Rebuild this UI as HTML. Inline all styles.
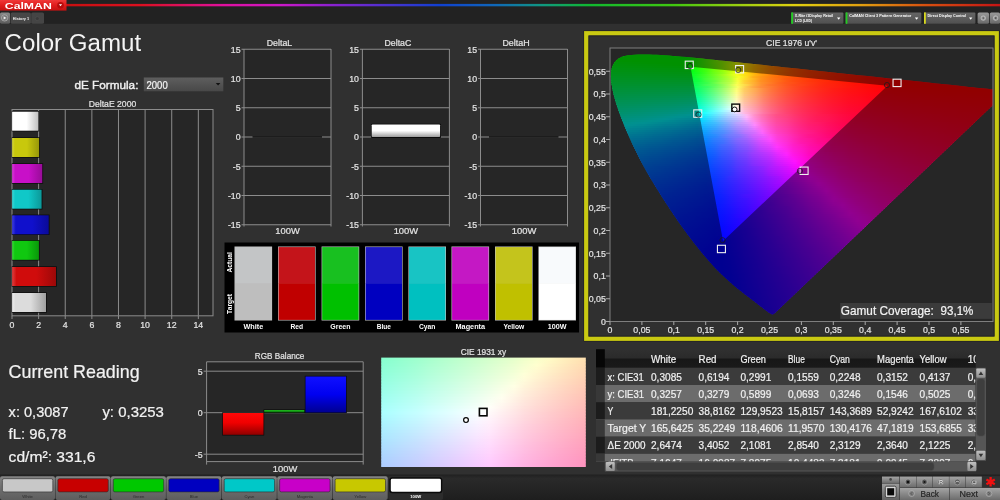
<!DOCTYPE html>
<html><head><meta charset="utf-8"><title>CalMAN - Color Gamut</title>
<style>
html,body{margin:0;padding:0;background:#303030;overflow:hidden}
svg{display:block;position:absolute;left:0;top:0;will-change:transform}
text{font-family:"Liberation Sans",sans-serif}
</style></head><body>
<svg width="1000" height="500" viewBox="0 0 1000 500">
<defs>
<linearGradient id="rb" x1="0" y1="0" x2="1" y2="0"><stop offset="0" stop-color="#c81010"/><stop offset="0.08" stop-color="#dc1020"/><stop offset="0.17" stop-color="#e010a0"/><stop offset="0.23" stop-color="#cc18c8"/><stop offset="0.28" stop-color="#9020d0"/><stop offset="0.34" stop-color="#5030d0"/><stop offset="0.4" stop-color="#1040d0"/><stop offset="0.46" stop-color="#1068b8"/><stop offset="0.51" stop-color="#109880"/><stop offset="0.56" stop-color="#10b830"/><stop offset="0.65" stop-color="#40c810"/><stop offset="0.73" stop-color="#a8d010"/><stop offset="0.78" stop-color="#e0d010"/><stop offset="0.85" stop-color="#e0a010"/><stop offset="0.92" stop-color="#d85010"/><stop offset="1" stop-color="#c41414"/></linearGradient>
<linearGradient id="logo" x1="0" y1="0" x2="0" y2="1"><stop offset="0" stop-color="#f03838"/><stop offset="0.5" stop-color="#e01c1c"/><stop offset="1" stop-color="#c41212"/></linearGradient>
<linearGradient id="gbtn" x1="0" y1="0" x2="0" y2="1"><stop offset="0" stop-color="#8a8a8a"/><stop offset="1" stop-color="#5a5a5a"/></linearGradient>
<linearGradient id="dd" x1="0" y1="0" x2="0" y2="1"><stop offset="0" stop-color="#666"/><stop offset="1" stop-color="#505050"/></linearGradient>
<linearGradient id="sb" x1="0" y1="0" x2="0" y2="1"><stop offset="0" stop-color="#9a9a9a"/><stop offset="1" stop-color="#686868"/></linearGradient>
<linearGradient id="sel" x1="0" y1="0" x2="0" y2="1"><stop offset="0" stop-color="#5e5e5e"/><stop offset="1" stop-color="#484848"/></linearGradient>
<linearGradient id="b0" x1="0" y1="0" x2="1" y2="0"><stop offset="0" stop-color="#ffffff"/><stop offset="0.1" stop-color="#ffffff"/><stop offset="0.55" stop-color="#ffffff"/><stop offset="1" stop-color="#c0c0c0"/></linearGradient>
<linearGradient id="b1" x1="0" y1="0" x2="1" y2="0"><stop offset="0" stop-color="#d6d640"/><stop offset="0.1" stop-color="#c8c80c"/><stop offset="0.55" stop-color="#c8c80c"/><stop offset="1" stop-color="#98980a"/></linearGradient>
<linearGradient id="b2" x1="0" y1="0" x2="1" y2="0"><stop offset="0" stop-color="#d840d8"/><stop offset="0.1" stop-color="#c810c8"/><stop offset="0.55" stop-color="#c810c8"/><stop offset="1" stop-color="#980c98"/></linearGradient>
<linearGradient id="b3" x1="0" y1="0" x2="1" y2="0"><stop offset="0" stop-color="#40d8d8"/><stop offset="0.1" stop-color="#10c8c8"/><stop offset="0.55" stop-color="#10c8c8"/><stop offset="1" stop-color="#0c9898"/></linearGradient>
<linearGradient id="b4" x1="0" y1="0" x2="1" y2="0"><stop offset="0" stop-color="#4040e0"/><stop offset="0.1" stop-color="#1010cc"/><stop offset="0.55" stop-color="#1010cc"/><stop offset="1" stop-color="#0a0a98"/></linearGradient>
<linearGradient id="b5" x1="0" y1="0" x2="1" y2="0"><stop offset="0" stop-color="#40d840"/><stop offset="0.1" stop-color="#10c810"/><stop offset="0.55" stop-color="#10c810"/><stop offset="1" stop-color="#0a980a"/></linearGradient>
<linearGradient id="b6" x1="0" y1="0" x2="1" y2="0"><stop offset="0" stop-color="#e04040"/><stop offset="0.1" stop-color="#d00c0c"/><stop offset="0.55" stop-color="#d00c0c"/><stop offset="1" stop-color="#9c0808"/></linearGradient>
<linearGradient id="b7" x1="0" y1="0" x2="1" y2="0"><stop offset="0" stop-color="#ececec"/><stop offset="0.1" stop-color="#dcdcdc"/><stop offset="0.55" stop-color="#dcdcdc"/><stop offset="1" stop-color="#a0a0a0"/></linearGradient>
<linearGradient id="dcb" x1="0" y1="0" x2="0" y2="1"><stop offset="0" stop-color="#ffffff"/><stop offset="0.5" stop-color="#ffffff"/><stop offset="1" stop-color="#9c9c9c"/></linearGradient>
<clipPath id="loc"><polygon points="773.88,314 773.83,313.99 773.78,313.97 773.73,314 773.67,314.06 773.58,314.08 773.47,314.04 773.36,314.04 773.29,314.11 773.24,314.2 773.18,314.25 773.09,314.28 772.94,314.29 772.76,314.28 772.55,314.25 772.37,314.25 772.18,314.26 771.95,314.23 771.7,314.18 771.38,314.05 770.91,313.81 770.31,313.48 769.63,313.06 768.87,312.54 768,311.93 767,311.21 765.84,310.36 764.53,309.39 763.09,308.27 761.51,307.01 759.77,305.63 757.87,304.15 755.75,302.52 753.38,300.7 750.76,298.69 747.88,296.49 744.79,294.13 741.46,291.55 737.85,288.68 733.92,285.45 729.73,281.86 725.28,277.87 720.44,273.25 714.99,267.63 708.77,260.79 701.93,252.8 694.7,243.84 687.09,233.86 679.15,222.83 671.02,210.87 662.83,198.27 654.73,185.32 646.94,172.15 639.79,159.04 633.49,146.32 627.96,134.19 623.18,122.84 619.23,112.48 616.12,103.25 613.81,95.14 612.21,88.05 611.24,81.93 610.88,76.7 611.07,72.18 611.76,68.28 612.96,64.95 614.61,62.17 616.66,59.92 619.08,58.17 621.8,56.86 624.75,55.93 627.9,55.32 631.24,54.94 634.72,54.7 638.32,54.58 641.94,54.53 645.56,54.53 649.2,54.59 652.9,54.69 656.67,54.84 660.55,55.04 664.54,55.28 668.66,55.57 672.92,55.9 677.33,56.26 681.9,56.66 686.66,57.09 691.6,57.56 696.75,58.06 702.11,58.59 707.68,59.16 713.5,59.75 719.55,60.38 725.86,61.03 732.42,61.72 739.24,62.44 746.33,63.19 753.7,63.97 761.33,64.79 769.22,65.63 777.37,66.5 785.77,67.4 794.41,68.32 803.25,69.26 812.28,70.22 821.48,71.2 830.82,72.19 840.19,73.2 849.43,74.18 858.48,75.15 867.44,76.1 876.38,77.05 885.16,77.99 893.59,78.89 901.63,79.74 909.3,80.55 916.63,81.33 923.58,82.07 930.1,82.77 936.21,83.42 941.89,84.03 947.19,84.59 952.13,85.12 956.73,85.6 961.01,86.06 965.04,86.49 968.88,86.9 972.5,87.28 975.88,87.65 979.04,87.98 981.97,88.3 984.68,88.59 987.17,88.85 989.4,89.09 991.35,89.3 993.1,89.48 994.72,89.66 996.18,89.81 997.5,89.95 998.67,90.08 999.69,90.19 1000.54,90.28 1001.25,90.35 1001.89,90.42 1002.52,90.49 1003.1,90.55 1003.62,90.61 1004.1,90.66 1004.57,90.71 1005.05,90.76 1005.52,90.81 1005.98,90.86 1006.41,90.91 1006.77,90.94 1007.01,90.97 1007.19,90.99 1007.35,91.01 1007.48,91.02 1007.59,91.03 1007.68,91.04 1007.71,91.04"/></clipPath>
<clipPath id="plotc"><rect x="610" y="48" width="383" height="273.5"/></clipPath>
<linearGradient id="r0" x1="618" y1="0" x2="682" y2="0" gradientUnits="userSpaceOnUse"><stop offset="0" stop-color="#00ff00"/><stop offset="0.12" stop-color="#00ff00"/><stop offset="0.25" stop-color="#00ff00"/><stop offset="0.38" stop-color="#00ff00"/><stop offset="0.5" stop-color="#00ff00"/><stop offset="0.62" stop-color="#00ff00"/><stop offset="0.75" stop-color="#00ff00"/><stop offset="0.88" stop-color="#00ff00"/><stop offset="1" stop-color="#00ff00"/></linearGradient>
<linearGradient id="r1" x1="610" y1="0" x2="698" y2="0" gradientUnits="userSpaceOnUse"><stop offset="0" stop-color="#00ff00"/><stop offset="0.09" stop-color="#00ff00"/><stop offset="0.18" stop-color="#00ff00"/><stop offset="0.27" stop-color="#00ff00"/><stop offset="0.36" stop-color="#00ff00"/><stop offset="0.45" stop-color="#00ff00"/><stop offset="0.55" stop-color="#00ff00"/><stop offset="0.64" stop-color="#00ff00"/><stop offset="0.73" stop-color="#00ff00"/><stop offset="0.82" stop-color="#00ff00"/><stop offset="0.91" stop-color="#07ff00"/><stop offset="1" stop-color="#26ff00"/></linearGradient>
<linearGradient id="r2" x1="610" y1="0" x2="722" y2="0" gradientUnits="userSpaceOnUse"><stop offset="0" stop-color="#00ff01"/><stop offset="0.07" stop-color="#00ff00"/><stop offset="0.14" stop-color="#00ff00"/><stop offset="0.21" stop-color="#00ff00"/><stop offset="0.29" stop-color="#00ff00"/><stop offset="0.36" stop-color="#00ff00"/><stop offset="0.43" stop-color="#00ff00"/><stop offset="0.5" stop-color="#00ff00"/><stop offset="0.57" stop-color="#00ff00"/><stop offset="0.64" stop-color="#00ff00"/><stop offset="0.71" stop-color="#05ff00"/><stop offset="0.79" stop-color="#25ff00"/><stop offset="0.86" stop-color="#47ff00"/><stop offset="0.93" stop-color="#6bff00"/><stop offset="1" stop-color="#92ff00"/></linearGradient>
<linearGradient id="r3" x1="610" y1="0" x2="738" y2="0" gradientUnits="userSpaceOnUse"><stop offset="0" stop-color="#00ff07"/><stop offset="0.06" stop-color="#00ff05"/><stop offset="0.12" stop-color="#00ff03"/><stop offset="0.19" stop-color="#00ff01"/><stop offset="0.25" stop-color="#00ff00"/><stop offset="0.31" stop-color="#00ff00"/><stop offset="0.38" stop-color="#00ff00"/><stop offset="0.44" stop-color="#00ff00"/><stop offset="0.5" stop-color="#00ff00"/><stop offset="0.56" stop-color="#00ff00"/><stop offset="0.62" stop-color="#04ff00"/><stop offset="0.69" stop-color="#24ff00"/><stop offset="0.75" stop-color="#46ff00"/><stop offset="0.81" stop-color="#6bff00"/><stop offset="0.88" stop-color="#92ff00"/><stop offset="0.94" stop-color="#bdff00"/><stop offset="1" stop-color="#ecff00"/></linearGradient>
<linearGradient id="r4" x1="610" y1="0" x2="762" y2="0" gradientUnits="userSpaceOnUse"><stop offset="0" stop-color="#00ff0c"/><stop offset="0.05" stop-color="#00ff0b"/><stop offset="0.11" stop-color="#00ff09"/><stop offset="0.16" stop-color="#00ff07"/><stop offset="0.21" stop-color="#00ff05"/><stop offset="0.26" stop-color="#00ff03"/><stop offset="0.32" stop-color="#00ff01"/><stop offset="0.37" stop-color="#00ff00"/><stop offset="0.42" stop-color="#00ff00"/><stop offset="0.47" stop-color="#00ff00"/><stop offset="0.53" stop-color="#03ff00"/><stop offset="0.58" stop-color="#23ff00"/><stop offset="0.63" stop-color="#45ff00"/><stop offset="0.68" stop-color="#6aff00"/><stop offset="0.74" stop-color="#92ff00"/><stop offset="0.79" stop-color="#beff00"/><stop offset="0.84" stop-color="#edff00"/><stop offset="0.89" stop-color="#ffe100"/><stop offset="0.95" stop-color="#ffbc00"/><stop offset="1" stop-color="#ff9f00"/></linearGradient>
<linearGradient id="r5" x1="610" y1="0" x2="778" y2="0" gradientUnits="userSpaceOnUse"><stop offset="0" stop-color="#00ff12"/><stop offset="0.05" stop-color="#00ff11"/><stop offset="0.1" stop-color="#00ff0f"/><stop offset="0.14" stop-color="#00ff0d"/><stop offset="0.19" stop-color="#00ff0c"/><stop offset="0.24" stop-color="#00ff0a"/><stop offset="0.29" stop-color="#00ff08"/><stop offset="0.33" stop-color="#00ff05"/><stop offset="0.38" stop-color="#00ff03"/><stop offset="0.43" stop-color="#00ff00"/><stop offset="0.48" stop-color="#01ff00"/><stop offset="0.52" stop-color="#22ff00"/><stop offset="0.57" stop-color="#44ff00"/><stop offset="0.62" stop-color="#6aff00"/><stop offset="0.67" stop-color="#92ff00"/><stop offset="0.71" stop-color="#beff00"/><stop offset="0.76" stop-color="#eeff00"/><stop offset="0.81" stop-color="#ffe000"/><stop offset="0.86" stop-color="#ffbb00"/><stop offset="0.9" stop-color="#ff9e00"/><stop offset="0.95" stop-color="#ff8700"/><stop offset="1" stop-color="#ff7400"/></linearGradient>
<linearGradient id="r6" x1="610" y1="0" x2="794" y2="0" gradientUnits="userSpaceOnUse"><stop offset="0" stop-color="#00ff18"/><stop offset="0.04" stop-color="#00ff17"/><stop offset="0.09" stop-color="#00ff15"/><stop offset="0.13" stop-color="#00ff14"/><stop offset="0.17" stop-color="#00ff12"/><stop offset="0.22" stop-color="#00ff10"/><stop offset="0.26" stop-color="#00ff0e"/><stop offset="0.3" stop-color="#00ff0c"/><stop offset="0.35" stop-color="#00ff0a"/><stop offset="0.39" stop-color="#00ff08"/><stop offset="0.43" stop-color="#00ff06"/><stop offset="0.48" stop-color="#21ff03"/><stop offset="0.52" stop-color="#44ff00"/><stop offset="0.57" stop-color="#69ff00"/><stop offset="0.61" stop-color="#92ff00"/><stop offset="0.65" stop-color="#bfff00"/><stop offset="0.7" stop-color="#efff00"/><stop offset="0.74" stop-color="#ffde00"/><stop offset="0.78" stop-color="#ffb900"/><stop offset="0.83" stop-color="#ff9c00"/><stop offset="0.87" stop-color="#ff8500"/><stop offset="0.91" stop-color="#ff7300"/><stop offset="0.96" stop-color="#ff6300"/><stop offset="1" stop-color="#ff5600"/></linearGradient>
<linearGradient id="r7" x1="610" y1="0" x2="818" y2="0" gradientUnits="userSpaceOnUse"><stop offset="0" stop-color="#00ff1e"/><stop offset="0.04" stop-color="#00ff1d"/><stop offset="0.08" stop-color="#00ff1c"/><stop offset="0.12" stop-color="#00ff1a"/><stop offset="0.15" stop-color="#00ff19"/><stop offset="0.19" stop-color="#00ff17"/><stop offset="0.23" stop-color="#00ff16"/><stop offset="0.27" stop-color="#00ff14"/><stop offset="0.31" stop-color="#00ff12"/><stop offset="0.35" stop-color="#00ff10"/><stop offset="0.38" stop-color="#00ff0e"/><stop offset="0.42" stop-color="#1fff0b"/><stop offset="0.46" stop-color="#43ff09"/><stop offset="0.5" stop-color="#69ff06"/><stop offset="0.54" stop-color="#92ff03"/><stop offset="0.58" stop-color="#bfff00"/><stop offset="0.62" stop-color="#f1ff00"/><stop offset="0.65" stop-color="#ffdd00"/><stop offset="0.69" stop-color="#ffb800"/><stop offset="0.73" stop-color="#ff9b00"/><stop offset="0.77" stop-color="#ff8400"/><stop offset="0.81" stop-color="#ff7100"/><stop offset="0.85" stop-color="#ff6200"/><stop offset="0.88" stop-color="#ff5400"/><stop offset="0.92" stop-color="#ff4900"/><stop offset="0.96" stop-color="#ff3f00"/><stop offset="1" stop-color="#ff3700"/></linearGradient>
<linearGradient id="r8" x1="610" y1="0" x2="834" y2="0" gradientUnits="userSpaceOnUse"><stop offset="0" stop-color="#00ff24"/><stop offset="0.04" stop-color="#00ff23"/><stop offset="0.07" stop-color="#00ff22"/><stop offset="0.11" stop-color="#00ff21"/><stop offset="0.14" stop-color="#00ff20"/><stop offset="0.18" stop-color="#00ff1e"/><stop offset="0.21" stop-color="#00ff1d"/><stop offset="0.25" stop-color="#00ff1b"/><stop offset="0.29" stop-color="#00ff19"/><stop offset="0.32" stop-color="#00ff18"/><stop offset="0.36" stop-color="#00ff16"/><stop offset="0.39" stop-color="#1eff14"/><stop offset="0.43" stop-color="#42ff11"/><stop offset="0.46" stop-color="#69ff0f"/><stop offset="0.5" stop-color="#92ff0c"/><stop offset="0.54" stop-color="#c0ff0a"/><stop offset="0.57" stop-color="#f2ff06"/><stop offset="0.61" stop-color="#ffdb03"/><stop offset="0.64" stop-color="#ffb600"/><stop offset="0.68" stop-color="#ff9a00"/><stop offset="0.71" stop-color="#ff8300"/><stop offset="0.75" stop-color="#ff7000"/><stop offset="0.79" stop-color="#ff6000"/><stop offset="0.82" stop-color="#ff5300"/><stop offset="0.86" stop-color="#ff4800"/><stop offset="0.89" stop-color="#ff3e00"/><stop offset="0.93" stop-color="#ff3600"/><stop offset="0.96" stop-color="#ff2e00"/><stop offset="1" stop-color="#ff2700"/></linearGradient>
<linearGradient id="r9" x1="610" y1="0" x2="850" y2="0" gradientUnits="userSpaceOnUse"><stop offset="0" stop-color="#00ff2b"/><stop offset="0.03" stop-color="#00ff2a"/><stop offset="0.07" stop-color="#00ff29"/><stop offset="0.1" stop-color="#00ff28"/><stop offset="0.13" stop-color="#00ff27"/><stop offset="0.17" stop-color="#00ff25"/><stop offset="0.2" stop-color="#00ff24"/><stop offset="0.23" stop-color="#00ff23"/><stop offset="0.27" stop-color="#00ff21"/><stop offset="0.3" stop-color="#00ff20"/><stop offset="0.33" stop-color="#00ff1e"/><stop offset="0.37" stop-color="#1dff1c"/><stop offset="0.4" stop-color="#41ff1a"/><stop offset="0.43" stop-color="#68ff18"/><stop offset="0.47" stop-color="#92ff16"/><stop offset="0.5" stop-color="#c1ff14"/><stop offset="0.53" stop-color="#f3ff11"/><stop offset="0.57" stop-color="#ffda0c"/><stop offset="0.6" stop-color="#ffb508"/><stop offset="0.63" stop-color="#ff9804"/><stop offset="0.67" stop-color="#ff8102"/><stop offset="0.7" stop-color="#ff6f00"/><stop offset="0.73" stop-color="#ff5f00"/><stop offset="0.77" stop-color="#ff5200"/><stop offset="0.8" stop-color="#ff4700"/><stop offset="0.83" stop-color="#ff3d00"/><stop offset="0.87" stop-color="#ff3500"/><stop offset="0.9" stop-color="#ff2d00"/><stop offset="0.93" stop-color="#ff2600"/><stop offset="0.97" stop-color="#ff2100"/><stop offset="1" stop-color="#ff1b00"/></linearGradient>
<linearGradient id="r10" x1="610" y1="0" x2="874" y2="0" gradientUnits="userSpaceOnUse"><stop offset="0" stop-color="#00ff31"/><stop offset="0.03" stop-color="#00ff30"/><stop offset="0.06" stop-color="#00ff2f"/><stop offset="0.09" stop-color="#00ff2e"/><stop offset="0.12" stop-color="#00ff2e"/><stop offset="0.15" stop-color="#00ff2d"/><stop offset="0.18" stop-color="#00ff2c"/><stop offset="0.21" stop-color="#00ff2a"/><stop offset="0.24" stop-color="#00ff29"/><stop offset="0.27" stop-color="#00ff28"/><stop offset="0.3" stop-color="#00ff27"/><stop offset="0.33" stop-color="#1cff25"/><stop offset="0.36" stop-color="#40ff24"/><stop offset="0.39" stop-color="#68ff22"/><stop offset="0.42" stop-color="#92ff20"/><stop offset="0.45" stop-color="#c1ff1e"/><stop offset="0.48" stop-color="#f4ff1c"/><stop offset="0.52" stop-color="#ffd815"/><stop offset="0.55" stop-color="#ffb310"/><stop offset="0.58" stop-color="#ff970c"/><stop offset="0.61" stop-color="#ff8008"/><stop offset="0.64" stop-color="#ff6d05"/><stop offset="0.67" stop-color="#ff5e03"/><stop offset="0.7" stop-color="#ff5101"/><stop offset="0.73" stop-color="#ff4600"/><stop offset="0.76" stop-color="#ff3c00"/><stop offset="0.79" stop-color="#ff3400"/><stop offset="0.82" stop-color="#ff2c00"/><stop offset="0.85" stop-color="#ff2500"/><stop offset="0.88" stop-color="#ff2000"/><stop offset="0.91" stop-color="#ff1a00"/><stop offset="0.94" stop-color="#ff1500"/><stop offset="0.97" stop-color="#ff1100"/><stop offset="1" stop-color="#ff0d00"/></linearGradient>
<linearGradient id="r11" x1="610" y1="0" x2="890" y2="0" gradientUnits="userSpaceOnUse"><stop offset="0" stop-color="#00ff37"/><stop offset="0.03" stop-color="#00ff37"/><stop offset="0.06" stop-color="#00ff36"/><stop offset="0.09" stop-color="#00ff35"/><stop offset="0.11" stop-color="#00ff35"/><stop offset="0.14" stop-color="#00ff34"/><stop offset="0.17" stop-color="#00ff33"/><stop offset="0.2" stop-color="#00ff32"/><stop offset="0.23" stop-color="#00ff31"/><stop offset="0.26" stop-color="#00ff30"/><stop offset="0.29" stop-color="#00ff2f"/><stop offset="0.31" stop-color="#1bff2e"/><stop offset="0.34" stop-color="#3fff2d"/><stop offset="0.37" stop-color="#67ff2b"/><stop offset="0.4" stop-color="#92ff2a"/><stop offset="0.43" stop-color="#c2ff28"/><stop offset="0.46" stop-color="#f5ff27"/><stop offset="0.49" stop-color="#ffd71f"/><stop offset="0.51" stop-color="#ffb218"/><stop offset="0.54" stop-color="#ff9513"/><stop offset="0.57" stop-color="#ff7f0f"/><stop offset="0.6" stop-color="#ff6c0b"/><stop offset="0.63" stop-color="#ff5d08"/><stop offset="0.66" stop-color="#ff5006"/><stop offset="0.69" stop-color="#ff4404"/><stop offset="0.71" stop-color="#ff3b02"/><stop offset="0.74" stop-color="#ff3201"/><stop offset="0.77" stop-color="#ff2b00"/><stop offset="0.8" stop-color="#ff2400"/><stop offset="0.83" stop-color="#ff1f00"/><stop offset="0.86" stop-color="#ff1900"/><stop offset="0.89" stop-color="#ff1500"/><stop offset="0.91" stop-color="#ff1000"/><stop offset="0.94" stop-color="#ff0c00"/><stop offset="0.97" stop-color="#ff0900"/><stop offset="1" stop-color="#ff0500"/></linearGradient>
<linearGradient id="r12" x1="610" y1="0" x2="906" y2="0" gradientUnits="userSpaceOnUse"><stop offset="0" stop-color="#00ff3e"/><stop offset="0.03" stop-color="#00ff3d"/><stop offset="0.05" stop-color="#00ff3d"/><stop offset="0.08" stop-color="#00ff3c"/><stop offset="0.11" stop-color="#00ff3c"/><stop offset="0.14" stop-color="#00ff3b"/><stop offset="0.16" stop-color="#00ff3b"/><stop offset="0.19" stop-color="#00ff3a"/><stop offset="0.22" stop-color="#00ff3a"/><stop offset="0.24" stop-color="#00ff39"/><stop offset="0.27" stop-color="#00ff38"/><stop offset="0.3" stop-color="#1aff37"/><stop offset="0.32" stop-color="#3fff36"/><stop offset="0.35" stop-color="#67ff35"/><stop offset="0.38" stop-color="#92ff34"/><stop offset="0.41" stop-color="#c2ff33"/><stop offset="0.43" stop-color="#f7ff32"/><stop offset="0.46" stop-color="#ffd629"/><stop offset="0.49" stop-color="#ffb021"/><stop offset="0.51" stop-color="#ff941a"/><stop offset="0.54" stop-color="#ff7d15"/><stop offset="0.57" stop-color="#ff6b11"/><stop offset="0.59" stop-color="#ff5b0e"/><stop offset="0.62" stop-color="#ff4e0b"/><stop offset="0.65" stop-color="#ff4309"/><stop offset="0.68" stop-color="#ff3a07"/><stop offset="0.7" stop-color="#ff3105"/><stop offset="0.73" stop-color="#ff2a03"/><stop offset="0.76" stop-color="#ff2302"/><stop offset="0.78" stop-color="#ff1e00"/><stop offset="0.81" stop-color="#ff1800"/><stop offset="0.84" stop-color="#ff1400"/><stop offset="0.86" stop-color="#ff0f00"/><stop offset="0.89" stop-color="#ff0b00"/><stop offset="0.92" stop-color="#ff0800"/><stop offset="0.95" stop-color="#ff0500"/><stop offset="0.97" stop-color="#ff0200"/><stop offset="1" stop-color="#ff0000"/></linearGradient>
<linearGradient id="r13" x1="610" y1="0" x2="930" y2="0" gradientUnits="userSpaceOnUse"><stop offset="0" stop-color="#00ff44"/><stop offset="0.03" stop-color="#00ff44"/><stop offset="0.05" stop-color="#00ff44"/><stop offset="0.07" stop-color="#00ff44"/><stop offset="0.1" stop-color="#00ff43"/><stop offset="0.12" stop-color="#00ff43"/><stop offset="0.15" stop-color="#00ff43"/><stop offset="0.17" stop-color="#00ff42"/><stop offset="0.2" stop-color="#00ff42"/><stop offset="0.23" stop-color="#00ff41"/><stop offset="0.25" stop-color="#00ff41"/><stop offset="0.28" stop-color="#18ff41"/><stop offset="0.3" stop-color="#3eff40"/><stop offset="0.33" stop-color="#66ff40"/><stop offset="0.35" stop-color="#92ff3f"/><stop offset="0.38" stop-color="#c3ff3e"/><stop offset="0.4" stop-color="#f8ff3e"/><stop offset="0.42" stop-color="#ffd432"/><stop offset="0.45" stop-color="#ffaf29"/><stop offset="0.47" stop-color="#ff9222"/><stop offset="0.5" stop-color="#ff7c1c"/><stop offset="0.53" stop-color="#ff6917"/><stop offset="0.55" stop-color="#ff5a13"/><stop offset="0.57" stop-color="#ff4d10"/><stop offset="0.6" stop-color="#ff420d"/><stop offset="0.62" stop-color="#ff390b"/><stop offset="0.65" stop-color="#ff3009"/><stop offset="0.68" stop-color="#ff2907"/><stop offset="0.7" stop-color="#ff2205"/><stop offset="0.72" stop-color="#ff1d04"/><stop offset="0.75" stop-color="#ff1703"/><stop offset="0.78" stop-color="#ff1301"/><stop offset="0.8" stop-color="#ff0f00"/><stop offset="0.82" stop-color="#ff0b00"/><stop offset="0.85" stop-color="#ff0700"/><stop offset="0.88" stop-color="#ff0400"/><stop offset="0.9" stop-color="#ff0100"/><stop offset="0.93" stop-color="#ff0000"/><stop offset="0.95" stop-color="#ff0000"/><stop offset="0.97" stop-color="#ff0000"/><stop offset="1" stop-color="#ff0000"/></linearGradient>
<linearGradient id="r14" x1="610" y1="0" x2="946" y2="0" gradientUnits="userSpaceOnUse"><stop offset="0" stop-color="#00ff4b"/><stop offset="0.02" stop-color="#00ff4b"/><stop offset="0.05" stop-color="#00ff4b"/><stop offset="0.07" stop-color="#00ff4b"/><stop offset="0.1" stop-color="#00ff4b"/><stop offset="0.12" stop-color="#00ff4b"/><stop offset="0.14" stop-color="#00ff4b"/><stop offset="0.17" stop-color="#00ff4b"/><stop offset="0.19" stop-color="#00ff4a"/><stop offset="0.21" stop-color="#00ff4a"/><stop offset="0.24" stop-color="#00ff4a"/><stop offset="0.26" stop-color="#17ff4a"/><stop offset="0.29" stop-color="#3dff4a"/><stop offset="0.31" stop-color="#66ff4a"/><stop offset="0.33" stop-color="#92ff4a"/><stop offset="0.36" stop-color="#c3ff4a"/><stop offset="0.38" stop-color="#f9ff49"/><stop offset="0.4" stop-color="#ffd23c"/><stop offset="0.43" stop-color="#ffad32"/><stop offset="0.45" stop-color="#ff9129"/><stop offset="0.48" stop-color="#ff7a23"/><stop offset="0.5" stop-color="#ff681d"/><stop offset="0.52" stop-color="#ff5919"/><stop offset="0.55" stop-color="#ff4c15"/><stop offset="0.57" stop-color="#ff4112"/><stop offset="0.6" stop-color="#ff370f"/><stop offset="0.62" stop-color="#ff2f0d"/><stop offset="0.64" stop-color="#ff280b"/><stop offset="0.67" stop-color="#ff2109"/><stop offset="0.69" stop-color="#ff1c07"/><stop offset="0.71" stop-color="#ff1706"/><stop offset="0.74" stop-color="#ff1204"/><stop offset="0.76" stop-color="#ff0e03"/><stop offset="0.79" stop-color="#ff0a02"/><stop offset="0.81" stop-color="#ff0601"/><stop offset="0.83" stop-color="#ff0300"/><stop offset="0.86" stop-color="#ff0000"/><stop offset="0.88" stop-color="#ff0000"/><stop offset="0.9" stop-color="#ff0000"/><stop offset="0.93" stop-color="#ff0000"/><stop offset="0.95" stop-color="#ff0000"/><stop offset="0.98" stop-color="#ff0000"/><stop offset="1" stop-color="#ff0000"/></linearGradient>
<linearGradient id="r15" x1="610" y1="0" x2="962" y2="0" gradientUnits="userSpaceOnUse"><stop offset="0" stop-color="#00ff52"/><stop offset="0.02" stop-color="#00ff52"/><stop offset="0.05" stop-color="#00ff52"/><stop offset="0.07" stop-color="#00ff52"/><stop offset="0.09" stop-color="#00ff52"/><stop offset="0.11" stop-color="#00ff53"/><stop offset="0.14" stop-color="#00ff53"/><stop offset="0.16" stop-color="#00ff53"/><stop offset="0.18" stop-color="#00ff53"/><stop offset="0.2" stop-color="#00ff53"/><stop offset="0.23" stop-color="#00ff54"/><stop offset="0.25" stop-color="#16ff54"/><stop offset="0.27" stop-color="#3cff54"/><stop offset="0.3" stop-color="#65ff54"/><stop offset="0.32" stop-color="#92ff55"/><stop offset="0.34" stop-color="#c4ff55"/><stop offset="0.36" stop-color="#fbff56"/><stop offset="0.39" stop-color="#ffd147"/><stop offset="0.41" stop-color="#ffac3a"/><stop offset="0.43" stop-color="#ff8f31"/><stop offset="0.45" stop-color="#ff792a"/><stop offset="0.48" stop-color="#ff6624"/><stop offset="0.5" stop-color="#ff571f"/><stop offset="0.52" stop-color="#ff4a1a"/><stop offset="0.55" stop-color="#ff4017"/><stop offset="0.57" stop-color="#ff3614"/><stop offset="0.59" stop-color="#ff2e11"/><stop offset="0.61" stop-color="#ff270f"/><stop offset="0.64" stop-color="#ff200d"/><stop offset="0.66" stop-color="#ff1b0b"/><stop offset="0.68" stop-color="#ff1609"/><stop offset="0.7" stop-color="#ff1108"/><stop offset="0.73" stop-color="#ff0d06"/><stop offset="0.75" stop-color="#ff0905"/><stop offset="0.77" stop-color="#ff0504"/><stop offset="0.8" stop-color="#ff0203"/><stop offset="0.82" stop-color="#ff0002"/><stop offset="0.84" stop-color="#ff0001"/><stop offset="0.86" stop-color="#ff0000"/><stop offset="0.89" stop-color="#ff0000"/><stop offset="0.91" stop-color="#ff0000"/><stop offset="0.93" stop-color="#ff0000"/><stop offset="0.95" stop-color="#ff0000"/><stop offset="0.98" stop-color="#ff0000"/><stop offset="1" stop-color="#ff0000"/></linearGradient>
<linearGradient id="r16" x1="610" y1="0" x2="986" y2="0" gradientUnits="userSpaceOnUse"><stop offset="0" stop-color="#00ff59"/><stop offset="0.02" stop-color="#00ff59"/><stop offset="0.04" stop-color="#00ff59"/><stop offset="0.06" stop-color="#00ff5a"/><stop offset="0.09" stop-color="#00ff5a"/><stop offset="0.11" stop-color="#00ff5b"/><stop offset="0.13" stop-color="#00ff5b"/><stop offset="0.15" stop-color="#00ff5b"/><stop offset="0.17" stop-color="#00ff5c"/><stop offset="0.19" stop-color="#00ff5d"/><stop offset="0.21" stop-color="#00ff5d"/><stop offset="0.23" stop-color="#14ff5e"/><stop offset="0.26" stop-color="#3bff5f"/><stop offset="0.28" stop-color="#65ff5f"/><stop offset="0.3" stop-color="#92ff60"/><stop offset="0.32" stop-color="#c5ff61"/><stop offset="0.34" stop-color="#fcff62"/><stop offset="0.36" stop-color="#ffcf51"/><stop offset="0.38" stop-color="#ffaa43"/><stop offset="0.4" stop-color="#ff8e39"/><stop offset="0.43" stop-color="#ff7730"/><stop offset="0.45" stop-color="#ff652a"/><stop offset="0.47" stop-color="#ff5624"/><stop offset="0.49" stop-color="#ff4920"/><stop offset="0.51" stop-color="#ff3e1c"/><stop offset="0.53" stop-color="#ff3518"/><stop offset="0.55" stop-color="#ff2d15"/><stop offset="0.57" stop-color="#ff2613"/><stop offset="0.6" stop-color="#ff1f10"/><stop offset="0.62" stop-color="#ff1a0e"/><stop offset="0.64" stop-color="#ff150c"/><stop offset="0.66" stop-color="#ff100b"/><stop offset="0.68" stop-color="#ff0c09"/><stop offset="0.7" stop-color="#ff0808"/><stop offset="0.72" stop-color="#ff0506"/><stop offset="0.74" stop-color="#ff0105"/><stop offset="0.77" stop-color="#ff0004"/><stop offset="0.79" stop-color="#ff0003"/><stop offset="0.81" stop-color="#ff0002"/><stop offset="0.83" stop-color="#ff0001"/><stop offset="0.85" stop-color="#ff0001"/><stop offset="0.87" stop-color="#ff0000"/><stop offset="0.89" stop-color="#ff0000"/><stop offset="0.91" stop-color="#ff0000"/><stop offset="0.94" stop-color="#ff0000"/><stop offset="0.96" stop-color="#ff0000"/><stop offset="0.98" stop-color="#ff0000"/><stop offset="1" stop-color="#ff0000"/></linearGradient>
<linearGradient id="r17" x1="610" y1="0" x2="994" y2="0" gradientUnits="userSpaceOnUse"><stop offset="0" stop-color="#00ff60"/><stop offset="0.02" stop-color="#00ff60"/><stop offset="0.04" stop-color="#00ff61"/><stop offset="0.06" stop-color="#00ff61"/><stop offset="0.08" stop-color="#00ff62"/><stop offset="0.1" stop-color="#00ff63"/><stop offset="0.12" stop-color="#00ff63"/><stop offset="0.15" stop-color="#00ff64"/><stop offset="0.17" stop-color="#00ff65"/><stop offset="0.19" stop-color="#00ff66"/><stop offset="0.21" stop-color="#00ff67"/><stop offset="0.23" stop-color="#13ff68"/><stop offset="0.25" stop-color="#3aff69"/><stop offset="0.27" stop-color="#64ff6a"/><stop offset="0.29" stop-color="#92ff6c"/><stop offset="0.31" stop-color="#c5ff6d"/><stop offset="0.33" stop-color="#feff6f"/><stop offset="0.35" stop-color="#ffce5b"/><stop offset="0.38" stop-color="#ffa94c"/><stop offset="0.4" stop-color="#ff8c41"/><stop offset="0.42" stop-color="#ff7637"/><stop offset="0.44" stop-color="#ff6430"/><stop offset="0.46" stop-color="#ff552a"/><stop offset="0.48" stop-color="#ff4825"/><stop offset="0.5" stop-color="#ff3d20"/><stop offset="0.52" stop-color="#ff341d"/><stop offset="0.54" stop-color="#ff2c19"/><stop offset="0.56" stop-color="#ff2517"/><stop offset="0.58" stop-color="#ff1e14"/><stop offset="0.6" stop-color="#ff1912"/><stop offset="0.62" stop-color="#ff1410"/><stop offset="0.65" stop-color="#ff0f0e"/><stop offset="0.67" stop-color="#ff0b0c"/><stop offset="0.69" stop-color="#ff070b"/><stop offset="0.71" stop-color="#ff0409"/><stop offset="0.73" stop-color="#ff0108"/><stop offset="0.75" stop-color="#ff0007"/><stop offset="0.77" stop-color="#ff0006"/><stop offset="0.79" stop-color="#ff0005"/><stop offset="0.81" stop-color="#ff0004"/><stop offset="0.83" stop-color="#ff0003"/><stop offset="0.85" stop-color="#ff0002"/><stop offset="0.88" stop-color="#ff0001"/><stop offset="0.9" stop-color="#ff0001"/><stop offset="0.92" stop-color="#ff0000"/><stop offset="0.94" stop-color="#ff0000"/><stop offset="0.96" stop-color="#ff0000"/><stop offset="0.98" stop-color="#ff0000"/><stop offset="1" stop-color="#ff0000"/></linearGradient>
<linearGradient id="r18" x1="610" y1="0" x2="994" y2="0" gradientUnits="userSpaceOnUse"><stop offset="0" stop-color="#00ff67"/><stop offset="0.02" stop-color="#00ff67"/><stop offset="0.04" stop-color="#00ff68"/><stop offset="0.06" stop-color="#00ff69"/><stop offset="0.08" stop-color="#00ff6a"/><stop offset="0.1" stop-color="#00ff6b"/><stop offset="0.12" stop-color="#00ff6c"/><stop offset="0.15" stop-color="#00ff6d"/><stop offset="0.17" stop-color="#00ff6e"/><stop offset="0.19" stop-color="#00ff70"/><stop offset="0.21" stop-color="#00ff71"/><stop offset="0.23" stop-color="#12ff72"/><stop offset="0.25" stop-color="#39ff74"/><stop offset="0.27" stop-color="#64ff76"/><stop offset="0.29" stop-color="#92ff78"/><stop offset="0.31" stop-color="#c6ff7a"/><stop offset="0.33" stop-color="#ffff7c"/><stop offset="0.35" stop-color="#ffcc66"/><stop offset="0.38" stop-color="#ffa755"/><stop offset="0.4" stop-color="#ff8b48"/><stop offset="0.42" stop-color="#ff743e"/><stop offset="0.44" stop-color="#ff6236"/><stop offset="0.46" stop-color="#ff5330"/><stop offset="0.48" stop-color="#ff472a"/><stop offset="0.5" stop-color="#ff3c25"/><stop offset="0.52" stop-color="#ff3321"/><stop offset="0.54" stop-color="#ff2b1e"/><stop offset="0.56" stop-color="#ff241a"/><stop offset="0.58" stop-color="#ff1d18"/><stop offset="0.6" stop-color="#ff1815"/><stop offset="0.62" stop-color="#ff1313"/><stop offset="0.65" stop-color="#ff0e11"/><stop offset="0.67" stop-color="#ff0a0f"/><stop offset="0.69" stop-color="#ff060d"/><stop offset="0.71" stop-color="#ff030c"/><stop offset="0.73" stop-color="#ff000b"/><stop offset="0.75" stop-color="#ff0009"/><stop offset="0.77" stop-color="#ff0008"/><stop offset="0.79" stop-color="#ff0007"/><stop offset="0.81" stop-color="#ff0006"/><stop offset="0.83" stop-color="#ff0005"/><stop offset="0.85" stop-color="#ff0004"/><stop offset="0.88" stop-color="#ff0003"/><stop offset="0.9" stop-color="#ff0002"/><stop offset="0.92" stop-color="#ff0002"/><stop offset="0.94" stop-color="#ff0001"/><stop offset="0.96" stop-color="#ff0000"/><stop offset="0.98" stop-color="#ff0000"/><stop offset="1" stop-color="#ff0000"/></linearGradient>
<linearGradient id="r19" x1="610" y1="0" x2="994" y2="0" gradientUnits="userSpaceOnUse"><stop offset="0" stop-color="#00ff6e"/><stop offset="0.02" stop-color="#00ff6f"/><stop offset="0.04" stop-color="#00ff70"/><stop offset="0.06" stop-color="#00ff71"/><stop offset="0.08" stop-color="#00ff72"/><stop offset="0.1" stop-color="#00ff73"/><stop offset="0.12" stop-color="#00ff75"/><stop offset="0.15" stop-color="#00ff76"/><stop offset="0.17" stop-color="#00ff78"/><stop offset="0.19" stop-color="#00ff79"/><stop offset="0.21" stop-color="#00ff7b"/><stop offset="0.23" stop-color="#10ff7d"/><stop offset="0.25" stop-color="#38ff7f"/><stop offset="0.27" stop-color="#63ff82"/><stop offset="0.29" stop-color="#92ff84"/><stop offset="0.31" stop-color="#c7ff87"/><stop offset="0.33" stop-color="#fffd89"/><stop offset="0.35" stop-color="#ffcb70"/><stop offset="0.38" stop-color="#ffa55e"/><stop offset="0.4" stop-color="#ff8950"/><stop offset="0.42" stop-color="#ff7346"/><stop offset="0.44" stop-color="#ff613d"/><stop offset="0.46" stop-color="#ff5235"/><stop offset="0.48" stop-color="#ff452f"/><stop offset="0.5" stop-color="#ff3b2a"/><stop offset="0.52" stop-color="#ff3126"/><stop offset="0.54" stop-color="#ff2922"/><stop offset="0.56" stop-color="#ff221e"/><stop offset="0.58" stop-color="#ff1c1b"/><stop offset="0.6" stop-color="#ff1719"/><stop offset="0.62" stop-color="#ff1216"/><stop offset="0.65" stop-color="#ff0d14"/><stop offset="0.67" stop-color="#ff0912"/><stop offset="0.69" stop-color="#ff0610"/><stop offset="0.71" stop-color="#ff020f"/><stop offset="0.73" stop-color="#ff000d"/><stop offset="0.75" stop-color="#ff000c"/><stop offset="0.77" stop-color="#ff000b"/><stop offset="0.79" stop-color="#ff0009"/><stop offset="0.81" stop-color="#ff0008"/><stop offset="0.83" stop-color="#ff0007"/><stop offset="0.85" stop-color="#ff0006"/><stop offset="0.88" stop-color="#ff0005"/><stop offset="0.9" stop-color="#ff0004"/><stop offset="0.92" stop-color="#ff0004"/><stop offset="0.94" stop-color="#ff0003"/><stop offset="0.96" stop-color="#ff0002"/><stop offset="0.98" stop-color="#ff0002"/><stop offset="1" stop-color="#ff0001"/></linearGradient>
<linearGradient id="r20" x1="610" y1="0" x2="994" y2="0" gradientUnits="userSpaceOnUse"><stop offset="0" stop-color="#00ff75"/><stop offset="0.02" stop-color="#00ff76"/><stop offset="0.04" stop-color="#00ff78"/><stop offset="0.06" stop-color="#00ff79"/><stop offset="0.08" stop-color="#00ff7a"/><stop offset="0.1" stop-color="#00ff7c"/><stop offset="0.12" stop-color="#00ff7e"/><stop offset="0.15" stop-color="#00ff7f"/><stop offset="0.17" stop-color="#00ff81"/><stop offset="0.19" stop-color="#00ff83"/><stop offset="0.21" stop-color="#00ff86"/><stop offset="0.23" stop-color="#0fff88"/><stop offset="0.25" stop-color="#37ff8b"/><stop offset="0.27" stop-color="#62ff8d"/><stop offset="0.29" stop-color="#92ff91"/><stop offset="0.31" stop-color="#c8ff94"/><stop offset="0.33" stop-color="#fffc96"/><stop offset="0.35" stop-color="#ffc97b"/><stop offset="0.38" stop-color="#ffa467"/><stop offset="0.4" stop-color="#ff8758"/><stop offset="0.42" stop-color="#ff714d"/><stop offset="0.44" stop-color="#ff5f43"/><stop offset="0.46" stop-color="#ff503b"/><stop offset="0.48" stop-color="#ff4435"/><stop offset="0.5" stop-color="#ff392f"/><stop offset="0.52" stop-color="#ff302a"/><stop offset="0.54" stop-color="#ff2826"/><stop offset="0.56" stop-color="#ff2122"/><stop offset="0.58" stop-color="#ff1b1f"/><stop offset="0.6" stop-color="#ff161c"/><stop offset="0.62" stop-color="#ff111a"/><stop offset="0.65" stop-color="#ff0c17"/><stop offset="0.67" stop-color="#ff0815"/><stop offset="0.69" stop-color="#ff0513"/><stop offset="0.71" stop-color="#ff0111"/><stop offset="0.73" stop-color="#ff0010"/><stop offset="0.75" stop-color="#ff000e"/><stop offset="0.77" stop-color="#ff000d"/><stop offset="0.79" stop-color="#ff000c"/><stop offset="0.81" stop-color="#ff000a"/><stop offset="0.83" stop-color="#ff0009"/><stop offset="0.85" stop-color="#ff0008"/><stop offset="0.88" stop-color="#ff0007"/><stop offset="0.9" stop-color="#ff0006"/><stop offset="0.92" stop-color="#ff0006"/><stop offset="0.94" stop-color="#ff0005"/><stop offset="0.96" stop-color="#ff0004"/><stop offset="0.98" stop-color="#ff0003"/><stop offset="1" stop-color="#ff0003"/></linearGradient>
<linearGradient id="r21" x1="610" y1="0" x2="994" y2="0" gradientUnits="userSpaceOnUse"><stop offset="0" stop-color="#00ff7d"/><stop offset="0.02" stop-color="#00ff7e"/><stop offset="0.04" stop-color="#00ff7f"/><stop offset="0.06" stop-color="#00ff81"/><stop offset="0.08" stop-color="#00ff83"/><stop offset="0.1" stop-color="#00ff85"/><stop offset="0.12" stop-color="#00ff87"/><stop offset="0.15" stop-color="#00ff89"/><stop offset="0.17" stop-color="#00ff8b"/><stop offset="0.19" stop-color="#00ff8e"/><stop offset="0.21" stop-color="#00ff90"/><stop offset="0.23" stop-color="#0dff93"/><stop offset="0.25" stop-color="#36ff96"/><stop offset="0.27" stop-color="#62ff9a"/><stop offset="0.29" stop-color="#93ff9e"/><stop offset="0.31" stop-color="#c8ffa2"/><stop offset="0.33" stop-color="#fffaa3"/><stop offset="0.35" stop-color="#ffc786"/><stop offset="0.38" stop-color="#ffa271"/><stop offset="0.4" stop-color="#ff8661"/><stop offset="0.42" stop-color="#ff7054"/><stop offset="0.44" stop-color="#ff5e4a"/><stop offset="0.46" stop-color="#ff4f41"/><stop offset="0.48" stop-color="#ff433a"/><stop offset="0.5" stop-color="#ff3834"/><stop offset="0.52" stop-color="#ff2f2f"/><stop offset="0.54" stop-color="#ff272a"/><stop offset="0.56" stop-color="#ff2026"/><stop offset="0.58" stop-color="#ff1a23"/><stop offset="0.6" stop-color="#ff1520"/><stop offset="0.62" stop-color="#ff101d"/><stop offset="0.65" stop-color="#ff0b1b"/><stop offset="0.67" stop-color="#ff0718"/><stop offset="0.69" stop-color="#ff0416"/><stop offset="0.71" stop-color="#ff0114"/><stop offset="0.73" stop-color="#ff0013"/><stop offset="0.75" stop-color="#ff0011"/><stop offset="0.77" stop-color="#ff000f"/><stop offset="0.79" stop-color="#ff000e"/><stop offset="0.81" stop-color="#ff000d"/><stop offset="0.83" stop-color="#ff000c"/><stop offset="0.85" stop-color="#ff000a"/><stop offset="0.88" stop-color="#ff0009"/><stop offset="0.9" stop-color="#ff0008"/><stop offset="0.92" stop-color="#ff0008"/><stop offset="0.94" stop-color="#ff0007"/><stop offset="0.96" stop-color="#ff0006"/><stop offset="0.98" stop-color="#ff0005"/><stop offset="1" stop-color="#ff0004"/></linearGradient>
<linearGradient id="r22" x1="610" y1="0" x2="994" y2="0" gradientUnits="userSpaceOnUse"><stop offset="0" stop-color="#00ff84"/><stop offset="0.02" stop-color="#00ff86"/><stop offset="0.04" stop-color="#00ff87"/><stop offset="0.06" stop-color="#00ff89"/><stop offset="0.08" stop-color="#00ff8b"/><stop offset="0.1" stop-color="#00ff8e"/><stop offset="0.12" stop-color="#00ff90"/><stop offset="0.15" stop-color="#00ff92"/><stop offset="0.17" stop-color="#00ff95"/><stop offset="0.19" stop-color="#00ff98"/><stop offset="0.21" stop-color="#00ff9b"/><stop offset="0.23" stop-color="#0cff9e"/><stop offset="0.25" stop-color="#34ffa2"/><stop offset="0.27" stop-color="#61ffa6"/><stop offset="0.29" stop-color="#93ffab"/><stop offset="0.31" stop-color="#c9ffb0"/><stop offset="0.33" stop-color="#fff9b1"/><stop offset="0.35" stop-color="#ffc591"/><stop offset="0.38" stop-color="#ffa07a"/><stop offset="0.4" stop-color="#ff8469"/><stop offset="0.42" stop-color="#ff6e5b"/><stop offset="0.44" stop-color="#ff5c50"/><stop offset="0.46" stop-color="#ff4e47"/><stop offset="0.48" stop-color="#ff413f"/><stop offset="0.5" stop-color="#ff3739"/><stop offset="0.52" stop-color="#ff2e34"/><stop offset="0.54" stop-color="#ff262f"/><stop offset="0.56" stop-color="#ff1f2a"/><stop offset="0.58" stop-color="#ff1927"/><stop offset="0.6" stop-color="#ff1423"/><stop offset="0.62" stop-color="#ff0f20"/><stop offset="0.65" stop-color="#ff0b1e"/><stop offset="0.67" stop-color="#ff071b"/><stop offset="0.69" stop-color="#ff0319"/><stop offset="0.71" stop-color="#ff0017"/><stop offset="0.73" stop-color="#ff0015"/><stop offset="0.75" stop-color="#ff0013"/><stop offset="0.77" stop-color="#ff0012"/><stop offset="0.79" stop-color="#ff0010"/><stop offset="0.81" stop-color="#ff000f"/><stop offset="0.83" stop-color="#ff000e"/><stop offset="0.85" stop-color="#ff000d"/><stop offset="0.88" stop-color="#ff000b"/><stop offset="0.9" stop-color="#ff000a"/><stop offset="0.92" stop-color="#ff0009"/><stop offset="0.94" stop-color="#ff0009"/><stop offset="0.96" stop-color="#ff0008"/><stop offset="0.98" stop-color="#ff0007"/><stop offset="1" stop-color="#ff0006"/></linearGradient>
<linearGradient id="r23" x1="610" y1="0" x2="994" y2="0" gradientUnits="userSpaceOnUse"><stop offset="0" stop-color="#00ff8c"/><stop offset="0.02" stop-color="#00ff8e"/><stop offset="0.04" stop-color="#00ff90"/><stop offset="0.06" stop-color="#00ff92"/><stop offset="0.08" stop-color="#00ff94"/><stop offset="0.1" stop-color="#00ff97"/><stop offset="0.12" stop-color="#00ff99"/><stop offset="0.15" stop-color="#00ff9c"/><stop offset="0.17" stop-color="#00ff9f"/><stop offset="0.19" stop-color="#00ffa3"/><stop offset="0.21" stop-color="#00ffa6"/><stop offset="0.23" stop-color="#0affaa"/><stop offset="0.25" stop-color="#33ffae"/><stop offset="0.27" stop-color="#61ffb3"/><stop offset="0.29" stop-color="#93ffb8"/><stop offset="0.31" stop-color="#caffbe"/><stop offset="0.33" stop-color="#fff7be"/><stop offset="0.35" stop-color="#ffc49c"/><stop offset="0.38" stop-color="#ff9f84"/><stop offset="0.4" stop-color="#ff8271"/><stop offset="0.42" stop-color="#ff6c62"/><stop offset="0.44" stop-color="#ff5b57"/><stop offset="0.46" stop-color="#ff4c4d"/><stop offset="0.48" stop-color="#ff4045"/><stop offset="0.5" stop-color="#ff363e"/><stop offset="0.52" stop-color="#ff2d38"/><stop offset="0.54" stop-color="#ff2533"/><stop offset="0.56" stop-color="#ff1e2f"/><stop offset="0.58" stop-color="#ff182b"/><stop offset="0.6" stop-color="#ff1327"/><stop offset="0.62" stop-color="#ff0e24"/><stop offset="0.65" stop-color="#ff0a21"/><stop offset="0.67" stop-color="#ff061e"/><stop offset="0.69" stop-color="#ff021c"/><stop offset="0.71" stop-color="#ff001a"/><stop offset="0.73" stop-color="#ff0018"/><stop offset="0.75" stop-color="#ff0016"/><stop offset="0.77" stop-color="#ff0014"/><stop offset="0.79" stop-color="#ff0013"/><stop offset="0.81" stop-color="#ff0011"/><stop offset="0.83" stop-color="#ff0010"/><stop offset="0.85" stop-color="#ff000f"/><stop offset="0.88" stop-color="#ff000e"/><stop offset="0.9" stop-color="#ff000c"/><stop offset="0.92" stop-color="#ff000b"/><stop offset="0.94" stop-color="#ff000a"/><stop offset="0.96" stop-color="#ff0009"/><stop offset="0.98" stop-color="#ff0009"/><stop offset="1" stop-color="#ff0008"/></linearGradient>
<linearGradient id="r24" x1="610" y1="0" x2="994" y2="0" gradientUnits="userSpaceOnUse"><stop offset="0" stop-color="#00ff93"/><stop offset="0.02" stop-color="#00ff96"/><stop offset="0.04" stop-color="#00ff98"/><stop offset="0.06" stop-color="#00ff9a"/><stop offset="0.08" stop-color="#00ff9d"/><stop offset="0.1" stop-color="#00ffa0"/><stop offset="0.12" stop-color="#00ffa3"/><stop offset="0.15" stop-color="#00ffa6"/><stop offset="0.17" stop-color="#00ffaa"/><stop offset="0.19" stop-color="#00ffad"/><stop offset="0.21" stop-color="#00ffb2"/><stop offset="0.23" stop-color="#08ffb6"/><stop offset="0.25" stop-color="#32ffbb"/><stop offset="0.27" stop-color="#60ffc0"/><stop offset="0.29" stop-color="#93ffc6"/><stop offset="0.31" stop-color="#cbffcd"/><stop offset="0.33" stop-color="#fff5cc"/><stop offset="0.35" stop-color="#ffc2a8"/><stop offset="0.38" stop-color="#ff9d8d"/><stop offset="0.4" stop-color="#ff8179"/><stop offset="0.42" stop-color="#ff6b6a"/><stop offset="0.44" stop-color="#ff595d"/><stop offset="0.46" stop-color="#ff4b53"/><stop offset="0.48" stop-color="#ff3f4a"/><stop offset="0.5" stop-color="#ff3443"/><stop offset="0.52" stop-color="#ff2b3d"/><stop offset="0.54" stop-color="#ff2437"/><stop offset="0.56" stop-color="#ff1d33"/><stop offset="0.58" stop-color="#ff172e"/><stop offset="0.6" stop-color="#ff122b"/><stop offset="0.62" stop-color="#ff0d27"/><stop offset="0.65" stop-color="#ff0924"/><stop offset="0.67" stop-color="#ff0521"/><stop offset="0.69" stop-color="#ff011f"/><stop offset="0.71" stop-color="#ff001d"/><stop offset="0.73" stop-color="#ff001b"/><stop offset="0.75" stop-color="#ff0019"/><stop offset="0.77" stop-color="#ff0017"/><stop offset="0.79" stop-color="#ff0015"/><stop offset="0.81" stop-color="#ff0014"/><stop offset="0.83" stop-color="#ff0012"/><stop offset="0.85" stop-color="#ff0011"/><stop offset="0.88" stop-color="#ff0010"/><stop offset="0.9" stop-color="#ff000e"/><stop offset="0.92" stop-color="#ff000d"/><stop offset="0.94" stop-color="#ff000c"/><stop offset="0.96" stop-color="#ff000b"/><stop offset="0.98" stop-color="#ff000a"/><stop offset="1" stop-color="#ff000a"/></linearGradient>
<linearGradient id="r25" x1="610" y1="0" x2="994" y2="0" gradientUnits="userSpaceOnUse"><stop offset="0" stop-color="#00ff9b"/><stop offset="0.02" stop-color="#00ff9e"/><stop offset="0.04" stop-color="#00ffa0"/><stop offset="0.06" stop-color="#00ffa3"/><stop offset="0.08" stop-color="#00ffa6"/><stop offset="0.1" stop-color="#00ffa9"/><stop offset="0.12" stop-color="#00ffad"/><stop offset="0.15" stop-color="#00ffb0"/><stop offset="0.17" stop-color="#00ffb4"/><stop offset="0.19" stop-color="#00ffb9"/><stop offset="0.21" stop-color="#00ffbd"/><stop offset="0.23" stop-color="#07ffc2"/><stop offset="0.25" stop-color="#31ffc8"/><stop offset="0.27" stop-color="#5fffce"/><stop offset="0.29" stop-color="#93ffd5"/><stop offset="0.31" stop-color="#cbffdc"/><stop offset="0.33" stop-color="#fff4da"/><stop offset="0.35" stop-color="#ffc0b3"/><stop offset="0.38" stop-color="#ff9b97"/><stop offset="0.4" stop-color="#ff7f82"/><stop offset="0.42" stop-color="#ff6971"/><stop offset="0.44" stop-color="#ff5864"/><stop offset="0.46" stop-color="#ff4959"/><stop offset="0.48" stop-color="#ff3d50"/><stop offset="0.5" stop-color="#ff3348"/><stop offset="0.52" stop-color="#ff2a42"/><stop offset="0.54" stop-color="#ff233c"/><stop offset="0.56" stop-color="#ff1c37"/><stop offset="0.58" stop-color="#ff1632"/><stop offset="0.6" stop-color="#ff112e"/><stop offset="0.62" stop-color="#ff0c2b"/><stop offset="0.65" stop-color="#ff0827"/><stop offset="0.67" stop-color="#ff0425"/><stop offset="0.69" stop-color="#ff0022"/><stop offset="0.71" stop-color="#ff001f"/><stop offset="0.73" stop-color="#ff001d"/><stop offset="0.75" stop-color="#ff001b"/><stop offset="0.77" stop-color="#ff0019"/><stop offset="0.79" stop-color="#ff0018"/><stop offset="0.81" stop-color="#ff0016"/><stop offset="0.83" stop-color="#ff0014"/><stop offset="0.85" stop-color="#ff0013"/><stop offset="0.88" stop-color="#ff0012"/><stop offset="0.9" stop-color="#ff0010"/><stop offset="0.92" stop-color="#ff000f"/><stop offset="0.94" stop-color="#ff000e"/><stop offset="0.96" stop-color="#ff000d"/><stop offset="0.98" stop-color="#ff000c"/><stop offset="1" stop-color="#ff000b"/></linearGradient>
<linearGradient id="r26" x1="610" y1="0" x2="994" y2="0" gradientUnits="userSpaceOnUse"><stop offset="0" stop-color="#00ffa3"/><stop offset="0.02" stop-color="#00ffa6"/><stop offset="0.04" stop-color="#00ffa9"/><stop offset="0.06" stop-color="#00ffac"/><stop offset="0.08" stop-color="#00ffaf"/><stop offset="0.1" stop-color="#00ffb3"/><stop offset="0.12" stop-color="#00ffb7"/><stop offset="0.15" stop-color="#00ffbb"/><stop offset="0.17" stop-color="#00ffbf"/><stop offset="0.19" stop-color="#00ffc4"/><stop offset="0.21" stop-color="#00ffc9"/><stop offset="0.23" stop-color="#05ffcf"/><stop offset="0.25" stop-color="#30ffd5"/><stop offset="0.27" stop-color="#5fffdc"/><stop offset="0.29" stop-color="#93ffe3"/><stop offset="0.31" stop-color="#ccffec"/><stop offset="0.33" stop-color="#fff2e9"/><stop offset="0.35" stop-color="#ffbebf"/><stop offset="0.38" stop-color="#ff99a1"/><stop offset="0.4" stop-color="#ff7d8b"/><stop offset="0.42" stop-color="#ff6879"/><stop offset="0.44" stop-color="#ff566b"/><stop offset="0.46" stop-color="#ff485f"/><stop offset="0.48" stop-color="#ff3c56"/><stop offset="0.5" stop-color="#ff324d"/><stop offset="0.52" stop-color="#ff2946"/><stop offset="0.54" stop-color="#ff2140"/><stop offset="0.56" stop-color="#ff1b3b"/><stop offset="0.58" stop-color="#ff1536"/><stop offset="0.6" stop-color="#ff1032"/><stop offset="0.62" stop-color="#ff0b2e"/><stop offset="0.65" stop-color="#ff072b"/><stop offset="0.67" stop-color="#ff0328"/><stop offset="0.69" stop-color="#ff0025"/><stop offset="0.71" stop-color="#ff0022"/><stop offset="0.73" stop-color="#ff0020"/><stop offset="0.75" stop-color="#ff001e"/><stop offset="0.77" stop-color="#ff001c"/><stop offset="0.79" stop-color="#ff001a"/><stop offset="0.81" stop-color="#ff0018"/><stop offset="0.83" stop-color="#ff0017"/><stop offset="0.85" stop-color="#ff0015"/><stop offset="0.88" stop-color="#ff0014"/><stop offset="0.9" stop-color="#ff0012"/><stop offset="0.92" stop-color="#ff0011"/><stop offset="0.94" stop-color="#ff0010"/><stop offset="0.96" stop-color="#ff000f"/><stop offset="0.98" stop-color="#ff000e"/><stop offset="1" stop-color="#ff000d"/></linearGradient>
<linearGradient id="r27" x1="610" y1="0" x2="994" y2="0" gradientUnits="userSpaceOnUse"><stop offset="0" stop-color="#00ffab"/><stop offset="0.02" stop-color="#00ffae"/><stop offset="0.04" stop-color="#00ffb2"/><stop offset="0.06" stop-color="#00ffb5"/><stop offset="0.08" stop-color="#00ffb9"/><stop offset="0.1" stop-color="#00ffbd"/><stop offset="0.12" stop-color="#00ffc1"/><stop offset="0.15" stop-color="#00ffc5"/><stop offset="0.17" stop-color="#00ffca"/><stop offset="0.19" stop-color="#00ffcf"/><stop offset="0.21" stop-color="#00ffd5"/><stop offset="0.23" stop-color="#03ffdc"/><stop offset="0.25" stop-color="#2effe2"/><stop offset="0.27" stop-color="#5effea"/><stop offset="0.29" stop-color="#93fff3"/><stop offset="0.31" stop-color="#cdfffc"/><stop offset="0.33" stop-color="#fff0f7"/><stop offset="0.35" stop-color="#ffbdcb"/><stop offset="0.38" stop-color="#ff98ab"/><stop offset="0.4" stop-color="#ff7c93"/><stop offset="0.42" stop-color="#ff6681"/><stop offset="0.44" stop-color="#ff5572"/><stop offset="0.46" stop-color="#ff4665"/><stop offset="0.48" stop-color="#ff3a5b"/><stop offset="0.5" stop-color="#ff3052"/><stop offset="0.52" stop-color="#ff284b"/><stop offset="0.54" stop-color="#ff2045"/><stop offset="0.56" stop-color="#ff1a3f"/><stop offset="0.58" stop-color="#ff143a"/><stop offset="0.6" stop-color="#ff0f36"/><stop offset="0.62" stop-color="#ff0a32"/><stop offset="0.65" stop-color="#ff062e"/><stop offset="0.67" stop-color="#ff022b"/><stop offset="0.69" stop-color="#ff0028"/><stop offset="0.71" stop-color="#ff0025"/><stop offset="0.73" stop-color="#ff0023"/><stop offset="0.75" stop-color="#ff0020"/><stop offset="0.77" stop-color="#ff001e"/><stop offset="0.79" stop-color="#ff001c"/><stop offset="0.81" stop-color="#ff001b"/><stop offset="0.83" stop-color="#ff0019"/><stop offset="0.85" stop-color="#ff0017"/><stop offset="0.88" stop-color="#ff0016"/><stop offset="0.9" stop-color="#ff0014"/><stop offset="0.92" stop-color="#ff0013"/><stop offset="0.94" stop-color="#ff0012"/><stop offset="0.96" stop-color="#ff0011"/><stop offset="0.98" stop-color="#ff0010"/><stop offset="1" stop-color="#ff000f"/></linearGradient>
<linearGradient id="r28" x1="610" y1="0" x2="994" y2="0" gradientUnits="userSpaceOnUse"><stop offset="0" stop-color="#00ffb4"/><stop offset="0.02" stop-color="#00ffb7"/><stop offset="0.04" stop-color="#00ffba"/><stop offset="0.06" stop-color="#00ffbe"/><stop offset="0.08" stop-color="#00ffc2"/><stop offset="0.1" stop-color="#00ffc6"/><stop offset="0.12" stop-color="#00ffcb"/><stop offset="0.15" stop-color="#00ffd0"/><stop offset="0.17" stop-color="#00ffd5"/><stop offset="0.19" stop-color="#00ffdb"/><stop offset="0.21" stop-color="#00ffe2"/><stop offset="0.23" stop-color="#02ffe9"/><stop offset="0.25" stop-color="#2dfff0"/><stop offset="0.27" stop-color="#5dfff9"/><stop offset="0.29" stop-color="#91fcff"/><stop offset="0.31" stop-color="#c4f2ff"/><stop offset="0.33" stop-color="#f8e8ff"/><stop offset="0.35" stop-color="#ffbbd7"/><stop offset="0.38" stop-color="#ff96b5"/><stop offset="0.4" stop-color="#ff7a9c"/><stop offset="0.42" stop-color="#ff6488"/><stop offset="0.44" stop-color="#ff5378"/><stop offset="0.46" stop-color="#ff456c"/><stop offset="0.48" stop-color="#ff3961"/><stop offset="0.5" stop-color="#ff2f58"/><stop offset="0.52" stop-color="#ff2650"/><stop offset="0.54" stop-color="#ff1f49"/><stop offset="0.56" stop-color="#ff1843"/><stop offset="0.58" stop-color="#ff133e"/><stop offset="0.6" stop-color="#ff0e39"/><stop offset="0.62" stop-color="#ff0935"/><stop offset="0.65" stop-color="#ff0531"/><stop offset="0.67" stop-color="#ff012e"/><stop offset="0.69" stop-color="#ff002b"/><stop offset="0.71" stop-color="#ff0028"/><stop offset="0.73" stop-color="#ff0025"/><stop offset="0.75" stop-color="#ff0023"/><stop offset="0.77" stop-color="#ff0021"/><stop offset="0.79" stop-color="#ff001f"/><stop offset="0.81" stop-color="#ff001d"/><stop offset="0.83" stop-color="#ff001b"/><stop offset="0.85" stop-color="#ff0019"/><stop offset="0.88" stop-color="#ff0018"/><stop offset="0.9" stop-color="#ff0017"/><stop offset="0.92" stop-color="#ff0015"/><stop offset="0.94" stop-color="#ff0014"/><stop offset="0.96" stop-color="#ff0013"/><stop offset="0.98" stop-color="#ff0012"/><stop offset="1" stop-color="#ff0010"/></linearGradient>
<linearGradient id="r29" x1="610" y1="0" x2="994" y2="0" gradientUnits="userSpaceOnUse"><stop offset="0" stop-color="#00ffbc"/><stop offset="0.02" stop-color="#00ffc0"/><stop offset="0.04" stop-color="#00ffc3"/><stop offset="0.06" stop-color="#00ffc8"/><stop offset="0.08" stop-color="#00ffcc"/><stop offset="0.1" stop-color="#00ffd1"/><stop offset="0.12" stop-color="#00ffd6"/><stop offset="0.15" stop-color="#00ffdb"/><stop offset="0.17" stop-color="#00ffe1"/><stop offset="0.19" stop-color="#00ffe7"/><stop offset="0.21" stop-color="#00ffee"/><stop offset="0.23" stop-color="#00fff6"/><stop offset="0.25" stop-color="#2cffff"/><stop offset="0.27" stop-color="#59f6ff"/><stop offset="0.29" stop-color="#88edff"/><stop offset="0.31" stop-color="#b9e3ff"/><stop offset="0.33" stop-color="#ebdaff"/><stop offset="0.35" stop-color="#ffb9e3"/><stop offset="0.38" stop-color="#ff94c0"/><stop offset="0.4" stop-color="#ff78a5"/><stop offset="0.42" stop-color="#ff6390"/><stop offset="0.44" stop-color="#ff517f"/><stop offset="0.46" stop-color="#ff4372"/><stop offset="0.48" stop-color="#ff3866"/><stop offset="0.5" stop-color="#ff2e5d"/><stop offset="0.52" stop-color="#ff2555"/><stop offset="0.54" stop-color="#ff1e4e"/><stop offset="0.56" stop-color="#ff1747"/><stop offset="0.58" stop-color="#ff1242"/><stop offset="0.6" stop-color="#ff0c3d"/><stop offset="0.62" stop-color="#ff0839"/><stop offset="0.65" stop-color="#ff0435"/><stop offset="0.67" stop-color="#ff0031"/><stop offset="0.69" stop-color="#ff002e"/><stop offset="0.71" stop-color="#ff002b"/><stop offset="0.73" stop-color="#ff0028"/><stop offset="0.75" stop-color="#ff0026"/><stop offset="0.77" stop-color="#ff0023"/><stop offset="0.79" stop-color="#ff0021"/><stop offset="0.81" stop-color="#ff001f"/><stop offset="0.83" stop-color="#ff001d"/><stop offset="0.85" stop-color="#ff001c"/><stop offset="0.88" stop-color="#ff001a"/><stop offset="0.9" stop-color="#ff0019"/><stop offset="0.92" stop-color="#ff0017"/><stop offset="0.94" stop-color="#ff0016"/><stop offset="0.96" stop-color="#ff0015"/><stop offset="0.98" stop-color="#ff0013"/><stop offset="1" stop-color="#ff0012"/></linearGradient>
<linearGradient id="r30" x1="618" y1="0" x2="986" y2="0" gradientUnits="userSpaceOnUse"><stop offset="0" stop-color="#00ffc9"/><stop offset="0.02" stop-color="#00ffcd"/><stop offset="0.04" stop-color="#00ffd1"/><stop offset="0.07" stop-color="#00ffd6"/><stop offset="0.09" stop-color="#00ffdb"/><stop offset="0.11" stop-color="#00ffe0"/><stop offset="0.13" stop-color="#00ffe6"/><stop offset="0.15" stop-color="#00ffed"/><stop offset="0.17" stop-color="#00fff4"/><stop offset="0.2" stop-color="#00fffc"/><stop offset="0.22" stop-color="#00faff"/><stop offset="0.24" stop-color="#28f2ff"/><stop offset="0.26" stop-color="#54e9ff"/><stop offset="0.28" stop-color="#81e0ff"/><stop offset="0.3" stop-color="#afd6ff"/><stop offset="0.33" stop-color="#decdff"/><stop offset="0.35" stop-color="#ffb7f0"/><stop offset="0.37" stop-color="#ff92ca"/><stop offset="0.39" stop-color="#ff76ae"/><stop offset="0.41" stop-color="#ff6198"/><stop offset="0.43" stop-color="#ff5086"/><stop offset="0.46" stop-color="#ff4278"/><stop offset="0.48" stop-color="#ff366c"/><stop offset="0.5" stop-color="#ff2c62"/><stop offset="0.52" stop-color="#ff245a"/><stop offset="0.54" stop-color="#ff1d52"/><stop offset="0.57" stop-color="#ff164c"/><stop offset="0.59" stop-color="#ff1046"/><stop offset="0.61" stop-color="#ff0b41"/><stop offset="0.63" stop-color="#ff073c"/><stop offset="0.65" stop-color="#ff0338"/><stop offset="0.67" stop-color="#ff0034"/><stop offset="0.7" stop-color="#ff0031"/><stop offset="0.72" stop-color="#ff002e"/><stop offset="0.74" stop-color="#ff002b"/><stop offset="0.76" stop-color="#ff0028"/><stop offset="0.78" stop-color="#ff0026"/><stop offset="0.8" stop-color="#ff0024"/><stop offset="0.83" stop-color="#ff0022"/><stop offset="0.85" stop-color="#ff0020"/><stop offset="0.87" stop-color="#ff001e"/><stop offset="0.89" stop-color="#ff001c"/><stop offset="0.91" stop-color="#ff001b"/><stop offset="0.93" stop-color="#ff0019"/><stop offset="0.96" stop-color="#ff0018"/><stop offset="0.98" stop-color="#ff0016"/><stop offset="1" stop-color="#ff0015"/></linearGradient>
<linearGradient id="r31" x1="618" y1="0" x2="986" y2="0" gradientUnits="userSpaceOnUse"><stop offset="0" stop-color="#00ffd2"/><stop offset="0.02" stop-color="#00ffd6"/><stop offset="0.04" stop-color="#00ffdb"/><stop offset="0.07" stop-color="#00ffe0"/><stop offset="0.09" stop-color="#00ffe6"/><stop offset="0.11" stop-color="#00ffeb"/><stop offset="0.13" stop-color="#00fff2"/><stop offset="0.15" stop-color="#00fff9"/><stop offset="0.17" stop-color="#00fdff"/><stop offset="0.2" stop-color="#00f5ff"/><stop offset="0.22" stop-color="#00edff"/><stop offset="0.24" stop-color="#25e5ff"/><stop offset="0.26" stop-color="#4fdcff"/><stop offset="0.28" stop-color="#79d3ff"/><stop offset="0.3" stop-color="#a6caff"/><stop offset="0.33" stop-color="#d3c1ff"/><stop offset="0.35" stop-color="#ffb5fc"/><stop offset="0.37" stop-color="#ff90d5"/><stop offset="0.39" stop-color="#ff75b7"/><stop offset="0.41" stop-color="#ff5fa0"/><stop offset="0.43" stop-color="#ff4e8d"/><stop offset="0.46" stop-color="#ff407e"/><stop offset="0.48" stop-color="#ff3572"/><stop offset="0.5" stop-color="#ff2b67"/><stop offset="0.52" stop-color="#ff235e"/><stop offset="0.54" stop-color="#ff1b57"/><stop offset="0.57" stop-color="#ff1550"/><stop offset="0.59" stop-color="#ff0f4a"/><stop offset="0.61" stop-color="#ff0a44"/><stop offset="0.63" stop-color="#ff0640"/><stop offset="0.65" stop-color="#ff023b"/><stop offset="0.67" stop-color="#ff0037"/><stop offset="0.7" stop-color="#ff0034"/><stop offset="0.72" stop-color="#ff0031"/><stop offset="0.74" stop-color="#ff002e"/><stop offset="0.76" stop-color="#ff002b"/><stop offset="0.78" stop-color="#ff0028"/><stop offset="0.8" stop-color="#ff0026"/><stop offset="0.83" stop-color="#ff0024"/><stop offset="0.85" stop-color="#ff0022"/><stop offset="0.87" stop-color="#ff0020"/><stop offset="0.89" stop-color="#ff001e"/><stop offset="0.91" stop-color="#ff001d"/><stop offset="0.93" stop-color="#ff001b"/><stop offset="0.96" stop-color="#ff001a"/><stop offset="0.98" stop-color="#ff0018"/><stop offset="1" stop-color="#ff0017"/></linearGradient>
<linearGradient id="r32" x1="618" y1="0" x2="986" y2="0" gradientUnits="userSpaceOnUse"><stop offset="0" stop-color="#00ffdb"/><stop offset="0.02" stop-color="#00ffe0"/><stop offset="0.04" stop-color="#00ffe5"/><stop offset="0.07" stop-color="#00ffea"/><stop offset="0.09" stop-color="#00fff0"/><stop offset="0.11" stop-color="#00fff7"/><stop offset="0.13" stop-color="#00fffe"/><stop offset="0.15" stop-color="#00f9ff"/><stop offset="0.17" stop-color="#00f1ff"/><stop offset="0.2" stop-color="#00e9ff"/><stop offset="0.22" stop-color="#00e1ff"/><stop offset="0.24" stop-color="#22d9ff"/><stop offset="0.26" stop-color="#4ad1ff"/><stop offset="0.28" stop-color="#73c8ff"/><stop offset="0.3" stop-color="#9dbfff"/><stop offset="0.33" stop-color="#c9b6ff"/><stop offset="0.35" stop-color="#f5acff"/><stop offset="0.37" stop-color="#ff8edf"/><stop offset="0.39" stop-color="#ff73c0"/><stop offset="0.41" stop-color="#ff5ea8"/><stop offset="0.43" stop-color="#ff4d95"/><stop offset="0.46" stop-color="#ff3f85"/><stop offset="0.48" stop-color="#ff3378"/><stop offset="0.5" stop-color="#ff2a6d"/><stop offset="0.52" stop-color="#ff2163"/><stop offset="0.54" stop-color="#ff1a5b"/><stop offset="0.57" stop-color="#ff1454"/><stop offset="0.59" stop-color="#ff0e4e"/><stop offset="0.61" stop-color="#ff0948"/><stop offset="0.63" stop-color="#ff0543"/><stop offset="0.65" stop-color="#ff013f"/><stop offset="0.67" stop-color="#ff003b"/><stop offset="0.7" stop-color="#ff0037"/><stop offset="0.72" stop-color="#ff0033"/><stop offset="0.74" stop-color="#ff0030"/><stop offset="0.76" stop-color="#ff002e"/><stop offset="0.78" stop-color="#ff002b"/><stop offset="0.8" stop-color="#ff0029"/><stop offset="0.83" stop-color="#ff0026"/><stop offset="0.85" stop-color="#ff0024"/><stop offset="0.87" stop-color="#ff0022"/><stop offset="0.89" stop-color="#ff0020"/><stop offset="0.91" stop-color="#ff001f"/><stop offset="0.93" stop-color="#ff001d"/><stop offset="0.96" stop-color="#ff001c"/><stop offset="0.98" stop-color="#ff001a"/><stop offset="1" stop-color="#ff0019"/></linearGradient>
<linearGradient id="r33" x1="618" y1="0" x2="986" y2="0" gradientUnits="userSpaceOnUse"><stop offset="0" stop-color="#00ffe4"/><stop offset="0.02" stop-color="#00ffe9"/><stop offset="0.04" stop-color="#00ffef"/><stop offset="0.07" stop-color="#00fff5"/><stop offset="0.09" stop-color="#00fffb"/><stop offset="0.11" stop-color="#00fcff"/><stop offset="0.13" stop-color="#00f5ff"/><stop offset="0.15" stop-color="#00edff"/><stop offset="0.17" stop-color="#00e6ff"/><stop offset="0.2" stop-color="#00deff"/><stop offset="0.22" stop-color="#00d6ff"/><stop offset="0.24" stop-color="#1fceff"/><stop offset="0.26" stop-color="#45c6ff"/><stop offset="0.28" stop-color="#6dbdff"/><stop offset="0.3" stop-color="#95b5ff"/><stop offset="0.33" stop-color="#bfacff"/><stop offset="0.35" stop-color="#eaa2ff"/><stop offset="0.37" stop-color="#ff8cea"/><stop offset="0.39" stop-color="#ff71c9"/><stop offset="0.41" stop-color="#ff5cb0"/><stop offset="0.43" stop-color="#ff4b9c"/><stop offset="0.46" stop-color="#ff3d8b"/><stop offset="0.48" stop-color="#ff327e"/><stop offset="0.5" stop-color="#ff2872"/><stop offset="0.52" stop-color="#ff2068"/><stop offset="0.54" stop-color="#ff1960"/><stop offset="0.57" stop-color="#ff1358"/><stop offset="0.59" stop-color="#ff0d52"/><stop offset="0.61" stop-color="#ff084c"/><stop offset="0.63" stop-color="#ff0447"/><stop offset="0.65" stop-color="#ff0042"/><stop offset="0.67" stop-color="#ff003e"/><stop offset="0.7" stop-color="#ff003a"/><stop offset="0.72" stop-color="#ff0036"/><stop offset="0.74" stop-color="#ff0033"/><stop offset="0.76" stop-color="#ff0030"/><stop offset="0.78" stop-color="#ff002d"/><stop offset="0.8" stop-color="#ff002b"/><stop offset="0.83" stop-color="#ff0029"/><stop offset="0.85" stop-color="#ff0026"/><stop offset="0.87" stop-color="#ff0024"/><stop offset="0.89" stop-color="#ff0022"/><stop offset="0.91" stop-color="#ff0021"/><stop offset="0.93" stop-color="#ff001f"/><stop offset="0.96" stop-color="#ff001d"/><stop offset="0.98" stop-color="#ff001c"/><stop offset="1" stop-color="#ff001b"/></linearGradient>
<linearGradient id="r34" x1="618" y1="0" x2="978" y2="0" gradientUnits="userSpaceOnUse"><stop offset="0" stop-color="#00ffee"/><stop offset="0.02" stop-color="#00fff3"/><stop offset="0.04" stop-color="#00fff9"/><stop offset="0.07" stop-color="#00feff"/><stop offset="0.09" stop-color="#00f8ff"/><stop offset="0.11" stop-color="#00f1ff"/><stop offset="0.13" stop-color="#00eaff"/><stop offset="0.16" stop-color="#00e3ff"/><stop offset="0.18" stop-color="#00dbff"/><stop offset="0.2" stop-color="#00d4ff"/><stop offset="0.22" stop-color="#00ccff"/><stop offset="0.24" stop-color="#1cc4ff"/><stop offset="0.27" stop-color="#41bcff"/><stop offset="0.29" stop-color="#67b4ff"/><stop offset="0.31" stop-color="#8eabff"/><stop offset="0.33" stop-color="#b6a2ff"/><stop offset="0.36" stop-color="#df99ff"/><stop offset="0.38" stop-color="#ff8af5"/><stop offset="0.4" stop-color="#ff6fd3"/><stop offset="0.42" stop-color="#ff5ab8"/><stop offset="0.44" stop-color="#ff49a3"/><stop offset="0.47" stop-color="#ff3c92"/><stop offset="0.49" stop-color="#ff3084"/><stop offset="0.51" stop-color="#ff2778"/><stop offset="0.53" stop-color="#ff1f6d"/><stop offset="0.56" stop-color="#ff1864"/><stop offset="0.58" stop-color="#ff115d"/><stop offset="0.6" stop-color="#ff0c56"/><stop offset="0.62" stop-color="#ff0750"/><stop offset="0.64" stop-color="#ff034a"/><stop offset="0.67" stop-color="#ff0045"/><stop offset="0.69" stop-color="#ff0041"/><stop offset="0.71" stop-color="#ff003d"/><stop offset="0.73" stop-color="#ff0039"/><stop offset="0.76" stop-color="#ff0036"/><stop offset="0.78" stop-color="#ff0033"/><stop offset="0.8" stop-color="#ff0030"/><stop offset="0.82" stop-color="#ff002d"/><stop offset="0.84" stop-color="#ff002b"/><stop offset="0.87" stop-color="#ff0029"/><stop offset="0.89" stop-color="#ff0027"/><stop offset="0.91" stop-color="#ff0025"/><stop offset="0.93" stop-color="#ff0023"/><stop offset="0.96" stop-color="#ff0021"/><stop offset="0.98" stop-color="#ff001f"/><stop offset="1" stop-color="#ff001e"/></linearGradient>
<linearGradient id="r35" x1="618" y1="0" x2="978" y2="0" gradientUnits="userSpaceOnUse"><stop offset="0" stop-color="#00fff7"/><stop offset="0.02" stop-color="#00fffd"/><stop offset="0.04" stop-color="#00fbff"/><stop offset="0.07" stop-color="#00f4ff"/><stop offset="0.09" stop-color="#00edff"/><stop offset="0.11" stop-color="#00e7ff"/><stop offset="0.13" stop-color="#00e0ff"/><stop offset="0.16" stop-color="#00d9ff"/><stop offset="0.18" stop-color="#00d1ff"/><stop offset="0.2" stop-color="#00caff"/><stop offset="0.22" stop-color="#00c2ff"/><stop offset="0.24" stop-color="#1abbff"/><stop offset="0.27" stop-color="#3db3ff"/><stop offset="0.29" stop-color="#62aaff"/><stop offset="0.31" stop-color="#88a2ff"/><stop offset="0.33" stop-color="#ae9aff"/><stop offset="0.36" stop-color="#d591ff"/><stop offset="0.38" stop-color="#fe88ff"/><stop offset="0.4" stop-color="#ff6ddc"/><stop offset="0.42" stop-color="#ff58c0"/><stop offset="0.44" stop-color="#ff48aa"/><stop offset="0.47" stop-color="#ff3a98"/><stop offset="0.49" stop-color="#ff2f8a"/><stop offset="0.51" stop-color="#ff257d"/><stop offset="0.53" stop-color="#ff1d72"/><stop offset="0.56" stop-color="#ff1669"/><stop offset="0.58" stop-color="#ff1061"/><stop offset="0.6" stop-color="#ff0b5a"/><stop offset="0.62" stop-color="#ff0653"/><stop offset="0.64" stop-color="#ff024e"/><stop offset="0.67" stop-color="#ff0049"/><stop offset="0.69" stop-color="#ff0044"/><stop offset="0.71" stop-color="#ff0040"/><stop offset="0.73" stop-color="#ff003c"/><stop offset="0.76" stop-color="#ff0039"/><stop offset="0.78" stop-color="#ff0036"/><stop offset="0.8" stop-color="#ff0033"/><stop offset="0.82" stop-color="#ff0030"/><stop offset="0.84" stop-color="#ff002d"/><stop offset="0.87" stop-color="#ff002b"/><stop offset="0.89" stop-color="#ff0029"/><stop offset="0.91" stop-color="#ff0027"/><stop offset="0.93" stop-color="#ff0025"/><stop offset="0.96" stop-color="#ff0023"/><stop offset="0.98" stop-color="#ff0021"/><stop offset="1" stop-color="#ff0020"/></linearGradient>
<linearGradient id="r36" x1="618" y1="0" x2="978" y2="0" gradientUnits="userSpaceOnUse"><stop offset="0" stop-color="#00fdff"/><stop offset="0.02" stop-color="#00f7ff"/><stop offset="0.04" stop-color="#00f1ff"/><stop offset="0.07" stop-color="#00eaff"/><stop offset="0.09" stop-color="#00e4ff"/><stop offset="0.11" stop-color="#00ddff"/><stop offset="0.13" stop-color="#00d6ff"/><stop offset="0.16" stop-color="#00cfff"/><stop offset="0.18" stop-color="#00c8ff"/><stop offset="0.2" stop-color="#00c1ff"/><stop offset="0.22" stop-color="#00b9ff"/><stop offset="0.24" stop-color="#17b2ff"/><stop offset="0.27" stop-color="#3aaaff"/><stop offset="0.29" stop-color="#5da2ff"/><stop offset="0.31" stop-color="#819aff"/><stop offset="0.33" stop-color="#a691ff"/><stop offset="0.36" stop-color="#cc89ff"/><stop offset="0.38" stop-color="#f380ff"/><stop offset="0.4" stop-color="#ff6be6"/><stop offset="0.42" stop-color="#ff56c9"/><stop offset="0.44" stop-color="#ff46b2"/><stop offset="0.47" stop-color="#ff389f"/><stop offset="0.49" stop-color="#ff2d90"/><stop offset="0.51" stop-color="#ff2482"/><stop offset="0.53" stop-color="#ff1c77"/><stop offset="0.56" stop-color="#ff156e"/><stop offset="0.58" stop-color="#ff0f65"/><stop offset="0.6" stop-color="#ff0a5e"/><stop offset="0.62" stop-color="#ff0557"/><stop offset="0.64" stop-color="#ff0151"/><stop offset="0.67" stop-color="#ff004c"/><stop offset="0.69" stop-color="#ff0047"/><stop offset="0.71" stop-color="#ff0043"/><stop offset="0.73" stop-color="#ff003f"/><stop offset="0.76" stop-color="#ff003c"/><stop offset="0.78" stop-color="#ff0038"/><stop offset="0.8" stop-color="#ff0035"/><stop offset="0.82" stop-color="#ff0032"/><stop offset="0.84" stop-color="#ff0030"/><stop offset="0.87" stop-color="#ff002d"/><stop offset="0.89" stop-color="#ff002b"/><stop offset="0.91" stop-color="#ff0029"/><stop offset="0.93" stop-color="#ff0027"/><stop offset="0.96" stop-color="#ff0025"/><stop offset="0.98" stop-color="#ff0023"/><stop offset="1" stop-color="#ff0022"/></linearGradient>
<linearGradient id="r37" x1="618" y1="0" x2="978" y2="0" gradientUnits="userSpaceOnUse"><stop offset="0" stop-color="#00f4ff"/><stop offset="0.02" stop-color="#00edff"/><stop offset="0.04" stop-color="#00e7ff"/><stop offset="0.07" stop-color="#00e1ff"/><stop offset="0.09" stop-color="#00dbff"/><stop offset="0.11" stop-color="#00d4ff"/><stop offset="0.13" stop-color="#00cdff"/><stop offset="0.16" stop-color="#00c6ff"/><stop offset="0.18" stop-color="#00bfff"/><stop offset="0.2" stop-color="#00b8ff"/><stop offset="0.22" stop-color="#00b1ff"/><stop offset="0.24" stop-color="#15aaff"/><stop offset="0.27" stop-color="#36a2ff"/><stop offset="0.29" stop-color="#599aff"/><stop offset="0.31" stop-color="#7c92ff"/><stop offset="0.33" stop-color="#9f8aff"/><stop offset="0.36" stop-color="#c482ff"/><stop offset="0.38" stop-color="#e979ff"/><stop offset="0.4" stop-color="#ff69ef"/><stop offset="0.42" stop-color="#ff55d1"/><stop offset="0.44" stop-color="#ff44b9"/><stop offset="0.47" stop-color="#ff37a6"/><stop offset="0.49" stop-color="#ff2c96"/><stop offset="0.51" stop-color="#ff2388"/><stop offset="0.53" stop-color="#ff1b7c"/><stop offset="0.56" stop-color="#ff1472"/><stop offset="0.58" stop-color="#ff0e6a"/><stop offset="0.6" stop-color="#ff0962"/><stop offset="0.62" stop-color="#ff045b"/><stop offset="0.64" stop-color="#ff0055"/><stop offset="0.67" stop-color="#ff0050"/><stop offset="0.69" stop-color="#ff004b"/><stop offset="0.71" stop-color="#ff0046"/><stop offset="0.73" stop-color="#ff0042"/><stop offset="0.76" stop-color="#ff003e"/><stop offset="0.78" stop-color="#ff003b"/><stop offset="0.8" stop-color="#ff0038"/><stop offset="0.82" stop-color="#ff0035"/><stop offset="0.84" stop-color="#ff0032"/><stop offset="0.87" stop-color="#ff0030"/><stop offset="0.89" stop-color="#ff002d"/><stop offset="0.91" stop-color="#ff002b"/><stop offset="0.93" stop-color="#ff0029"/><stop offset="0.96" stop-color="#ff0027"/><stop offset="0.98" stop-color="#ff0025"/><stop offset="1" stop-color="#ff0024"/></linearGradient>
<linearGradient id="r38" x1="618" y1="0" x2="970" y2="0" gradientUnits="userSpaceOnUse"><stop offset="0" stop-color="#00ebff"/><stop offset="0.02" stop-color="#00e5ff"/><stop offset="0.05" stop-color="#00dfff"/><stop offset="0.07" stop-color="#00d8ff"/><stop offset="0.09" stop-color="#00d2ff"/><stop offset="0.11" stop-color="#00ccff"/><stop offset="0.14" stop-color="#00c5ff"/><stop offset="0.16" stop-color="#00beff"/><stop offset="0.18" stop-color="#00b7ff"/><stop offset="0.2" stop-color="#00b0ff"/><stop offset="0.23" stop-color="#00a9ff"/><stop offset="0.25" stop-color="#13a2ff"/><stop offset="0.27" stop-color="#339aff"/><stop offset="0.3" stop-color="#5493ff"/><stop offset="0.32" stop-color="#768bff"/><stop offset="0.34" stop-color="#9983ff"/><stop offset="0.36" stop-color="#bc7bff"/><stop offset="0.39" stop-color="#e072ff"/><stop offset="0.41" stop-color="#ff67f9"/><stop offset="0.43" stop-color="#ff53da"/><stop offset="0.45" stop-color="#ff42c1"/><stop offset="0.48" stop-color="#ff35ac"/><stop offset="0.5" stop-color="#ff2a9c"/><stop offset="0.52" stop-color="#ff218e"/><stop offset="0.55" stop-color="#ff1981"/><stop offset="0.57" stop-color="#ff1377"/><stop offset="0.59" stop-color="#ff0d6e"/><stop offset="0.61" stop-color="#ff0766"/><stop offset="0.64" stop-color="#ff035f"/><stop offset="0.66" stop-color="#ff0059"/><stop offset="0.68" stop-color="#ff0053"/><stop offset="0.7" stop-color="#ff004e"/><stop offset="0.73" stop-color="#ff0049"/><stop offset="0.75" stop-color="#ff0045"/><stop offset="0.77" stop-color="#ff0041"/><stop offset="0.8" stop-color="#ff003e"/><stop offset="0.82" stop-color="#ff003a"/><stop offset="0.84" stop-color="#ff0037"/><stop offset="0.86" stop-color="#ff0035"/><stop offset="0.89" stop-color="#ff0032"/><stop offset="0.91" stop-color="#ff002f"/><stop offset="0.93" stop-color="#ff002d"/><stop offset="0.95" stop-color="#ff002b"/><stop offset="0.98" stop-color="#ff0029"/><stop offset="1" stop-color="#ff0027"/></linearGradient>
<linearGradient id="r39" x1="618" y1="0" x2="970" y2="0" gradientUnits="userSpaceOnUse"><stop offset="0" stop-color="#00e2ff"/><stop offset="0.02" stop-color="#00dcff"/><stop offset="0.05" stop-color="#00d6ff"/><stop offset="0.07" stop-color="#00d0ff"/><stop offset="0.09" stop-color="#00caff"/><stop offset="0.11" stop-color="#00c4ff"/><stop offset="0.14" stop-color="#00bdff"/><stop offset="0.16" stop-color="#00b6ff"/><stop offset="0.18" stop-color="#00b0ff"/><stop offset="0.2" stop-color="#00a9ff"/><stop offset="0.23" stop-color="#00a2ff"/><stop offset="0.25" stop-color="#119bff"/><stop offset="0.27" stop-color="#3093ff"/><stop offset="0.3" stop-color="#508cff"/><stop offset="0.32" stop-color="#7184ff"/><stop offset="0.34" stop-color="#927cff"/><stop offset="0.36" stop-color="#b474ff"/><stop offset="0.39" stop-color="#d76cff"/><stop offset="0.41" stop-color="#fb64ff"/><stop offset="0.43" stop-color="#ff51e2"/><stop offset="0.45" stop-color="#ff41c8"/><stop offset="0.48" stop-color="#ff34b3"/><stop offset="0.5" stop-color="#ff29a2"/><stop offset="0.52" stop-color="#ff2093"/><stop offset="0.55" stop-color="#ff1887"/><stop offset="0.57" stop-color="#ff117c"/><stop offset="0.59" stop-color="#ff0b72"/><stop offset="0.61" stop-color="#ff066a"/><stop offset="0.64" stop-color="#ff0263"/><stop offset="0.66" stop-color="#ff005c"/><stop offset="0.68" stop-color="#ff0056"/><stop offset="0.7" stop-color="#ff0051"/><stop offset="0.73" stop-color="#ff004c"/><stop offset="0.75" stop-color="#ff0048"/><stop offset="0.77" stop-color="#ff0044"/><stop offset="0.8" stop-color="#ff0040"/><stop offset="0.82" stop-color="#ff003d"/><stop offset="0.84" stop-color="#ff003a"/><stop offset="0.86" stop-color="#ff0037"/><stop offset="0.89" stop-color="#ff0034"/><stop offset="0.91" stop-color="#ff0032"/><stop offset="0.93" stop-color="#ff002f"/><stop offset="0.95" stop-color="#ff002d"/><stop offset="0.98" stop-color="#ff002b"/><stop offset="1" stop-color="#ff0029"/></linearGradient>
<linearGradient id="r40" x1="626" y1="0" x2="970" y2="0" gradientUnits="userSpaceOnUse"><stop offset="0" stop-color="#00d4ff"/><stop offset="0.02" stop-color="#00ceff"/><stop offset="0.05" stop-color="#00c8ff"/><stop offset="0.07" stop-color="#00c2ff"/><stop offset="0.09" stop-color="#00bcff"/><stop offset="0.12" stop-color="#00b6ff"/><stop offset="0.14" stop-color="#00afff"/><stop offset="0.16" stop-color="#00a8ff"/><stop offset="0.19" stop-color="#00a2ff"/><stop offset="0.21" stop-color="#009bff"/><stop offset="0.23" stop-color="#0f94ff"/><stop offset="0.26" stop-color="#2e8dff"/><stop offset="0.28" stop-color="#4d85ff"/><stop offset="0.3" stop-color="#6c7eff"/><stop offset="0.33" stop-color="#8d76ff"/><stop offset="0.35" stop-color="#ad6eff"/><stop offset="0.37" stop-color="#cf66ff"/><stop offset="0.4" stop-color="#f25eff"/><stop offset="0.42" stop-color="#ff4feb"/><stop offset="0.44" stop-color="#ff3fd0"/><stop offset="0.47" stop-color="#ff32ba"/><stop offset="0.49" stop-color="#ff27a8"/><stop offset="0.51" stop-color="#ff1e99"/><stop offset="0.53" stop-color="#ff178c"/><stop offset="0.56" stop-color="#ff1081"/><stop offset="0.58" stop-color="#ff0a77"/><stop offset="0.6" stop-color="#ff056e"/><stop offset="0.63" stop-color="#ff0167"/><stop offset="0.65" stop-color="#ff0060"/><stop offset="0.67" stop-color="#ff005a"/><stop offset="0.7" stop-color="#ff0055"/><stop offset="0.72" stop-color="#ff0050"/><stop offset="0.74" stop-color="#ff004b"/><stop offset="0.77" stop-color="#ff0047"/><stop offset="0.79" stop-color="#ff0043"/><stop offset="0.81" stop-color="#ff0040"/><stop offset="0.84" stop-color="#ff003c"/><stop offset="0.86" stop-color="#ff0039"/><stop offset="0.88" stop-color="#ff0037"/><stop offset="0.91" stop-color="#ff0034"/><stop offset="0.93" stop-color="#ff0032"/><stop offset="0.95" stop-color="#ff002f"/><stop offset="0.98" stop-color="#ff002d"/><stop offset="1" stop-color="#ff002b"/></linearGradient>
<linearGradient id="r41" x1="626" y1="0" x2="970" y2="0" gradientUnits="userSpaceOnUse"><stop offset="0" stop-color="#00cdff"/><stop offset="0.02" stop-color="#00c7ff"/><stop offset="0.05" stop-color="#00c1ff"/><stop offset="0.07" stop-color="#00bbff"/><stop offset="0.09" stop-color="#00b5ff"/><stop offset="0.12" stop-color="#00afff"/><stop offset="0.14" stop-color="#00a8ff"/><stop offset="0.16" stop-color="#00a2ff"/><stop offset="0.19" stop-color="#009bff"/><stop offset="0.21" stop-color="#0094ff"/><stop offset="0.23" stop-color="#0e8dff"/><stop offset="0.26" stop-color="#2b86ff"/><stop offset="0.28" stop-color="#497fff"/><stop offset="0.3" stop-color="#6878ff"/><stop offset="0.33" stop-color="#8770ff"/><stop offset="0.35" stop-color="#a769ff"/><stop offset="0.37" stop-color="#c861ff"/><stop offset="0.4" stop-color="#e959ff"/><stop offset="0.42" stop-color="#ff4df4"/><stop offset="0.44" stop-color="#ff3dd8"/><stop offset="0.47" stop-color="#ff30c1"/><stop offset="0.49" stop-color="#ff26ae"/><stop offset="0.51" stop-color="#ff1d9e"/><stop offset="0.53" stop-color="#ff1591"/><stop offset="0.56" stop-color="#ff0f85"/><stop offset="0.58" stop-color="#ff097b"/><stop offset="0.6" stop-color="#ff0473"/><stop offset="0.63" stop-color="#ff006b"/><stop offset="0.65" stop-color="#ff0064"/><stop offset="0.67" stop-color="#ff005d"/><stop offset="0.7" stop-color="#ff0058"/><stop offset="0.72" stop-color="#ff0053"/><stop offset="0.74" stop-color="#ff004e"/><stop offset="0.77" stop-color="#ff004a"/><stop offset="0.79" stop-color="#ff0046"/><stop offset="0.81" stop-color="#ff0042"/><stop offset="0.84" stop-color="#ff003f"/><stop offset="0.86" stop-color="#ff003c"/><stop offset="0.88" stop-color="#ff0039"/><stop offset="0.91" stop-color="#ff0036"/><stop offset="0.93" stop-color="#ff0034"/><stop offset="0.95" stop-color="#ff0031"/><stop offset="0.98" stop-color="#ff002f"/><stop offset="1" stop-color="#ff002d"/></linearGradient>
<linearGradient id="r42" x1="626" y1="0" x2="962" y2="0" gradientUnits="userSpaceOnUse"><stop offset="0" stop-color="#00c6ff"/><stop offset="0.02" stop-color="#00c0ff"/><stop offset="0.05" stop-color="#00baff"/><stop offset="0.07" stop-color="#00b4ff"/><stop offset="0.1" stop-color="#00aeff"/><stop offset="0.12" stop-color="#00a8ff"/><stop offset="0.14" stop-color="#00a2ff"/><stop offset="0.17" stop-color="#009bff"/><stop offset="0.19" stop-color="#0095ff"/><stop offset="0.21" stop-color="#008eff"/><stop offset="0.24" stop-color="#0c87ff"/><stop offset="0.26" stop-color="#2980ff"/><stop offset="0.29" stop-color="#4679ff"/><stop offset="0.31" stop-color="#6472ff"/><stop offset="0.33" stop-color="#826bff"/><stop offset="0.36" stop-color="#a163ff"/><stop offset="0.38" stop-color="#c05cff"/><stop offset="0.4" stop-color="#e154ff"/><stop offset="0.43" stop-color="#ff4bfd"/><stop offset="0.45" stop-color="#ff3bdf"/><stop offset="0.48" stop-color="#ff2fc8"/><stop offset="0.5" stop-color="#ff24b4"/><stop offset="0.52" stop-color="#ff1ba4"/><stop offset="0.55" stop-color="#ff1496"/><stop offset="0.57" stop-color="#ff0d8a"/><stop offset="0.6" stop-color="#ff0880"/><stop offset="0.62" stop-color="#ff0377"/><stop offset="0.64" stop-color="#ff006f"/><stop offset="0.67" stop-color="#ff0067"/><stop offset="0.69" stop-color="#ff0061"/><stop offset="0.71" stop-color="#ff005b"/><stop offset="0.74" stop-color="#ff0056"/><stop offset="0.76" stop-color="#ff0051"/><stop offset="0.79" stop-color="#ff004d"/><stop offset="0.81" stop-color="#ff0049"/><stop offset="0.83" stop-color="#ff0045"/><stop offset="0.86" stop-color="#ff0041"/><stop offset="0.88" stop-color="#ff003e"/><stop offset="0.9" stop-color="#ff003b"/><stop offset="0.93" stop-color="#ff0038"/><stop offset="0.95" stop-color="#ff0036"/><stop offset="0.98" stop-color="#ff0033"/><stop offset="1" stop-color="#ff0031"/></linearGradient>
<linearGradient id="r43" x1="626" y1="0" x2="962" y2="0" gradientUnits="userSpaceOnUse"><stop offset="0" stop-color="#00bfff"/><stop offset="0.02" stop-color="#00b9ff"/><stop offset="0.05" stop-color="#00b3ff"/><stop offset="0.07" stop-color="#00aeff"/><stop offset="0.1" stop-color="#00a8ff"/><stop offset="0.12" stop-color="#00a2ff"/><stop offset="0.14" stop-color="#009bff"/><stop offset="0.17" stop-color="#0095ff"/><stop offset="0.19" stop-color="#008fff"/><stop offset="0.21" stop-color="#0088ff"/><stop offset="0.24" stop-color="#0b81ff"/><stop offset="0.26" stop-color="#267bff"/><stop offset="0.29" stop-color="#4374ff"/><stop offset="0.31" stop-color="#606dff"/><stop offset="0.33" stop-color="#7d66ff"/><stop offset="0.36" stop-color="#9b5eff"/><stop offset="0.38" stop-color="#ba57ff"/><stop offset="0.4" stop-color="#d94fff"/><stop offset="0.43" stop-color="#f948ff"/><stop offset="0.45" stop-color="#ff3ae7"/><stop offset="0.48" stop-color="#ff2dcf"/><stop offset="0.5" stop-color="#ff23bb"/><stop offset="0.52" stop-color="#ff1aaa"/><stop offset="0.55" stop-color="#ff129c"/><stop offset="0.57" stop-color="#ff0c8f"/><stop offset="0.6" stop-color="#ff0684"/><stop offset="0.62" stop-color="#ff027b"/><stop offset="0.64" stop-color="#ff0073"/><stop offset="0.67" stop-color="#ff006b"/><stop offset="0.69" stop-color="#ff0064"/><stop offset="0.71" stop-color="#ff005e"/><stop offset="0.74" stop-color="#ff0059"/><stop offset="0.76" stop-color="#ff0054"/><stop offset="0.79" stop-color="#ff0050"/><stop offset="0.81" stop-color="#ff004b"/><stop offset="0.83" stop-color="#ff0047"/><stop offset="0.86" stop-color="#ff0044"/><stop offset="0.88" stop-color="#ff0041"/><stop offset="0.9" stop-color="#ff003e"/><stop offset="0.93" stop-color="#ff003b"/><stop offset="0.95" stop-color="#ff0038"/><stop offset="0.98" stop-color="#ff0036"/><stop offset="1" stop-color="#ff0033"/></linearGradient>
<linearGradient id="r44" x1="626" y1="0" x2="962" y2="0" gradientUnits="userSpaceOnUse"><stop offset="0" stop-color="#00b8ff"/><stop offset="0.02" stop-color="#00b3ff"/><stop offset="0.05" stop-color="#00adff"/><stop offset="0.07" stop-color="#00a7ff"/><stop offset="0.1" stop-color="#00a1ff"/><stop offset="0.12" stop-color="#009cff"/><stop offset="0.14" stop-color="#0095ff"/><stop offset="0.17" stop-color="#008fff"/><stop offset="0.19" stop-color="#0089ff"/><stop offset="0.21" stop-color="#0083ff"/><stop offset="0.24" stop-color="#097cff"/><stop offset="0.26" stop-color="#2475ff"/><stop offset="0.29" stop-color="#406fff"/><stop offset="0.31" stop-color="#5c68ff"/><stop offset="0.33" stop-color="#7861ff"/><stop offset="0.36" stop-color="#955aff"/><stop offset="0.38" stop-color="#b352ff"/><stop offset="0.4" stop-color="#d14bff"/><stop offset="0.43" stop-color="#f043ff"/><stop offset="0.45" stop-color="#ff38ef"/><stop offset="0.48" stop-color="#ff2bd6"/><stop offset="0.5" stop-color="#ff21c1"/><stop offset="0.52" stop-color="#ff18b0"/><stop offset="0.55" stop-color="#ff11a1"/><stop offset="0.57" stop-color="#ff0b94"/><stop offset="0.6" stop-color="#ff0589"/><stop offset="0.62" stop-color="#ff007f"/><stop offset="0.64" stop-color="#ff0077"/><stop offset="0.67" stop-color="#ff006f"/><stop offset="0.69" stop-color="#ff0068"/><stop offset="0.71" stop-color="#ff0062"/><stop offset="0.74" stop-color="#ff005c"/><stop offset="0.76" stop-color="#ff0057"/><stop offset="0.79" stop-color="#ff0052"/><stop offset="0.81" stop-color="#ff004e"/><stop offset="0.83" stop-color="#ff004a"/><stop offset="0.86" stop-color="#ff0046"/><stop offset="0.88" stop-color="#ff0043"/><stop offset="0.9" stop-color="#ff0040"/><stop offset="0.93" stop-color="#ff003d"/><stop offset="0.95" stop-color="#ff003a"/><stop offset="0.98" stop-color="#ff0038"/><stop offset="1" stop-color="#ff0035"/></linearGradient>
<linearGradient id="r45" x1="626" y1="0" x2="954" y2="0" gradientUnits="userSpaceOnUse"><stop offset="0" stop-color="#00b2ff"/><stop offset="0.02" stop-color="#00adff"/><stop offset="0.05" stop-color="#00a7ff"/><stop offset="0.07" stop-color="#00a1ff"/><stop offset="0.1" stop-color="#009cff"/><stop offset="0.12" stop-color="#0096ff"/><stop offset="0.15" stop-color="#0090ff"/><stop offset="0.17" stop-color="#008aff"/><stop offset="0.2" stop-color="#0084ff"/><stop offset="0.22" stop-color="#007dff"/><stop offset="0.24" stop-color="#0877ff"/><stop offset="0.27" stop-color="#2270ff"/><stop offset="0.29" stop-color="#3d6aff"/><stop offset="0.32" stop-color="#5863ff"/><stop offset="0.34" stop-color="#745cff"/><stop offset="0.37" stop-color="#9055ff"/><stop offset="0.39" stop-color="#ad4eff"/><stop offset="0.41" stop-color="#cb47ff"/><stop offset="0.44" stop-color="#e83fff"/><stop offset="0.46" stop-color="#ff36f7"/><stop offset="0.49" stop-color="#ff2add"/><stop offset="0.51" stop-color="#ff1fc8"/><stop offset="0.54" stop-color="#ff17b5"/><stop offset="0.56" stop-color="#ff10a6"/><stop offset="0.59" stop-color="#ff0999"/><stop offset="0.61" stop-color="#ff048e"/><stop offset="0.63" stop-color="#ff0083"/><stop offset="0.66" stop-color="#ff007b"/><stop offset="0.68" stop-color="#ff0073"/><stop offset="0.71" stop-color="#ff006c"/><stop offset="0.73" stop-color="#ff0065"/><stop offset="0.76" stop-color="#ff005f"/><stop offset="0.78" stop-color="#ff005a"/><stop offset="0.8" stop-color="#ff0055"/><stop offset="0.83" stop-color="#ff0051"/><stop offset="0.85" stop-color="#ff004d"/><stop offset="0.88" stop-color="#ff0049"/><stop offset="0.9" stop-color="#ff0046"/><stop offset="0.93" stop-color="#ff0042"/><stop offset="0.95" stop-color="#ff003f"/><stop offset="0.98" stop-color="#ff003c"/><stop offset="1" stop-color="#ff003a"/></linearGradient>
<linearGradient id="r46" x1="626" y1="0" x2="954" y2="0" gradientUnits="userSpaceOnUse"><stop offset="0" stop-color="#00acff"/><stop offset="0.02" stop-color="#00a7ff"/><stop offset="0.05" stop-color="#00a1ff"/><stop offset="0.07" stop-color="#009cff"/><stop offset="0.1" stop-color="#0096ff"/><stop offset="0.12" stop-color="#0090ff"/><stop offset="0.15" stop-color="#008aff"/><stop offset="0.17" stop-color="#0085ff"/><stop offset="0.2" stop-color="#007eff"/><stop offset="0.22" stop-color="#0078ff"/><stop offset="0.24" stop-color="#0672ff"/><stop offset="0.27" stop-color="#206cff"/><stop offset="0.29" stop-color="#3a65ff"/><stop offset="0.32" stop-color="#555eff"/><stop offset="0.34" stop-color="#7058ff"/><stop offset="0.37" stop-color="#8b51ff"/><stop offset="0.39" stop-color="#a74aff"/><stop offset="0.41" stop-color="#c443ff"/><stop offset="0.44" stop-color="#e13cff"/><stop offset="0.46" stop-color="#ff34ff"/><stop offset="0.49" stop-color="#ff28e4"/><stop offset="0.51" stop-color="#ff1ece"/><stop offset="0.54" stop-color="#ff15bb"/><stop offset="0.56" stop-color="#ff0eac"/><stop offset="0.59" stop-color="#ff089e"/><stop offset="0.61" stop-color="#ff0392"/><stop offset="0.63" stop-color="#ff0088"/><stop offset="0.66" stop-color="#ff007f"/><stop offset="0.68" stop-color="#ff0076"/><stop offset="0.71" stop-color="#ff006f"/><stop offset="0.73" stop-color="#ff0069"/><stop offset="0.76" stop-color="#ff0063"/><stop offset="0.78" stop-color="#ff005d"/><stop offset="0.8" stop-color="#ff0058"/><stop offset="0.83" stop-color="#ff0054"/><stop offset="0.85" stop-color="#ff004f"/><stop offset="0.88" stop-color="#ff004c"/><stop offset="0.9" stop-color="#ff0048"/><stop offset="0.93" stop-color="#ff0045"/><stop offset="0.95" stop-color="#ff0042"/><stop offset="0.98" stop-color="#ff003f"/><stop offset="1" stop-color="#ff003c"/></linearGradient>
<linearGradient id="r47" x1="626" y1="0" x2="954" y2="0" gradientUnits="userSpaceOnUse"><stop offset="0" stop-color="#00a7ff"/><stop offset="0.02" stop-color="#00a1ff"/><stop offset="0.05" stop-color="#009cff"/><stop offset="0.07" stop-color="#0096ff"/><stop offset="0.1" stop-color="#0091ff"/><stop offset="0.12" stop-color="#008bff"/><stop offset="0.15" stop-color="#0085ff"/><stop offset="0.17" stop-color="#0080ff"/><stop offset="0.2" stop-color="#007aff"/><stop offset="0.22" stop-color="#0073ff"/><stop offset="0.24" stop-color="#056dff"/><stop offset="0.27" stop-color="#1e67ff"/><stop offset="0.29" stop-color="#3861ff"/><stop offset="0.32" stop-color="#525aff"/><stop offset="0.34" stop-color="#6c54ff"/><stop offset="0.37" stop-color="#874dff"/><stop offset="0.39" stop-color="#a246ff"/><stop offset="0.41" stop-color="#be3fff"/><stop offset="0.44" stop-color="#da38ff"/><stop offset="0.46" stop-color="#f731ff"/><stop offset="0.49" stop-color="#ff26eb"/><stop offset="0.51" stop-color="#ff1cd4"/><stop offset="0.54" stop-color="#ff14c1"/><stop offset="0.56" stop-color="#ff0db1"/><stop offset="0.59" stop-color="#ff07a3"/><stop offset="0.61" stop-color="#ff0197"/><stop offset="0.63" stop-color="#ff008c"/><stop offset="0.66" stop-color="#ff0083"/><stop offset="0.68" stop-color="#ff007a"/><stop offset="0.71" stop-color="#ff0073"/><stop offset="0.73" stop-color="#ff006c"/><stop offset="0.76" stop-color="#ff0066"/><stop offset="0.78" stop-color="#ff0060"/><stop offset="0.8" stop-color="#ff005b"/><stop offset="0.83" stop-color="#ff0056"/><stop offset="0.85" stop-color="#ff0052"/><stop offset="0.88" stop-color="#ff004e"/><stop offset="0.9" stop-color="#ff004a"/><stop offset="0.93" stop-color="#ff0047"/><stop offset="0.95" stop-color="#ff0044"/><stop offset="0.98" stop-color="#ff0041"/><stop offset="1" stop-color="#ff003e"/></linearGradient>
<linearGradient id="r48" x1="626" y1="0" x2="954" y2="0" gradientUnits="userSpaceOnUse"><stop offset="0" stop-color="#00a1ff"/><stop offset="0.02" stop-color="#009cff"/><stop offset="0.05" stop-color="#0097ff"/><stop offset="0.07" stop-color="#0091ff"/><stop offset="0.1" stop-color="#008cff"/><stop offset="0.12" stop-color="#0086ff"/><stop offset="0.15" stop-color="#0081ff"/><stop offset="0.17" stop-color="#007bff"/><stop offset="0.2" stop-color="#0075ff"/><stop offset="0.22" stop-color="#006fff"/><stop offset="0.24" stop-color="#0469ff"/><stop offset="0.27" stop-color="#1c63ff"/><stop offset="0.29" stop-color="#355cff"/><stop offset="0.32" stop-color="#4e56ff"/><stop offset="0.34" stop-color="#6850ff"/><stop offset="0.37" stop-color="#8249ff"/><stop offset="0.39" stop-color="#9d42ff"/><stop offset="0.41" stop-color="#b83bff"/><stop offset="0.44" stop-color="#d335ff"/><stop offset="0.46" stop-color="#ef2dff"/><stop offset="0.49" stop-color="#ff24f3"/><stop offset="0.51" stop-color="#ff1bdb"/><stop offset="0.54" stop-color="#ff12c7"/><stop offset="0.56" stop-color="#ff0bb6"/><stop offset="0.59" stop-color="#ff05a8"/><stop offset="0.61" stop-color="#ff009b"/><stop offset="0.63" stop-color="#ff0090"/><stop offset="0.66" stop-color="#ff0087"/><stop offset="0.68" stop-color="#ff007e"/><stop offset="0.71" stop-color="#ff0076"/><stop offset="0.73" stop-color="#ff006f"/><stop offset="0.76" stop-color="#ff0069"/><stop offset="0.78" stop-color="#ff0063"/><stop offset="0.8" stop-color="#ff005e"/><stop offset="0.83" stop-color="#ff0059"/><stop offset="0.85" stop-color="#ff0055"/><stop offset="0.88" stop-color="#ff0051"/><stop offset="0.9" stop-color="#ff004d"/><stop offset="0.93" stop-color="#ff0049"/><stop offset="0.95" stop-color="#ff0046"/><stop offset="0.98" stop-color="#ff0043"/><stop offset="1" stop-color="#ff0040"/></linearGradient>
<linearGradient id="r49" x1="634" y1="0" x2="946" y2="0" gradientUnits="userSpaceOnUse"><stop offset="0" stop-color="#0097ff"/><stop offset="0.03" stop-color="#0092ff"/><stop offset="0.05" stop-color="#008cff"/><stop offset="0.08" stop-color="#0087ff"/><stop offset="0.1" stop-color="#0081ff"/><stop offset="0.13" stop-color="#007cff"/><stop offset="0.15" stop-color="#0076ff"/><stop offset="0.18" stop-color="#0070ff"/><stop offset="0.21" stop-color="#006bff"/><stop offset="0.23" stop-color="#0365ff"/><stop offset="0.26" stop-color="#1b5fff"/><stop offset="0.28" stop-color="#3358ff"/><stop offset="0.31" stop-color="#4c52ff"/><stop offset="0.33" stop-color="#654cff"/><stop offset="0.36" stop-color="#7e45ff"/><stop offset="0.38" stop-color="#983fff"/><stop offset="0.41" stop-color="#b238ff"/><stop offset="0.44" stop-color="#cd31ff"/><stop offset="0.46" stop-color="#e82aff"/><stop offset="0.49" stop-color="#ff23fa"/><stop offset="0.51" stop-color="#ff19e2"/><stop offset="0.54" stop-color="#ff11cd"/><stop offset="0.56" stop-color="#ff0abc"/><stop offset="0.59" stop-color="#ff04ad"/><stop offset="0.62" stop-color="#ff00a0"/><stop offset="0.64" stop-color="#ff0095"/><stop offset="0.67" stop-color="#ff008b"/><stop offset="0.69" stop-color="#ff0082"/><stop offset="0.72" stop-color="#ff007a"/><stop offset="0.74" stop-color="#ff0073"/><stop offset="0.77" stop-color="#ff006c"/><stop offset="0.79" stop-color="#ff0066"/><stop offset="0.82" stop-color="#ff0061"/><stop offset="0.85" stop-color="#ff005c"/><stop offset="0.87" stop-color="#ff0058"/><stop offset="0.9" stop-color="#ff0053"/><stop offset="0.92" stop-color="#ff004f"/><stop offset="0.95" stop-color="#ff004c"/><stop offset="0.97" stop-color="#ff0048"/><stop offset="1" stop-color="#ff0045"/></linearGradient>
<linearGradient id="r50" x1="634" y1="0" x2="946" y2="0" gradientUnits="userSpaceOnUse"><stop offset="0" stop-color="#0092ff"/><stop offset="0.03" stop-color="#008dff"/><stop offset="0.05" stop-color="#0088ff"/><stop offset="0.08" stop-color="#0082ff"/><stop offset="0.1" stop-color="#007dff"/><stop offset="0.13" stop-color="#0077ff"/><stop offset="0.15" stop-color="#0072ff"/><stop offset="0.18" stop-color="#006cff"/><stop offset="0.21" stop-color="#0066ff"/><stop offset="0.23" stop-color="#0261ff"/><stop offset="0.26" stop-color="#195bff"/><stop offset="0.28" stop-color="#3155ff"/><stop offset="0.31" stop-color="#494eff"/><stop offset="0.33" stop-color="#6148ff"/><stop offset="0.36" stop-color="#7a42ff"/><stop offset="0.38" stop-color="#933bff"/><stop offset="0.41" stop-color="#ad35ff"/><stop offset="0.44" stop-color="#c72eff"/><stop offset="0.46" stop-color="#e127ff"/><stop offset="0.49" stop-color="#fc21ff"/><stop offset="0.51" stop-color="#ff17e8"/><stop offset="0.54" stop-color="#ff0fd3"/><stop offset="0.56" stop-color="#ff08c1"/><stop offset="0.59" stop-color="#ff03b2"/><stop offset="0.62" stop-color="#ff00a5"/><stop offset="0.64" stop-color="#ff0099"/><stop offset="0.67" stop-color="#ff008f"/><stop offset="0.69" stop-color="#ff0086"/><stop offset="0.72" stop-color="#ff007e"/><stop offset="0.74" stop-color="#ff0076"/><stop offset="0.77" stop-color="#ff0070"/><stop offset="0.79" stop-color="#ff006a"/><stop offset="0.82" stop-color="#ff0064"/><stop offset="0.85" stop-color="#ff005f"/><stop offset="0.87" stop-color="#ff005a"/><stop offset="0.9" stop-color="#ff0056"/><stop offset="0.92" stop-color="#ff0052"/><stop offset="0.95" stop-color="#ff004e"/><stop offset="0.97" stop-color="#ff004b"/><stop offset="1" stop-color="#ff0048"/></linearGradient>
<linearGradient id="r51" x1="634" y1="0" x2="946" y2="0" gradientUnits="userSpaceOnUse"><stop offset="0" stop-color="#008dff"/><stop offset="0.03" stop-color="#0088ff"/><stop offset="0.05" stop-color="#0083ff"/><stop offset="0.08" stop-color="#007eff"/><stop offset="0.1" stop-color="#0079ff"/><stop offset="0.13" stop-color="#0073ff"/><stop offset="0.15" stop-color="#006eff"/><stop offset="0.18" stop-color="#0068ff"/><stop offset="0.21" stop-color="#0062ff"/><stop offset="0.23" stop-color="#015dff"/><stop offset="0.26" stop-color="#1757ff"/><stop offset="0.28" stop-color="#2f51ff"/><stop offset="0.31" stop-color="#464bff"/><stop offset="0.33" stop-color="#5e45ff"/><stop offset="0.36" stop-color="#763fff"/><stop offset="0.38" stop-color="#8f38ff"/><stop offset="0.41" stop-color="#a832ff"/><stop offset="0.44" stop-color="#c12bff"/><stop offset="0.46" stop-color="#db25ff"/><stop offset="0.49" stop-color="#f51eff"/><stop offset="0.51" stop-color="#ff16ef"/><stop offset="0.54" stop-color="#ff0ed9"/><stop offset="0.56" stop-color="#ff07c7"/><stop offset="0.59" stop-color="#ff01b7"/><stop offset="0.62" stop-color="#ff00aa"/><stop offset="0.64" stop-color="#ff009e"/><stop offset="0.67" stop-color="#ff0093"/><stop offset="0.69" stop-color="#ff008a"/><stop offset="0.72" stop-color="#ff0081"/><stop offset="0.74" stop-color="#ff007a"/><stop offset="0.77" stop-color="#ff0073"/><stop offset="0.79" stop-color="#ff006d"/><stop offset="0.82" stop-color="#ff0067"/><stop offset="0.85" stop-color="#ff0062"/><stop offset="0.87" stop-color="#ff005d"/><stop offset="0.9" stop-color="#ff0059"/><stop offset="0.92" stop-color="#ff0054"/><stop offset="0.95" stop-color="#ff0051"/><stop offset="0.97" stop-color="#ff004d"/><stop offset="1" stop-color="#ff004a"/></linearGradient>
<linearGradient id="r52" x1="634" y1="0" x2="946" y2="0" gradientUnits="userSpaceOnUse"><stop offset="0" stop-color="#0089ff"/><stop offset="0.03" stop-color="#0084ff"/><stop offset="0.05" stop-color="#007fff"/><stop offset="0.08" stop-color="#007aff"/><stop offset="0.1" stop-color="#0074ff"/><stop offset="0.13" stop-color="#006fff"/><stop offset="0.15" stop-color="#006aff"/><stop offset="0.18" stop-color="#0064ff"/><stop offset="0.21" stop-color="#005fff"/><stop offset="0.23" stop-color="#0059ff"/><stop offset="0.26" stop-color="#1653ff"/><stop offset="0.28" stop-color="#2d4dff"/><stop offset="0.31" stop-color="#4448ff"/><stop offset="0.33" stop-color="#5b42ff"/><stop offset="0.36" stop-color="#723bff"/><stop offset="0.38" stop-color="#8a35ff"/><stop offset="0.41" stop-color="#a32fff"/><stop offset="0.44" stop-color="#bc29ff"/><stop offset="0.46" stop-color="#d522ff"/><stop offset="0.49" stop-color="#ee1bff"/><stop offset="0.51" stop-color="#ff14f6"/><stop offset="0.54" stop-color="#ff0cdf"/><stop offset="0.56" stop-color="#ff06cd"/><stop offset="0.59" stop-color="#ff00bc"/><stop offset="0.62" stop-color="#ff00ae"/><stop offset="0.64" stop-color="#ff00a2"/><stop offset="0.67" stop-color="#ff0097"/><stop offset="0.69" stop-color="#ff008e"/><stop offset="0.72" stop-color="#ff0085"/><stop offset="0.74" stop-color="#ff007d"/><stop offset="0.77" stop-color="#ff0076"/><stop offset="0.79" stop-color="#ff0070"/><stop offset="0.82" stop-color="#ff006a"/><stop offset="0.85" stop-color="#ff0065"/><stop offset="0.87" stop-color="#ff0060"/><stop offset="0.9" stop-color="#ff005b"/><stop offset="0.92" stop-color="#ff0057"/><stop offset="0.95" stop-color="#ff0053"/><stop offset="0.97" stop-color="#ff004f"/><stop offset="1" stop-color="#ff004c"/></linearGradient>
<linearGradient id="r53" x1="634" y1="0" x2="938" y2="0" gradientUnits="userSpaceOnUse"><stop offset="0" stop-color="#0085ff"/><stop offset="0.03" stop-color="#0080ff"/><stop offset="0.05" stop-color="#007bff"/><stop offset="0.08" stop-color="#0076ff"/><stop offset="0.11" stop-color="#0070ff"/><stop offset="0.13" stop-color="#006bff"/><stop offset="0.16" stop-color="#0066ff"/><stop offset="0.18" stop-color="#0061ff"/><stop offset="0.21" stop-color="#005bff"/><stop offset="0.24" stop-color="#0055ff"/><stop offset="0.26" stop-color="#1550ff"/><stop offset="0.29" stop-color="#2b4aff"/><stop offset="0.32" stop-color="#4144ff"/><stop offset="0.34" stop-color="#583eff"/><stop offset="0.37" stop-color="#6f38ff"/><stop offset="0.39" stop-color="#8632ff"/><stop offset="0.42" stop-color="#9e2cff"/><stop offset="0.45" stop-color="#b626ff"/><stop offset="0.47" stop-color="#cf1fff"/><stop offset="0.5" stop-color="#e819ff"/><stop offset="0.53" stop-color="#ff12fd"/><stop offset="0.55" stop-color="#ff0be6"/><stop offset="0.58" stop-color="#ff04d2"/><stop offset="0.61" stop-color="#ff00c2"/><stop offset="0.63" stop-color="#ff00b3"/><stop offset="0.66" stop-color="#ff00a6"/><stop offset="0.68" stop-color="#ff009b"/><stop offset="0.71" stop-color="#ff0091"/><stop offset="0.74" stop-color="#ff0089"/><stop offset="0.76" stop-color="#ff0081"/><stop offset="0.79" stop-color="#ff0079"/><stop offset="0.82" stop-color="#ff0073"/><stop offset="0.84" stop-color="#ff006d"/><stop offset="0.87" stop-color="#ff0067"/><stop offset="0.89" stop-color="#ff0062"/><stop offset="0.92" stop-color="#ff005e"/><stop offset="0.95" stop-color="#ff0059"/><stop offset="0.97" stop-color="#ff0055"/><stop offset="1" stop-color="#ff0052"/></linearGradient>
<linearGradient id="r54" x1="634" y1="0" x2="938" y2="0" gradientUnits="userSpaceOnUse"><stop offset="0" stop-color="#0081ff"/><stop offset="0.03" stop-color="#007cff"/><stop offset="0.05" stop-color="#0077ff"/><stop offset="0.08" stop-color="#0072ff"/><stop offset="0.11" stop-color="#006dff"/><stop offset="0.13" stop-color="#0068ff"/><stop offset="0.16" stop-color="#0062ff"/><stop offset="0.18" stop-color="#005dff"/><stop offset="0.21" stop-color="#0058ff"/><stop offset="0.24" stop-color="#0052ff"/><stop offset="0.26" stop-color="#134dff"/><stop offset="0.29" stop-color="#2947ff"/><stop offset="0.32" stop-color="#3f41ff"/><stop offset="0.34" stop-color="#553bff"/><stop offset="0.37" stop-color="#6c35ff"/><stop offset="0.39" stop-color="#8330ff"/><stop offset="0.42" stop-color="#9a29ff"/><stop offset="0.45" stop-color="#b123ff"/><stop offset="0.47" stop-color="#c91dff"/><stop offset="0.5" stop-color="#e217ff"/><stop offset="0.53" stop-color="#fb10ff"/><stop offset="0.55" stop-color="#ff09ec"/><stop offset="0.58" stop-color="#ff03d8"/><stop offset="0.61" stop-color="#ff00c7"/><stop offset="0.63" stop-color="#ff00b8"/><stop offset="0.66" stop-color="#ff00ab"/><stop offset="0.68" stop-color="#ff00a0"/><stop offset="0.71" stop-color="#ff0095"/><stop offset="0.74" stop-color="#ff008c"/><stop offset="0.76" stop-color="#ff0084"/><stop offset="0.79" stop-color="#ff007d"/><stop offset="0.82" stop-color="#ff0076"/><stop offset="0.84" stop-color="#ff0070"/><stop offset="0.87" stop-color="#ff006a"/><stop offset="0.89" stop-color="#ff0065"/><stop offset="0.92" stop-color="#ff0060"/><stop offset="0.95" stop-color="#ff005c"/><stop offset="0.97" stop-color="#ff0058"/><stop offset="1" stop-color="#ff0054"/></linearGradient>
<linearGradient id="r55" x1="634" y1="0" x2="938" y2="0" gradientUnits="userSpaceOnUse"><stop offset="0" stop-color="#007dff"/><stop offset="0.03" stop-color="#0078ff"/><stop offset="0.05" stop-color="#0073ff"/><stop offset="0.08" stop-color="#006eff"/><stop offset="0.11" stop-color="#0069ff"/><stop offset="0.13" stop-color="#0064ff"/><stop offset="0.16" stop-color="#005fff"/><stop offset="0.18" stop-color="#005aff"/><stop offset="0.21" stop-color="#0054ff"/><stop offset="0.24" stop-color="#004fff"/><stop offset="0.26" stop-color="#1249ff"/><stop offset="0.29" stop-color="#2744ff"/><stop offset="0.32" stop-color="#3d3eff"/><stop offset="0.34" stop-color="#5239ff"/><stop offset="0.37" stop-color="#6833ff"/><stop offset="0.39" stop-color="#7f2dff"/><stop offset="0.42" stop-color="#9627ff"/><stop offset="0.45" stop-color="#ad21ff"/><stop offset="0.47" stop-color="#c41bff"/><stop offset="0.5" stop-color="#dc14ff"/><stop offset="0.53" stop-color="#f40eff"/><stop offset="0.55" stop-color="#ff07f2"/><stop offset="0.58" stop-color="#ff01de"/><stop offset="0.61" stop-color="#ff00cc"/><stop offset="0.63" stop-color="#ff00bd"/><stop offset="0.66" stop-color="#ff00af"/><stop offset="0.68" stop-color="#ff00a4"/><stop offset="0.71" stop-color="#ff0099"/><stop offset="0.74" stop-color="#ff0090"/><stop offset="0.76" stop-color="#ff0088"/><stop offset="0.79" stop-color="#ff0080"/><stop offset="0.82" stop-color="#ff0079"/><stop offset="0.84" stop-color="#ff0073"/><stop offset="0.87" stop-color="#ff006d"/><stop offset="0.89" stop-color="#ff0068"/><stop offset="0.92" stop-color="#ff0063"/><stop offset="0.95" stop-color="#ff005f"/><stop offset="0.97" stop-color="#ff005a"/><stop offset="1" stop-color="#ff0056"/></linearGradient>
<linearGradient id="r56" x1="642" y1="0" x2="938" y2="0" gradientUnits="userSpaceOnUse"><stop offset="0" stop-color="#0074ff"/><stop offset="0.03" stop-color="#006fff"/><stop offset="0.05" stop-color="#006aff"/><stop offset="0.08" stop-color="#0065ff"/><stop offset="0.11" stop-color="#0060ff"/><stop offset="0.14" stop-color="#005bff"/><stop offset="0.16" stop-color="#0056ff"/><stop offset="0.19" stop-color="#0051ff"/><stop offset="0.22" stop-color="#004cff"/><stop offset="0.24" stop-color="#1146ff"/><stop offset="0.27" stop-color="#2541ff"/><stop offset="0.3" stop-color="#3a3bff"/><stop offset="0.32" stop-color="#5036ff"/><stop offset="0.35" stop-color="#6530ff"/><stop offset="0.38" stop-color="#7b2aff"/><stop offset="0.41" stop-color="#9124ff"/><stop offset="0.43" stop-color="#a81fff"/><stop offset="0.46" stop-color="#bf18ff"/><stop offset="0.49" stop-color="#d612ff"/><stop offset="0.51" stop-color="#ee0cff"/><stop offset="0.54" stop-color="#ff06f8"/><stop offset="0.57" stop-color="#ff00e3"/><stop offset="0.59" stop-color="#ff00d1"/><stop offset="0.62" stop-color="#ff00c2"/><stop offset="0.65" stop-color="#ff00b4"/><stop offset="0.68" stop-color="#ff00a8"/><stop offset="0.7" stop-color="#ff009d"/><stop offset="0.73" stop-color="#ff0094"/><stop offset="0.76" stop-color="#ff008b"/><stop offset="0.78" stop-color="#ff0083"/><stop offset="0.81" stop-color="#ff007c"/><stop offset="0.84" stop-color="#ff0076"/><stop offset="0.86" stop-color="#ff0070"/><stop offset="0.89" stop-color="#ff006b"/><stop offset="0.92" stop-color="#ff0066"/><stop offset="0.95" stop-color="#ff0061"/><stop offset="0.97" stop-color="#ff005d"/><stop offset="1" stop-color="#ff0059"/></linearGradient>
<linearGradient id="r57" x1="642" y1="0" x2="930" y2="0" gradientUnits="userSpaceOnUse"><stop offset="0" stop-color="#0071ff"/><stop offset="0.03" stop-color="#006cff"/><stop offset="0.06" stop-color="#0067ff"/><stop offset="0.08" stop-color="#0062ff"/><stop offset="0.11" stop-color="#005dff"/><stop offset="0.14" stop-color="#0058ff"/><stop offset="0.17" stop-color="#0053ff"/><stop offset="0.19" stop-color="#004eff"/><stop offset="0.22" stop-color="#0049ff"/><stop offset="0.25" stop-color="#0f43ff"/><stop offset="0.28" stop-color="#243eff"/><stop offset="0.31" stop-color="#3839ff"/><stop offset="0.33" stop-color="#4d33ff"/><stop offset="0.36" stop-color="#622eff"/><stop offset="0.39" stop-color="#7828ff"/><stop offset="0.42" stop-color="#8e22ff"/><stop offset="0.44" stop-color="#a41cff"/><stop offset="0.47" stop-color="#ba16ff"/><stop offset="0.5" stop-color="#d110ff"/><stop offset="0.53" stop-color="#e80aff"/><stop offset="0.56" stop-color="#ff04ff"/><stop offset="0.58" stop-color="#ff00e9"/><stop offset="0.61" stop-color="#ff00d7"/><stop offset="0.64" stop-color="#ff00c7"/><stop offset="0.67" stop-color="#ff00b9"/><stop offset="0.69" stop-color="#ff00ac"/><stop offset="0.72" stop-color="#ff00a1"/><stop offset="0.75" stop-color="#ff0098"/><stop offset="0.78" stop-color="#ff008f"/><stop offset="0.81" stop-color="#ff0087"/><stop offset="0.83" stop-color="#ff0080"/><stop offset="0.86" stop-color="#ff0079"/><stop offset="0.89" stop-color="#ff0073"/><stop offset="0.92" stop-color="#ff006d"/><stop offset="0.94" stop-color="#ff0068"/><stop offset="0.97" stop-color="#ff0064"/><stop offset="1" stop-color="#ff005f"/></linearGradient>
<linearGradient id="r58" x1="642" y1="0" x2="930" y2="0" gradientUnits="userSpaceOnUse"><stop offset="0" stop-color="#006dff"/><stop offset="0.03" stop-color="#0068ff"/><stop offset="0.06" stop-color="#0064ff"/><stop offset="0.08" stop-color="#005fff"/><stop offset="0.11" stop-color="#005aff"/><stop offset="0.14" stop-color="#0055ff"/><stop offset="0.17" stop-color="#0050ff"/><stop offset="0.19" stop-color="#004bff"/><stop offset="0.22" stop-color="#0046ff"/><stop offset="0.25" stop-color="#0e41ff"/><stop offset="0.28" stop-color="#223bff"/><stop offset="0.31" stop-color="#3636ff"/><stop offset="0.33" stop-color="#4b31ff"/><stop offset="0.36" stop-color="#5f2bff"/><stop offset="0.39" stop-color="#7425ff"/><stop offset="0.42" stop-color="#8a20ff"/><stop offset="0.44" stop-color="#9f1aff"/><stop offset="0.47" stop-color="#b514ff"/><stop offset="0.5" stop-color="#cc0eff"/><stop offset="0.53" stop-color="#e208ff"/><stop offset="0.56" stop-color="#f902ff"/><stop offset="0.58" stop-color="#ff00ef"/><stop offset="0.61" stop-color="#ff00dc"/><stop offset="0.64" stop-color="#ff00cc"/><stop offset="0.67" stop-color="#ff00bd"/><stop offset="0.69" stop-color="#ff00b1"/><stop offset="0.72" stop-color="#ff00a5"/><stop offset="0.75" stop-color="#ff009b"/><stop offset="0.78" stop-color="#ff0092"/><stop offset="0.81" stop-color="#ff008a"/><stop offset="0.83" stop-color="#ff0083"/><stop offset="0.86" stop-color="#ff007c"/><stop offset="0.89" stop-color="#ff0076"/><stop offset="0.92" stop-color="#ff0070"/><stop offset="0.94" stop-color="#ff006b"/><stop offset="0.97" stop-color="#ff0066"/><stop offset="1" stop-color="#ff0062"/></linearGradient>
<linearGradient id="r59" x1="642" y1="0" x2="930" y2="0" gradientUnits="userSpaceOnUse"><stop offset="0" stop-color="#006aff"/><stop offset="0.03" stop-color="#0065ff"/><stop offset="0.06" stop-color="#0060ff"/><stop offset="0.08" stop-color="#005cff"/><stop offset="0.11" stop-color="#0057ff"/><stop offset="0.14" stop-color="#0052ff"/><stop offset="0.17" stop-color="#004dff"/><stop offset="0.19" stop-color="#0048ff"/><stop offset="0.22" stop-color="#0043ff"/><stop offset="0.25" stop-color="#0d3eff"/><stop offset="0.28" stop-color="#2139ff"/><stop offset="0.31" stop-color="#3433ff"/><stop offset="0.33" stop-color="#482eff"/><stop offset="0.36" stop-color="#5d29ff"/><stop offset="0.39" stop-color="#7123ff"/><stop offset="0.42" stop-color="#861eff"/><stop offset="0.44" stop-color="#9b18ff"/><stop offset="0.47" stop-color="#b112ff"/><stop offset="0.5" stop-color="#c70dff"/><stop offset="0.53" stop-color="#dd07ff"/><stop offset="0.56" stop-color="#f301ff"/><stop offset="0.58" stop-color="#ff00f5"/><stop offset="0.61" stop-color="#ff00e1"/><stop offset="0.64" stop-color="#ff00d0"/><stop offset="0.67" stop-color="#ff00c2"/><stop offset="0.69" stop-color="#ff00b5"/><stop offset="0.72" stop-color="#ff00a9"/><stop offset="0.75" stop-color="#ff009f"/><stop offset="0.78" stop-color="#ff0096"/><stop offset="0.81" stop-color="#ff008e"/><stop offset="0.83" stop-color="#ff0086"/><stop offset="0.86" stop-color="#ff007f"/><stop offset="0.89" stop-color="#ff0079"/><stop offset="0.92" stop-color="#ff0073"/><stop offset="0.94" stop-color="#ff006e"/><stop offset="0.97" stop-color="#ff0069"/><stop offset="1" stop-color="#ff0064"/></linearGradient>
<linearGradient id="r60" x1="642" y1="0" x2="930" y2="0" gradientUnits="userSpaceOnUse"><stop offset="0" stop-color="#0066ff"/><stop offset="0.03" stop-color="#0062ff"/><stop offset="0.06" stop-color="#005dff"/><stop offset="0.08" stop-color="#0059ff"/><stop offset="0.11" stop-color="#0054ff"/><stop offset="0.14" stop-color="#004fff"/><stop offset="0.17" stop-color="#004aff"/><stop offset="0.19" stop-color="#0045ff"/><stop offset="0.22" stop-color="#0040ff"/><stop offset="0.25" stop-color="#0c3bff"/><stop offset="0.28" stop-color="#1f36ff"/><stop offset="0.31" stop-color="#3331ff"/><stop offset="0.33" stop-color="#462cff"/><stop offset="0.36" stop-color="#5a26ff"/><stop offset="0.39" stop-color="#6e21ff"/><stop offset="0.42" stop-color="#831cff"/><stop offset="0.44" stop-color="#9716ff"/><stop offset="0.47" stop-color="#ac10ff"/><stop offset="0.5" stop-color="#c20bff"/><stop offset="0.53" stop-color="#d705ff"/><stop offset="0.56" stop-color="#ed00ff"/><stop offset="0.58" stop-color="#ff00fb"/><stop offset="0.61" stop-color="#ff00e7"/><stop offset="0.64" stop-color="#ff00d5"/><stop offset="0.67" stop-color="#ff00c6"/><stop offset="0.69" stop-color="#ff00b9"/><stop offset="0.72" stop-color="#ff00ad"/><stop offset="0.75" stop-color="#ff00a3"/><stop offset="0.78" stop-color="#ff0099"/><stop offset="0.81" stop-color="#ff0091"/><stop offset="0.83" stop-color="#ff0089"/><stop offset="0.86" stop-color="#ff0082"/><stop offset="0.89" stop-color="#ff007c"/><stop offset="0.92" stop-color="#ff0076"/><stop offset="0.94" stop-color="#ff0070"/><stop offset="0.97" stop-color="#ff006b"/><stop offset="1" stop-color="#ff0067"/></linearGradient>
<linearGradient id="r61" x1="642" y1="0" x2="922" y2="0" gradientUnits="userSpaceOnUse"><stop offset="0" stop-color="#0063ff"/><stop offset="0.03" stop-color="#005fff"/><stop offset="0.06" stop-color="#005aff"/><stop offset="0.09" stop-color="#0056ff"/><stop offset="0.11" stop-color="#0051ff"/><stop offset="0.14" stop-color="#004cff"/><stop offset="0.17" stop-color="#0048ff"/><stop offset="0.2" stop-color="#0043ff"/><stop offset="0.23" stop-color="#003eff"/><stop offset="0.26" stop-color="#0b39ff"/><stop offset="0.29" stop-color="#1e34ff"/><stop offset="0.31" stop-color="#312fff"/><stop offset="0.34" stop-color="#442aff"/><stop offset="0.37" stop-color="#5824ff"/><stop offset="0.4" stop-color="#6b1fff"/><stop offset="0.43" stop-color="#7f1aff"/><stop offset="0.46" stop-color="#9414ff"/><stop offset="0.49" stop-color="#a80fff"/><stop offset="0.51" stop-color="#bd09ff"/><stop offset="0.54" stop-color="#d203ff"/><stop offset="0.57" stop-color="#e800ff"/><stop offset="0.6" stop-color="#fd00ff"/><stop offset="0.63" stop-color="#ff00ec"/><stop offset="0.66" stop-color="#ff00da"/><stop offset="0.69" stop-color="#ff00cb"/><stop offset="0.71" stop-color="#ff00bd"/><stop offset="0.74" stop-color="#ff00b1"/><stop offset="0.77" stop-color="#ff00a7"/><stop offset="0.8" stop-color="#ff009d"/><stop offset="0.83" stop-color="#ff0094"/><stop offset="0.86" stop-color="#ff008c"/><stop offset="0.89" stop-color="#ff0085"/><stop offset="0.91" stop-color="#ff007f"/><stop offset="0.94" stop-color="#ff0079"/><stop offset="0.97" stop-color="#ff0073"/><stop offset="1" stop-color="#ff006e"/></linearGradient>
<linearGradient id="r62" x1="642" y1="0" x2="922" y2="0" gradientUnits="userSpaceOnUse"><stop offset="0" stop-color="#0060ff"/><stop offset="0.03" stop-color="#005cff"/><stop offset="0.06" stop-color="#0057ff"/><stop offset="0.09" stop-color="#0053ff"/><stop offset="0.11" stop-color="#004eff"/><stop offset="0.14" stop-color="#004aff"/><stop offset="0.17" stop-color="#0045ff"/><stop offset="0.2" stop-color="#0040ff"/><stop offset="0.23" stop-color="#003bff"/><stop offset="0.26" stop-color="#0a36ff"/><stop offset="0.29" stop-color="#1d31ff"/><stop offset="0.31" stop-color="#2f2cff"/><stop offset="0.34" stop-color="#4227ff"/><stop offset="0.37" stop-color="#5522ff"/><stop offset="0.4" stop-color="#691dff"/><stop offset="0.43" stop-color="#7c18ff"/><stop offset="0.46" stop-color="#9012ff"/><stop offset="0.49" stop-color="#a40dff"/><stop offset="0.51" stop-color="#b907ff"/><stop offset="0.54" stop-color="#cd02ff"/><stop offset="0.57" stop-color="#e200ff"/><stop offset="0.6" stop-color="#f800ff"/><stop offset="0.63" stop-color="#ff00f2"/><stop offset="0.66" stop-color="#ff00e0"/><stop offset="0.69" stop-color="#ff00d0"/><stop offset="0.71" stop-color="#ff00c2"/><stop offset="0.74" stop-color="#ff00b6"/><stop offset="0.77" stop-color="#ff00ab"/><stop offset="0.8" stop-color="#ff00a1"/><stop offset="0.83" stop-color="#ff0098"/><stop offset="0.86" stop-color="#ff0090"/><stop offset="0.89" stop-color="#ff0088"/><stop offset="0.91" stop-color="#ff0082"/><stop offset="0.94" stop-color="#ff007b"/><stop offset="0.97" stop-color="#ff0076"/><stop offset="1" stop-color="#ff0070"/></linearGradient>
<linearGradient id="r63" x1="650" y1="0" x2="922" y2="0" gradientUnits="userSpaceOnUse"><stop offset="0" stop-color="#0059ff"/><stop offset="0.03" stop-color="#0055ff"/><stop offset="0.06" stop-color="#0050ff"/><stop offset="0.09" stop-color="#004cff"/><stop offset="0.12" stop-color="#0047ff"/><stop offset="0.15" stop-color="#0042ff"/><stop offset="0.18" stop-color="#003eff"/><stop offset="0.21" stop-color="#0039ff"/><stop offset="0.24" stop-color="#0934ff"/><stop offset="0.26" stop-color="#1b2fff"/><stop offset="0.29" stop-color="#2e2aff"/><stop offset="0.32" stop-color="#4025ff"/><stop offset="0.35" stop-color="#5320ff"/><stop offset="0.38" stop-color="#661bff"/><stop offset="0.41" stop-color="#7916ff"/><stop offset="0.44" stop-color="#8d11ff"/><stop offset="0.47" stop-color="#a00bff"/><stop offset="0.5" stop-color="#b406ff"/><stop offset="0.53" stop-color="#c900ff"/><stop offset="0.56" stop-color="#dd00ff"/><stop offset="0.59" stop-color="#f200ff"/><stop offset="0.62" stop-color="#ff00f7"/><stop offset="0.65" stop-color="#ff00e5"/><stop offset="0.68" stop-color="#ff00d4"/><stop offset="0.71" stop-color="#ff00c6"/><stop offset="0.74" stop-color="#ff00ba"/><stop offset="0.76" stop-color="#ff00ae"/><stop offset="0.79" stop-color="#ff00a4"/><stop offset="0.82" stop-color="#ff009b"/><stop offset="0.85" stop-color="#ff0093"/><stop offset="0.88" stop-color="#ff008b"/><stop offset="0.91" stop-color="#ff0085"/><stop offset="0.94" stop-color="#ff007e"/><stop offset="0.97" stop-color="#ff0078"/><stop offset="1" stop-color="#ff0073"/></linearGradient>
<linearGradient id="r64" x1="650" y1="0" x2="914" y2="0" gradientUnits="userSpaceOnUse"><stop offset="0" stop-color="#0056ff"/><stop offset="0.03" stop-color="#0052ff"/><stop offset="0.06" stop-color="#004eff"/><stop offset="0.09" stop-color="#0049ff"/><stop offset="0.12" stop-color="#0045ff"/><stop offset="0.15" stop-color="#0040ff"/><stop offset="0.18" stop-color="#003bff"/><stop offset="0.21" stop-color="#0037ff"/><stop offset="0.24" stop-color="#0832ff"/><stop offset="0.27" stop-color="#1a2dff"/><stop offset="0.3" stop-color="#2c28ff"/><stop offset="0.33" stop-color="#3e23ff"/><stop offset="0.36" stop-color="#511eff"/><stop offset="0.39" stop-color="#6319ff"/><stop offset="0.42" stop-color="#7614ff"/><stop offset="0.45" stop-color="#890fff"/><stop offset="0.48" stop-color="#9d0aff"/><stop offset="0.52" stop-color="#b004ff"/><stop offset="0.55" stop-color="#c400ff"/><stop offset="0.58" stop-color="#d800ff"/><stop offset="0.61" stop-color="#ed00ff"/><stop offset="0.64" stop-color="#ff00fd"/><stop offset="0.67" stop-color="#ff00ea"/><stop offset="0.7" stop-color="#ff00d9"/><stop offset="0.73" stop-color="#ff00cb"/><stop offset="0.76" stop-color="#ff00be"/><stop offset="0.79" stop-color="#ff00b2"/><stop offset="0.82" stop-color="#ff00a8"/><stop offset="0.85" stop-color="#ff009f"/><stop offset="0.88" stop-color="#ff0096"/><stop offset="0.91" stop-color="#ff008f"/><stop offset="0.94" stop-color="#ff0088"/><stop offset="0.97" stop-color="#ff0081"/><stop offset="1" stop-color="#ff007b"/></linearGradient>
<linearGradient id="r65" x1="650" y1="0" x2="914" y2="0" gradientUnits="userSpaceOnUse"><stop offset="0" stop-color="#0054ff"/><stop offset="0.03" stop-color="#004fff"/><stop offset="0.06" stop-color="#004bff"/><stop offset="0.09" stop-color="#0047ff"/><stop offset="0.12" stop-color="#0042ff"/><stop offset="0.15" stop-color="#003eff"/><stop offset="0.18" stop-color="#0039ff"/><stop offset="0.21" stop-color="#0034ff"/><stop offset="0.24" stop-color="#0730ff"/><stop offset="0.27" stop-color="#192bff"/><stop offset="0.3" stop-color="#2a26ff"/><stop offset="0.33" stop-color="#3c21ff"/><stop offset="0.36" stop-color="#4e1cff"/><stop offset="0.39" stop-color="#6117ff"/><stop offset="0.42" stop-color="#7312ff"/><stop offset="0.45" stop-color="#860dff"/><stop offset="0.48" stop-color="#9908ff"/><stop offset="0.52" stop-color="#ac03ff"/><stop offset="0.55" stop-color="#c000ff"/><stop offset="0.58" stop-color="#d300ff"/><stop offset="0.61" stop-color="#e700ff"/><stop offset="0.64" stop-color="#fc00ff"/><stop offset="0.67" stop-color="#ff00ef"/><stop offset="0.7" stop-color="#ff00de"/><stop offset="0.73" stop-color="#ff00cf"/><stop offset="0.76" stop-color="#ff00c2"/><stop offset="0.79" stop-color="#ff00b6"/><stop offset="0.82" stop-color="#ff00ac"/><stop offset="0.85" stop-color="#ff00a2"/><stop offset="0.88" stop-color="#ff009a"/><stop offset="0.91" stop-color="#ff0092"/><stop offset="0.94" stop-color="#ff008b"/><stop offset="0.97" stop-color="#ff0084"/><stop offset="1" stop-color="#ff007e"/></linearGradient>
<linearGradient id="r66" x1="650" y1="0" x2="914" y2="0" gradientUnits="userSpaceOnUse"><stop offset="0" stop-color="#0051ff"/><stop offset="0.03" stop-color="#004dff"/><stop offset="0.06" stop-color="#0048ff"/><stop offset="0.09" stop-color="#0044ff"/><stop offset="0.12" stop-color="#0040ff"/><stop offset="0.15" stop-color="#003bff"/><stop offset="0.18" stop-color="#0037ff"/><stop offset="0.21" stop-color="#0032ff"/><stop offset="0.24" stop-color="#062eff"/><stop offset="0.27" stop-color="#1829ff"/><stop offset="0.3" stop-color="#2924ff"/><stop offset="0.33" stop-color="#3b1fff"/><stop offset="0.36" stop-color="#4c1bff"/><stop offset="0.39" stop-color="#5e16ff"/><stop offset="0.42" stop-color="#7011ff"/><stop offset="0.45" stop-color="#830cff"/><stop offset="0.48" stop-color="#9607ff"/><stop offset="0.52" stop-color="#a801ff"/><stop offset="0.55" stop-color="#bc00ff"/><stop offset="0.58" stop-color="#cf00ff"/><stop offset="0.61" stop-color="#e200ff"/><stop offset="0.64" stop-color="#f600ff"/><stop offset="0.67" stop-color="#ff00f4"/><stop offset="0.7" stop-color="#ff00e3"/><stop offset="0.73" stop-color="#ff00d4"/><stop offset="0.76" stop-color="#ff00c6"/><stop offset="0.79" stop-color="#ff00ba"/><stop offset="0.82" stop-color="#ff00af"/><stop offset="0.85" stop-color="#ff00a6"/><stop offset="0.88" stop-color="#ff009d"/><stop offset="0.91" stop-color="#ff0095"/><stop offset="0.94" stop-color="#ff008e"/><stop offset="0.97" stop-color="#ff0087"/><stop offset="1" stop-color="#ff0081"/></linearGradient>
<linearGradient id="r67" x1="650" y1="0" x2="914" y2="0" gradientUnits="userSpaceOnUse"><stop offset="0" stop-color="#004fff"/><stop offset="0.03" stop-color="#004aff"/><stop offset="0.06" stop-color="#0046ff"/><stop offset="0.09" stop-color="#0042ff"/><stop offset="0.12" stop-color="#003dff"/><stop offset="0.15" stop-color="#0039ff"/><stop offset="0.18" stop-color="#0035ff"/><stop offset="0.21" stop-color="#0030ff"/><stop offset="0.24" stop-color="#062cff"/><stop offset="0.27" stop-color="#1627ff"/><stop offset="0.3" stop-color="#2822ff"/><stop offset="0.33" stop-color="#391eff"/><stop offset="0.36" stop-color="#4a19ff"/><stop offset="0.39" stop-color="#5c14ff"/><stop offset="0.42" stop-color="#6e0fff"/><stop offset="0.45" stop-color="#800aff"/><stop offset="0.48" stop-color="#9205ff"/><stop offset="0.52" stop-color="#a500ff"/><stop offset="0.55" stop-color="#b700ff"/><stop offset="0.58" stop-color="#ca00ff"/><stop offset="0.61" stop-color="#de00ff"/><stop offset="0.64" stop-color="#f100ff"/><stop offset="0.67" stop-color="#ff00f9"/><stop offset="0.7" stop-color="#ff00e8"/><stop offset="0.73" stop-color="#ff00d8"/><stop offset="0.76" stop-color="#ff00ca"/><stop offset="0.79" stop-color="#ff00be"/><stop offset="0.82" stop-color="#ff00b3"/><stop offset="0.85" stop-color="#ff00a9"/><stop offset="0.88" stop-color="#ff00a0"/><stop offset="0.91" stop-color="#ff0098"/><stop offset="0.94" stop-color="#ff0091"/><stop offset="0.97" stop-color="#ff008a"/><stop offset="1" stop-color="#ff0083"/></linearGradient>
<linearGradient id="r68" x1="650" y1="0" x2="906" y2="0" gradientUnits="userSpaceOnUse"><stop offset="0" stop-color="#004cff"/><stop offset="0.03" stop-color="#0048ff"/><stop offset="0.06" stop-color="#0044ff"/><stop offset="0.09" stop-color="#0040ff"/><stop offset="0.12" stop-color="#003bff"/><stop offset="0.16" stop-color="#0037ff"/><stop offset="0.19" stop-color="#0032ff"/><stop offset="0.22" stop-color="#002eff"/><stop offset="0.25" stop-color="#052aff"/><stop offset="0.28" stop-color="#1525ff"/><stop offset="0.31" stop-color="#2620ff"/><stop offset="0.34" stop-color="#371cff"/><stop offset="0.38" stop-color="#4817ff"/><stop offset="0.41" stop-color="#5a12ff"/><stop offset="0.44" stop-color="#6b0eff"/><stop offset="0.47" stop-color="#7d09ff"/><stop offset="0.5" stop-color="#8f04ff"/><stop offset="0.53" stop-color="#a100ff"/><stop offset="0.56" stop-color="#b400ff"/><stop offset="0.59" stop-color="#c600ff"/><stop offset="0.62" stop-color="#d900ff"/><stop offset="0.66" stop-color="#ec00ff"/><stop offset="0.69" stop-color="#ff00ff"/><stop offset="0.72" stop-color="#ff00ec"/><stop offset="0.75" stop-color="#ff00dd"/><stop offset="0.78" stop-color="#ff00cf"/><stop offset="0.81" stop-color="#ff00c2"/><stop offset="0.84" stop-color="#ff00b7"/><stop offset="0.88" stop-color="#ff00ad"/><stop offset="0.91" stop-color="#ff00a4"/><stop offset="0.94" stop-color="#ff009b"/><stop offset="0.97" stop-color="#ff0094"/><stop offset="1" stop-color="#ff008d"/></linearGradient>
<linearGradient id="r69" x1="650" y1="0" x2="906" y2="0" gradientUnits="userSpaceOnUse"><stop offset="0" stop-color="#004aff"/><stop offset="0.03" stop-color="#0046ff"/><stop offset="0.06" stop-color="#0042ff"/><stop offset="0.09" stop-color="#003dff"/><stop offset="0.12" stop-color="#0039ff"/><stop offset="0.16" stop-color="#0035ff"/><stop offset="0.19" stop-color="#0030ff"/><stop offset="0.22" stop-color="#002cff"/><stop offset="0.25" stop-color="#0428ff"/><stop offset="0.28" stop-color="#1423ff"/><stop offset="0.31" stop-color="#251fff"/><stop offset="0.34" stop-color="#361aff"/><stop offset="0.38" stop-color="#4615ff"/><stop offset="0.41" stop-color="#5711ff"/><stop offset="0.44" stop-color="#690cff"/><stop offset="0.47" stop-color="#7a07ff"/><stop offset="0.5" stop-color="#8c02ff"/><stop offset="0.53" stop-color="#9e00ff"/><stop offset="0.56" stop-color="#b000ff"/><stop offset="0.59" stop-color="#c200ff"/><stop offset="0.62" stop-color="#d500ff"/><stop offset="0.66" stop-color="#e700ff"/><stop offset="0.69" stop-color="#fa00ff"/><stop offset="0.72" stop-color="#ff00f1"/><stop offset="0.75" stop-color="#ff00e1"/><stop offset="0.78" stop-color="#ff00d3"/><stop offset="0.81" stop-color="#ff00c6"/><stop offset="0.84" stop-color="#ff00bb"/><stop offset="0.88" stop-color="#ff00b0"/><stop offset="0.91" stop-color="#ff00a7"/><stop offset="0.94" stop-color="#ff009e"/><stop offset="0.97" stop-color="#ff0097"/><stop offset="1" stop-color="#ff008f"/></linearGradient>
<linearGradient id="r70" x1="658" y1="0" x2="906" y2="0" gradientUnits="userSpaceOnUse"><stop offset="0" stop-color="#0043ff"/><stop offset="0.03" stop-color="#003fff"/><stop offset="0.06" stop-color="#003bff"/><stop offset="0.1" stop-color="#0037ff"/><stop offset="0.13" stop-color="#0033ff"/><stop offset="0.16" stop-color="#002fff"/><stop offset="0.19" stop-color="#002aff"/><stop offset="0.23" stop-color="#0326ff"/><stop offset="0.26" stop-color="#1321ff"/><stop offset="0.29" stop-color="#241dff"/><stop offset="0.32" stop-color="#3418ff"/><stop offset="0.35" stop-color="#4514ff"/><stop offset="0.39" stop-color="#550fff"/><stop offset="0.42" stop-color="#660bff"/><stop offset="0.45" stop-color="#7706ff"/><stop offset="0.48" stop-color="#8901ff"/><stop offset="0.52" stop-color="#9a00ff"/><stop offset="0.55" stop-color="#ac00ff"/><stop offset="0.58" stop-color="#be00ff"/><stop offset="0.61" stop-color="#d000ff"/><stop offset="0.65" stop-color="#e300ff"/><stop offset="0.68" stop-color="#f500ff"/><stop offset="0.71" stop-color="#ff00f6"/><stop offset="0.74" stop-color="#ff00e6"/><stop offset="0.77" stop-color="#ff00d7"/><stop offset="0.81" stop-color="#ff00ca"/><stop offset="0.84" stop-color="#ff00be"/><stop offset="0.87" stop-color="#ff00b4"/><stop offset="0.9" stop-color="#ff00aa"/><stop offset="0.94" stop-color="#ff00a2"/><stop offset="0.97" stop-color="#ff009a"/><stop offset="1" stop-color="#ff0092"/></linearGradient>
<linearGradient id="r71" x1="658" y1="0" x2="906" y2="0" gradientUnits="userSpaceOnUse"><stop offset="0" stop-color="#0041ff"/><stop offset="0.03" stop-color="#003dff"/><stop offset="0.06" stop-color="#0039ff"/><stop offset="0.1" stop-color="#0035ff"/><stop offset="0.13" stop-color="#0031ff"/><stop offset="0.16" stop-color="#002dff"/><stop offset="0.19" stop-color="#0028ff"/><stop offset="0.23" stop-color="#0324ff"/><stop offset="0.26" stop-color="#1220ff"/><stop offset="0.29" stop-color="#221bff"/><stop offset="0.32" stop-color="#3217ff"/><stop offset="0.35" stop-color="#4312ff"/><stop offset="0.39" stop-color="#530eff"/><stop offset="0.42" stop-color="#6409ff"/><stop offset="0.45" stop-color="#7504ff"/><stop offset="0.48" stop-color="#8600ff"/><stop offset="0.52" stop-color="#9700ff"/><stop offset="0.55" stop-color="#a900ff"/><stop offset="0.58" stop-color="#ba00ff"/><stop offset="0.61" stop-color="#cc00ff"/><stop offset="0.65" stop-color="#de00ff"/><stop offset="0.68" stop-color="#f000ff"/><stop offset="0.71" stop-color="#ff00fb"/><stop offset="0.74" stop-color="#ff00ea"/><stop offset="0.77" stop-color="#ff00db"/><stop offset="0.81" stop-color="#ff00ce"/><stop offset="0.84" stop-color="#ff00c2"/><stop offset="0.87" stop-color="#ff00b7"/><stop offset="0.9" stop-color="#ff00ae"/><stop offset="0.94" stop-color="#ff00a5"/><stop offset="0.97" stop-color="#ff009d"/><stop offset="1" stop-color="#ff0095"/></linearGradient>
<linearGradient id="r72" x1="658" y1="0" x2="898" y2="0" gradientUnits="userSpaceOnUse"><stop offset="0" stop-color="#003fff"/><stop offset="0.03" stop-color="#003bff"/><stop offset="0.07" stop-color="#0037ff"/><stop offset="0.1" stop-color="#0033ff"/><stop offset="0.13" stop-color="#002fff"/><stop offset="0.17" stop-color="#002bff"/><stop offset="0.2" stop-color="#0027ff"/><stop offset="0.23" stop-color="#0222ff"/><stop offset="0.27" stop-color="#111eff"/><stop offset="0.3" stop-color="#211aff"/><stop offset="0.33" stop-color="#3115ff"/><stop offset="0.37" stop-color="#4111ff"/><stop offset="0.4" stop-color="#510cff"/><stop offset="0.43" stop-color="#6208ff"/><stop offset="0.47" stop-color="#7203ff"/><stop offset="0.5" stop-color="#8300ff"/><stop offset="0.53" stop-color="#9400ff"/><stop offset="0.57" stop-color="#a500ff"/><stop offset="0.6" stop-color="#b700ff"/><stop offset="0.63" stop-color="#c800ff"/><stop offset="0.67" stop-color="#da00ff"/><stop offset="0.7" stop-color="#ec00ff"/><stop offset="0.73" stop-color="#fe00ff"/><stop offset="0.77" stop-color="#ff00ef"/><stop offset="0.8" stop-color="#ff00e0"/><stop offset="0.83" stop-color="#ff00d2"/><stop offset="0.87" stop-color="#ff00c6"/><stop offset="0.9" stop-color="#ff00bb"/><stop offset="0.93" stop-color="#ff00b1"/><stop offset="0.97" stop-color="#ff00a8"/><stop offset="1" stop-color="#ff00a0"/></linearGradient>
<linearGradient id="r73" x1="658" y1="0" x2="898" y2="0" gradientUnits="userSpaceOnUse"><stop offset="0" stop-color="#003dff"/><stop offset="0.03" stop-color="#0039ff"/><stop offset="0.07" stop-color="#0035ff"/><stop offset="0.1" stop-color="#0031ff"/><stop offset="0.13" stop-color="#002dff"/><stop offset="0.17" stop-color="#0029ff"/><stop offset="0.2" stop-color="#0025ff"/><stop offset="0.23" stop-color="#0121ff"/><stop offset="0.27" stop-color="#101cff"/><stop offset="0.3" stop-color="#2018ff"/><stop offset="0.33" stop-color="#3014ff"/><stop offset="0.37" stop-color="#3f0fff"/><stop offset="0.4" stop-color="#4f0bff"/><stop offset="0.43" stop-color="#5f06ff"/><stop offset="0.47" stop-color="#7002ff"/><stop offset="0.5" stop-color="#8000ff"/><stop offset="0.53" stop-color="#9100ff"/><stop offset="0.57" stop-color="#a200ff"/><stop offset="0.6" stop-color="#b300ff"/><stop offset="0.63" stop-color="#c400ff"/><stop offset="0.67" stop-color="#d600ff"/><stop offset="0.7" stop-color="#e700ff"/><stop offset="0.73" stop-color="#f900ff"/><stop offset="0.77" stop-color="#ff00f3"/><stop offset="0.8" stop-color="#ff00e4"/><stop offset="0.83" stop-color="#ff00d6"/><stop offset="0.87" stop-color="#ff00ca"/><stop offset="0.9" stop-color="#ff00bf"/><stop offset="0.93" stop-color="#ff00b4"/><stop offset="0.97" stop-color="#ff00ab"/><stop offset="1" stop-color="#ff00a3"/></linearGradient>
<linearGradient id="r74" x1="658" y1="0" x2="898" y2="0" gradientUnits="userSpaceOnUse"><stop offset="0" stop-color="#003bff"/><stop offset="0.03" stop-color="#0037ff"/><stop offset="0.07" stop-color="#0033ff"/><stop offset="0.1" stop-color="#002fff"/><stop offset="0.13" stop-color="#002bff"/><stop offset="0.17" stop-color="#0027ff"/><stop offset="0.2" stop-color="#0023ff"/><stop offset="0.23" stop-color="#001fff"/><stop offset="0.27" stop-color="#101bff"/><stop offset="0.3" stop-color="#1f17ff"/><stop offset="0.33" stop-color="#2e12ff"/><stop offset="0.37" stop-color="#3e0eff"/><stop offset="0.4" stop-color="#4d0aff"/><stop offset="0.43" stop-color="#5d05ff"/><stop offset="0.47" stop-color="#6d01ff"/><stop offset="0.5" stop-color="#7e00ff"/><stop offset="0.53" stop-color="#8e00ff"/><stop offset="0.57" stop-color="#9f00ff"/><stop offset="0.6" stop-color="#af00ff"/><stop offset="0.63" stop-color="#c000ff"/><stop offset="0.67" stop-color="#d100ff"/><stop offset="0.7" stop-color="#e300ff"/><stop offset="0.73" stop-color="#f400ff"/><stop offset="0.77" stop-color="#ff00f8"/><stop offset="0.8" stop-color="#ff00e8"/><stop offset="0.83" stop-color="#ff00da"/><stop offset="0.87" stop-color="#ff00ce"/><stop offset="0.9" stop-color="#ff00c2"/><stop offset="0.93" stop-color="#ff00b8"/><stop offset="0.97" stop-color="#ff00ae"/><stop offset="1" stop-color="#ff00a6"/></linearGradient>
<linearGradient id="r75" x1="658" y1="0" x2="898" y2="0" gradientUnits="userSpaceOnUse"><stop offset="0" stop-color="#0039ff"/><stop offset="0.03" stop-color="#0035ff"/><stop offset="0.07" stop-color="#0032ff"/><stop offset="0.1" stop-color="#002eff"/><stop offset="0.13" stop-color="#002aff"/><stop offset="0.17" stop-color="#0026ff"/><stop offset="0.2" stop-color="#0022ff"/><stop offset="0.23" stop-color="#001dff"/><stop offset="0.27" stop-color="#0f19ff"/><stop offset="0.3" stop-color="#1e15ff"/><stop offset="0.33" stop-color="#2d11ff"/><stop offset="0.37" stop-color="#3c0dff"/><stop offset="0.4" stop-color="#4c08ff"/><stop offset="0.43" stop-color="#5b04ff"/><stop offset="0.47" stop-color="#6b00ff"/><stop offset="0.5" stop-color="#7b00ff"/><stop offset="0.53" stop-color="#8b00ff"/><stop offset="0.57" stop-color="#9c00ff"/><stop offset="0.6" stop-color="#ac00ff"/><stop offset="0.63" stop-color="#bd00ff"/><stop offset="0.67" stop-color="#ce00ff"/><stop offset="0.7" stop-color="#df00ff"/><stop offset="0.73" stop-color="#f000ff"/><stop offset="0.77" stop-color="#ff00fd"/><stop offset="0.8" stop-color="#ff00ed"/><stop offset="0.83" stop-color="#ff00de"/><stop offset="0.87" stop-color="#ff00d1"/><stop offset="0.9" stop-color="#ff00c6"/><stop offset="0.93" stop-color="#ff00bb"/><stop offset="0.97" stop-color="#ff00b2"/><stop offset="1" stop-color="#ff00a9"/></linearGradient>
<linearGradient id="r76" x1="666" y1="0" x2="890" y2="0" gradientUnits="userSpaceOnUse"><stop offset="0" stop-color="#0034ff"/><stop offset="0.04" stop-color="#0030ff"/><stop offset="0.07" stop-color="#002cff"/><stop offset="0.11" stop-color="#0028ff"/><stop offset="0.14" stop-color="#0024ff"/><stop offset="0.18" stop-color="#0020ff"/><stop offset="0.21" stop-color="#001cff"/><stop offset="0.25" stop-color="#0e18ff"/><stop offset="0.29" stop-color="#1d14ff"/><stop offset="0.32" stop-color="#2c10ff"/><stop offset="0.36" stop-color="#3b0bff"/><stop offset="0.39" stop-color="#4a07ff"/><stop offset="0.43" stop-color="#5903ff"/><stop offset="0.46" stop-color="#6900ff"/><stop offset="0.5" stop-color="#7900ff"/><stop offset="0.54" stop-color="#8800ff"/><stop offset="0.57" stop-color="#9900ff"/><stop offset="0.61" stop-color="#a900ff"/><stop offset="0.64" stop-color="#b900ff"/><stop offset="0.68" stop-color="#ca00ff"/><stop offset="0.71" stop-color="#da00ff"/><stop offset="0.75" stop-color="#eb00ff"/><stop offset="0.79" stop-color="#fc00ff"/><stop offset="0.82" stop-color="#ff00f1"/><stop offset="0.86" stop-color="#ff00e2"/><stop offset="0.89" stop-color="#ff00d5"/><stop offset="0.93" stop-color="#ff00c9"/><stop offset="0.96" stop-color="#ff00bf"/><stop offset="1" stop-color="#ff00b5"/></linearGradient>
<linearGradient id="r77" x1="666" y1="0" x2="890" y2="0" gradientUnits="userSpaceOnUse"><stop offset="0" stop-color="#0032ff"/><stop offset="0.04" stop-color="#002eff"/><stop offset="0.07" stop-color="#002aff"/><stop offset="0.11" stop-color="#0026ff"/><stop offset="0.14" stop-color="#0022ff"/><stop offset="0.18" stop-color="#001eff"/><stop offset="0.21" stop-color="#001aff"/><stop offset="0.25" stop-color="#0d16ff"/><stop offset="0.29" stop-color="#1c12ff"/><stop offset="0.32" stop-color="#2a0eff"/><stop offset="0.36" stop-color="#390aff"/><stop offset="0.39" stop-color="#4806ff"/><stop offset="0.43" stop-color="#5702ff"/><stop offset="0.46" stop-color="#6700ff"/><stop offset="0.5" stop-color="#7600ff"/><stop offset="0.54" stop-color="#8600ff"/><stop offset="0.57" stop-color="#9600ff"/><stop offset="0.61" stop-color="#a600ff"/><stop offset="0.64" stop-color="#b600ff"/><stop offset="0.68" stop-color="#c600ff"/><stop offset="0.71" stop-color="#d600ff"/><stop offset="0.75" stop-color="#e700ff"/><stop offset="0.79" stop-color="#f800ff"/><stop offset="0.82" stop-color="#ff00f5"/><stop offset="0.86" stop-color="#ff00e6"/><stop offset="0.89" stop-color="#ff00d9"/><stop offset="0.93" stop-color="#ff00cd"/><stop offset="0.96" stop-color="#ff00c2"/><stop offset="1" stop-color="#ff00b8"/></linearGradient>
<linearGradient id="r78" x1="666" y1="0" x2="890" y2="0" gradientUnits="userSpaceOnUse"><stop offset="0" stop-color="#0030ff"/><stop offset="0.04" stop-color="#002cff"/><stop offset="0.07" stop-color="#0029ff"/><stop offset="0.11" stop-color="#0025ff"/><stop offset="0.14" stop-color="#0021ff"/><stop offset="0.18" stop-color="#001dff"/><stop offset="0.21" stop-color="#0019ff"/><stop offset="0.25" stop-color="#0c15ff"/><stop offset="0.29" stop-color="#1b11ff"/><stop offset="0.32" stop-color="#290dff"/><stop offset="0.36" stop-color="#3809ff"/><stop offset="0.39" stop-color="#4605ff"/><stop offset="0.43" stop-color="#5500ff"/><stop offset="0.46" stop-color="#6500ff"/><stop offset="0.5" stop-color="#7400ff"/><stop offset="0.54" stop-color="#8300ff"/><stop offset="0.57" stop-color="#9300ff"/><stop offset="0.61" stop-color="#a200ff"/><stop offset="0.64" stop-color="#b200ff"/><stop offset="0.68" stop-color="#c200ff"/><stop offset="0.71" stop-color="#d300ff"/><stop offset="0.75" stop-color="#e300ff"/><stop offset="0.79" stop-color="#f400ff"/><stop offset="0.82" stop-color="#ff00fa"/><stop offset="0.86" stop-color="#ff00eb"/><stop offset="0.89" stop-color="#ff00dd"/><stop offset="0.93" stop-color="#ff00d1"/><stop offset="0.96" stop-color="#ff00c6"/><stop offset="1" stop-color="#ff00bc"/></linearGradient>
<linearGradient id="r79" x1="666" y1="0" x2="890" y2="0" gradientUnits="userSpaceOnUse"><stop offset="0" stop-color="#002eff"/><stop offset="0.04" stop-color="#002bff"/><stop offset="0.07" stop-color="#0027ff"/><stop offset="0.11" stop-color="#0023ff"/><stop offset="0.14" stop-color="#001fff"/><stop offset="0.18" stop-color="#001bff"/><stop offset="0.21" stop-color="#0018ff"/><stop offset="0.25" stop-color="#0b14ff"/><stop offset="0.29" stop-color="#1a10ff"/><stop offset="0.32" stop-color="#280cff"/><stop offset="0.36" stop-color="#3608ff"/><stop offset="0.39" stop-color="#4503ff"/><stop offset="0.43" stop-color="#5400ff"/><stop offset="0.46" stop-color="#6200ff"/><stop offset="0.5" stop-color="#7100ff"/><stop offset="0.54" stop-color="#8100ff"/><stop offset="0.57" stop-color="#9000ff"/><stop offset="0.61" stop-color="#9f00ff"/><stop offset="0.64" stop-color="#af00ff"/><stop offset="0.68" stop-color="#bf00ff"/><stop offset="0.71" stop-color="#cf00ff"/><stop offset="0.75" stop-color="#df00ff"/><stop offset="0.79" stop-color="#ef00ff"/><stop offset="0.82" stop-color="#ff00fe"/><stop offset="0.86" stop-color="#ff00ef"/><stop offset="0.89" stop-color="#ff00e1"/><stop offset="0.93" stop-color="#ff00d4"/><stop offset="0.96" stop-color="#ff00c9"/><stop offset="1" stop-color="#ff00bf"/></linearGradient>
<linearGradient id="r80" x1="666" y1="0" x2="882" y2="0" gradientUnits="userSpaceOnUse"><stop offset="0" stop-color="#002dff"/><stop offset="0.04" stop-color="#0029ff"/><stop offset="0.07" stop-color="#0025ff"/><stop offset="0.11" stop-color="#0022ff"/><stop offset="0.15" stop-color="#001eff"/><stop offset="0.19" stop-color="#001aff"/><stop offset="0.22" stop-color="#0016ff"/><stop offset="0.26" stop-color="#0b12ff"/><stop offset="0.3" stop-color="#190eff"/><stop offset="0.33" stop-color="#270aff"/><stop offset="0.37" stop-color="#3506ff"/><stop offset="0.41" stop-color="#4302ff"/><stop offset="0.44" stop-color="#5200ff"/><stop offset="0.48" stop-color="#6000ff"/><stop offset="0.52" stop-color="#6f00ff"/><stop offset="0.56" stop-color="#7e00ff"/><stop offset="0.59" stop-color="#8d00ff"/><stop offset="0.63" stop-color="#9d00ff"/><stop offset="0.67" stop-color="#ac00ff"/><stop offset="0.7" stop-color="#bb00ff"/><stop offset="0.74" stop-color="#cb00ff"/><stop offset="0.78" stop-color="#db00ff"/><stop offset="0.81" stop-color="#eb00ff"/><stop offset="0.85" stop-color="#fb00ff"/><stop offset="0.89" stop-color="#ff00f3"/><stop offset="0.93" stop-color="#ff00e5"/><stop offset="0.96" stop-color="#ff00d8"/><stop offset="1" stop-color="#ff00cd"/></linearGradient>
<linearGradient id="r81" x1="666" y1="0" x2="882" y2="0" gradientUnits="userSpaceOnUse"><stop offset="0" stop-color="#002bff"/><stop offset="0.04" stop-color="#0028ff"/><stop offset="0.07" stop-color="#0024ff"/><stop offset="0.11" stop-color="#0020ff"/><stop offset="0.15" stop-color="#001cff"/><stop offset="0.19" stop-color="#0019ff"/><stop offset="0.22" stop-color="#0015ff"/><stop offset="0.26" stop-color="#0a11ff"/><stop offset="0.3" stop-color="#180dff"/><stop offset="0.33" stop-color="#2609ff"/><stop offset="0.37" stop-color="#3405ff"/><stop offset="0.41" stop-color="#4201ff"/><stop offset="0.44" stop-color="#5000ff"/><stop offset="0.48" stop-color="#5f00ff"/><stop offset="0.52" stop-color="#6d00ff"/><stop offset="0.56" stop-color="#7c00ff"/><stop offset="0.59" stop-color="#8b00ff"/><stop offset="0.63" stop-color="#9a00ff"/><stop offset="0.67" stop-color="#a900ff"/><stop offset="0.7" stop-color="#b800ff"/><stop offset="0.74" stop-color="#c800ff"/><stop offset="0.78" stop-color="#d700ff"/><stop offset="0.81" stop-color="#e700ff"/><stop offset="0.85" stop-color="#f700ff"/><stop offset="0.89" stop-color="#ff00f7"/><stop offset="0.93" stop-color="#ff00e9"/><stop offset="0.96" stop-color="#ff00dc"/><stop offset="1" stop-color="#ff00d0"/></linearGradient>
<linearGradient id="r82" x1="674" y1="0" x2="882" y2="0" gradientUnits="userSpaceOnUse"><stop offset="0" stop-color="#0026ff"/><stop offset="0.04" stop-color="#0022ff"/><stop offset="0.08" stop-color="#001fff"/><stop offset="0.12" stop-color="#001bff"/><stop offset="0.15" stop-color="#0017ff"/><stop offset="0.19" stop-color="#0014ff"/><stop offset="0.23" stop-color="#0910ff"/><stop offset="0.27" stop-color="#170cff"/><stop offset="0.31" stop-color="#2408ff"/><stop offset="0.35" stop-color="#3204ff"/><stop offset="0.38" stop-color="#4000ff"/><stop offset="0.42" stop-color="#4e00ff"/><stop offset="0.46" stop-color="#5d00ff"/><stop offset="0.5" stop-color="#6b00ff"/><stop offset="0.54" stop-color="#7900ff"/><stop offset="0.58" stop-color="#8800ff"/><stop offset="0.62" stop-color="#9700ff"/><stop offset="0.65" stop-color="#a600ff"/><stop offset="0.69" stop-color="#b500ff"/><stop offset="0.73" stop-color="#c400ff"/><stop offset="0.77" stop-color="#d400ff"/><stop offset="0.81" stop-color="#e300ff"/><stop offset="0.85" stop-color="#f300ff"/><stop offset="0.88" stop-color="#ff00fb"/><stop offset="0.92" stop-color="#ff00ed"/><stop offset="0.96" stop-color="#ff00e0"/><stop offset="1" stop-color="#ff00d4"/></linearGradient>
<linearGradient id="r83" x1="674" y1="0" x2="874" y2="0" gradientUnits="userSpaceOnUse"><stop offset="0" stop-color="#0025ff"/><stop offset="0.04" stop-color="#0021ff"/><stop offset="0.08" stop-color="#001dff"/><stop offset="0.12" stop-color="#001aff"/><stop offset="0.16" stop-color="#0016ff"/><stop offset="0.2" stop-color="#0012ff"/><stop offset="0.24" stop-color="#080fff"/><stop offset="0.28" stop-color="#160bff"/><stop offset="0.32" stop-color="#2307ff"/><stop offset="0.36" stop-color="#3103ff"/><stop offset="0.4" stop-color="#3f00ff"/><stop offset="0.44" stop-color="#4d00ff"/><stop offset="0.48" stop-color="#5b00ff"/><stop offset="0.52" stop-color="#6900ff"/><stop offset="0.56" stop-color="#7700ff"/><stop offset="0.6" stop-color="#8600ff"/><stop offset="0.64" stop-color="#9400ff"/><stop offset="0.68" stop-color="#a300ff"/><stop offset="0.72" stop-color="#b200ff"/><stop offset="0.76" stop-color="#c100ff"/><stop offset="0.8" stop-color="#d000ff"/><stop offset="0.84" stop-color="#df00ff"/><stop offset="0.88" stop-color="#ef00ff"/><stop offset="0.92" stop-color="#fe00ff"/><stop offset="0.96" stop-color="#ff00f1"/><stop offset="1" stop-color="#ff00e3"/></linearGradient>
<linearGradient id="r84" x1="674" y1="0" x2="874" y2="0" gradientUnits="userSpaceOnUse"><stop offset="0" stop-color="#0023ff"/><stop offset="0.04" stop-color="#0020ff"/><stop offset="0.08" stop-color="#001cff"/><stop offset="0.12" stop-color="#0018ff"/><stop offset="0.16" stop-color="#0015ff"/><stop offset="0.2" stop-color="#0011ff"/><stop offset="0.24" stop-color="#080dff"/><stop offset="0.28" stop-color="#150aff"/><stop offset="0.32" stop-color="#2206ff"/><stop offset="0.36" stop-color="#3002ff"/><stop offset="0.4" stop-color="#3d00ff"/><stop offset="0.44" stop-color="#4b00ff"/><stop offset="0.48" stop-color="#5900ff"/><stop offset="0.52" stop-color="#6700ff"/><stop offset="0.56" stop-color="#7500ff"/><stop offset="0.6" stop-color="#8300ff"/><stop offset="0.64" stop-color="#9200ff"/><stop offset="0.68" stop-color="#a000ff"/><stop offset="0.72" stop-color="#af00ff"/><stop offset="0.76" stop-color="#be00ff"/><stop offset="0.8" stop-color="#cc00ff"/><stop offset="0.84" stop-color="#dc00ff"/><stop offset="0.88" stop-color="#eb00ff"/><stop offset="0.92" stop-color="#fa00ff"/><stop offset="0.96" stop-color="#ff00f5"/><stop offset="1" stop-color="#ff00e7"/></linearGradient>
<linearGradient id="r85" x1="674" y1="0" x2="874" y2="0" gradientUnits="userSpaceOnUse"><stop offset="0" stop-color="#0022ff"/><stop offset="0.04" stop-color="#001eff"/><stop offset="0.08" stop-color="#001bff"/><stop offset="0.12" stop-color="#0017ff"/><stop offset="0.16" stop-color="#0013ff"/><stop offset="0.2" stop-color="#0010ff"/><stop offset="0.24" stop-color="#070cff"/><stop offset="0.28" stop-color="#1408ff"/><stop offset="0.32" stop-color="#2105ff"/><stop offset="0.36" stop-color="#2f01ff"/><stop offset="0.4" stop-color="#3c00ff"/><stop offset="0.44" stop-color="#4a00ff"/><stop offset="0.48" stop-color="#5700ff"/><stop offset="0.52" stop-color="#6500ff"/><stop offset="0.56" stop-color="#7300ff"/><stop offset="0.6" stop-color="#8100ff"/><stop offset="0.64" stop-color="#8f00ff"/><stop offset="0.68" stop-color="#9d00ff"/><stop offset="0.72" stop-color="#ac00ff"/><stop offset="0.76" stop-color="#ba00ff"/><stop offset="0.8" stop-color="#c900ff"/><stop offset="0.84" stop-color="#d800ff"/><stop offset="0.88" stop-color="#e700ff"/><stop offset="0.92" stop-color="#f600ff"/><stop offset="0.96" stop-color="#ff00f9"/><stop offset="1" stop-color="#ff00eb"/></linearGradient>
<linearGradient id="r86" x1="674" y1="0" x2="874" y2="0" gradientUnits="userSpaceOnUse"><stop offset="0" stop-color="#0020ff"/><stop offset="0.04" stop-color="#001dff"/><stop offset="0.08" stop-color="#0019ff"/><stop offset="0.12" stop-color="#0016ff"/><stop offset="0.16" stop-color="#0012ff"/><stop offset="0.2" stop-color="#000fff"/><stop offset="0.24" stop-color="#060bff"/><stop offset="0.28" stop-color="#1307ff"/><stop offset="0.32" stop-color="#2004ff"/><stop offset="0.36" stop-color="#2d00ff"/><stop offset="0.4" stop-color="#3b00ff"/><stop offset="0.44" stop-color="#4800ff"/><stop offset="0.48" stop-color="#5600ff"/><stop offset="0.52" stop-color="#6300ff"/><stop offset="0.56" stop-color="#7100ff"/><stop offset="0.6" stop-color="#7f00ff"/><stop offset="0.64" stop-color="#8d00ff"/><stop offset="0.68" stop-color="#9b00ff"/><stop offset="0.72" stop-color="#a900ff"/><stop offset="0.76" stop-color="#b700ff"/><stop offset="0.8" stop-color="#c600ff"/><stop offset="0.84" stop-color="#d400ff"/><stop offset="0.88" stop-color="#e300ff"/><stop offset="0.92" stop-color="#f200ff"/><stop offset="0.96" stop-color="#ff00fd"/><stop offset="1" stop-color="#ff00ef"/></linearGradient>
<linearGradient id="r87" x1="674" y1="0" x2="866" y2="0" gradientUnits="userSpaceOnUse"><stop offset="0" stop-color="#001fff"/><stop offset="0.04" stop-color="#001cff"/><stop offset="0.08" stop-color="#0018ff"/><stop offset="0.12" stop-color="#0015ff"/><stop offset="0.17" stop-color="#0011ff"/><stop offset="0.21" stop-color="#000eff"/><stop offset="0.25" stop-color="#060aff"/><stop offset="0.29" stop-color="#1306ff"/><stop offset="0.33" stop-color="#1f03ff"/><stop offset="0.38" stop-color="#2c00ff"/><stop offset="0.42" stop-color="#3900ff"/><stop offset="0.46" stop-color="#4700ff"/><stop offset="0.5" stop-color="#5400ff"/><stop offset="0.54" stop-color="#6100ff"/><stop offset="0.58" stop-color="#6f00ff"/><stop offset="0.62" stop-color="#7c00ff"/><stop offset="0.67" stop-color="#8a00ff"/><stop offset="0.71" stop-color="#9800ff"/><stop offset="0.75" stop-color="#a600ff"/><stop offset="0.79" stop-color="#b400ff"/><stop offset="0.83" stop-color="#c300ff"/><stop offset="0.88" stop-color="#d100ff"/><stop offset="0.92" stop-color="#e000ff"/><stop offset="0.96" stop-color="#ee00ff"/><stop offset="1" stop-color="#fd00ff"/></linearGradient>
<linearGradient id="r88" x1="682" y1="0" x2="866" y2="0" gradientUnits="userSpaceOnUse"><stop offset="0" stop-color="#001aff"/><stop offset="0.04" stop-color="#0017ff"/><stop offset="0.09" stop-color="#0013ff"/><stop offset="0.13" stop-color="#0010ff"/><stop offset="0.17" stop-color="#000cff"/><stop offset="0.22" stop-color="#0509ff"/><stop offset="0.26" stop-color="#1205ff"/><stop offset="0.3" stop-color="#1e02ff"/><stop offset="0.35" stop-color="#2b00ff"/><stop offset="0.39" stop-color="#3800ff"/><stop offset="0.43" stop-color="#4500ff"/><stop offset="0.48" stop-color="#5200ff"/><stop offset="0.52" stop-color="#5f00ff"/><stop offset="0.57" stop-color="#6d00ff"/><stop offset="0.61" stop-color="#7a00ff"/><stop offset="0.65" stop-color="#8800ff"/><stop offset="0.7" stop-color="#9600ff"/><stop offset="0.74" stop-color="#a300ff"/><stop offset="0.78" stop-color="#b100ff"/><stop offset="0.83" stop-color="#bf00ff"/><stop offset="0.87" stop-color="#ce00ff"/><stop offset="0.91" stop-color="#dc00ff"/><stop offset="0.96" stop-color="#eb00ff"/><stop offset="1" stop-color="#f900ff"/></linearGradient>
<linearGradient id="r89" x1="682" y1="0" x2="866" y2="0" gradientUnits="userSpaceOnUse"><stop offset="0" stop-color="#0019ff"/><stop offset="0.04" stop-color="#0016ff"/><stop offset="0.09" stop-color="#0012ff"/><stop offset="0.13" stop-color="#000fff"/><stop offset="0.17" stop-color="#000bff"/><stop offset="0.22" stop-color="#0508ff"/><stop offset="0.26" stop-color="#1104ff"/><stop offset="0.3" stop-color="#1e01ff"/><stop offset="0.35" stop-color="#2a00ff"/><stop offset="0.39" stop-color="#3700ff"/><stop offset="0.43" stop-color="#4400ff"/><stop offset="0.48" stop-color="#5100ff"/><stop offset="0.52" stop-color="#5e00ff"/><stop offset="0.57" stop-color="#6b00ff"/><stop offset="0.61" stop-color="#7800ff"/><stop offset="0.65" stop-color="#8600ff"/><stop offset="0.7" stop-color="#9300ff"/><stop offset="0.74" stop-color="#a100ff"/><stop offset="0.78" stop-color="#af00ff"/><stop offset="0.83" stop-color="#bc00ff"/><stop offset="0.87" stop-color="#ca00ff"/><stop offset="0.91" stop-color="#d900ff"/><stop offset="0.96" stop-color="#e700ff"/><stop offset="1" stop-color="#f500ff"/></linearGradient>
<linearGradient id="r90" x1="682" y1="0" x2="866" y2="0" gradientUnits="userSpaceOnUse"><stop offset="0" stop-color="#0018ff"/><stop offset="0.04" stop-color="#0015ff"/><stop offset="0.09" stop-color="#0011ff"/><stop offset="0.13" stop-color="#000eff"/><stop offset="0.17" stop-color="#000aff"/><stop offset="0.22" stop-color="#0407ff"/><stop offset="0.26" stop-color="#1003ff"/><stop offset="0.3" stop-color="#1d00ff"/><stop offset="0.35" stop-color="#2900ff"/><stop offset="0.39" stop-color="#3600ff"/><stop offset="0.43" stop-color="#4200ff"/><stop offset="0.48" stop-color="#4f00ff"/><stop offset="0.52" stop-color="#5c00ff"/><stop offset="0.57" stop-color="#6900ff"/><stop offset="0.61" stop-color="#7600ff"/><stop offset="0.65" stop-color="#8300ff"/><stop offset="0.7" stop-color="#9100ff"/><stop offset="0.74" stop-color="#9e00ff"/><stop offset="0.78" stop-color="#ac00ff"/><stop offset="0.83" stop-color="#b900ff"/><stop offset="0.87" stop-color="#c700ff"/><stop offset="0.91" stop-color="#d500ff"/><stop offset="0.96" stop-color="#e300ff"/><stop offset="1" stop-color="#f200ff"/></linearGradient>
<linearGradient id="r91" x1="682" y1="0" x2="858" y2="0" gradientUnits="userSpaceOnUse"><stop offset="0" stop-color="#0017ff"/><stop offset="0.05" stop-color="#0013ff"/><stop offset="0.09" stop-color="#0010ff"/><stop offset="0.14" stop-color="#000dff"/><stop offset="0.18" stop-color="#0009ff"/><stop offset="0.23" stop-color="#0306ff"/><stop offset="0.27" stop-color="#1002ff"/><stop offset="0.32" stop-color="#1c00ff"/><stop offset="0.36" stop-color="#2800ff"/><stop offset="0.41" stop-color="#3400ff"/><stop offset="0.45" stop-color="#4100ff"/><stop offset="0.5" stop-color="#4e00ff"/><stop offset="0.55" stop-color="#5a00ff"/><stop offset="0.59" stop-color="#6700ff"/><stop offset="0.64" stop-color="#7400ff"/><stop offset="0.68" stop-color="#8100ff"/><stop offset="0.73" stop-color="#8e00ff"/><stop offset="0.77" stop-color="#9c00ff"/><stop offset="0.82" stop-color="#a900ff"/><stop offset="0.86" stop-color="#b700ff"/><stop offset="0.91" stop-color="#c400ff"/><stop offset="0.95" stop-color="#d200ff"/><stop offset="1" stop-color="#e000ff"/></linearGradient>
<linearGradient id="r92" x1="682" y1="0" x2="858" y2="0" gradientUnits="userSpaceOnUse"><stop offset="0" stop-color="#0016ff"/><stop offset="0.05" stop-color="#0012ff"/><stop offset="0.09" stop-color="#000fff"/><stop offset="0.14" stop-color="#000cff"/><stop offset="0.18" stop-color="#0008ff"/><stop offset="0.23" stop-color="#0305ff"/><stop offset="0.27" stop-color="#0f01ff"/><stop offset="0.32" stop-color="#1b00ff"/><stop offset="0.36" stop-color="#2700ff"/><stop offset="0.41" stop-color="#3300ff"/><stop offset="0.45" stop-color="#4000ff"/><stop offset="0.5" stop-color="#4c00ff"/><stop offset="0.55" stop-color="#5900ff"/><stop offset="0.59" stop-color="#6500ff"/><stop offset="0.64" stop-color="#7200ff"/><stop offset="0.68" stop-color="#7f00ff"/><stop offset="0.73" stop-color="#8c00ff"/><stop offset="0.77" stop-color="#9900ff"/><stop offset="0.82" stop-color="#a600ff"/><stop offset="0.86" stop-color="#b400ff"/><stop offset="0.91" stop-color="#c100ff"/><stop offset="0.95" stop-color="#cf00ff"/><stop offset="1" stop-color="#dc00ff"/></linearGradient>
<linearGradient id="r93" x1="690" y1="0" x2="858" y2="0" gradientUnits="userSpaceOnUse"><stop offset="0" stop-color="#0011ff"/><stop offset="0.05" stop-color="#000eff"/><stop offset="0.1" stop-color="#000bff"/><stop offset="0.14" stop-color="#0007ff"/><stop offset="0.19" stop-color="#0204ff"/><stop offset="0.24" stop-color="#0e00ff"/><stop offset="0.29" stop-color="#1a00ff"/><stop offset="0.33" stop-color="#2600ff"/><stop offset="0.38" stop-color="#3200ff"/><stop offset="0.43" stop-color="#3e00ff"/><stop offset="0.48" stop-color="#4b00ff"/><stop offset="0.52" stop-color="#5700ff"/><stop offset="0.57" stop-color="#6400ff"/><stop offset="0.62" stop-color="#7000ff"/><stop offset="0.67" stop-color="#7d00ff"/><stop offset="0.71" stop-color="#8a00ff"/><stop offset="0.76" stop-color="#9700ff"/><stop offset="0.81" stop-color="#a400ff"/><stop offset="0.86" stop-color="#b100ff"/><stop offset="0.9" stop-color="#be00ff"/><stop offset="0.95" stop-color="#cc00ff"/><stop offset="1" stop-color="#d900ff"/></linearGradient>
<linearGradient id="r94" x1="690" y1="0" x2="858" y2="0" gradientUnits="userSpaceOnUse"><stop offset="0" stop-color="#0010ff"/><stop offset="0.05" stop-color="#000dff"/><stop offset="0.1" stop-color="#000aff"/><stop offset="0.14" stop-color="#0006ff"/><stop offset="0.19" stop-color="#0203ff"/><stop offset="0.24" stop-color="#0d00ff"/><stop offset="0.29" stop-color="#1900ff"/><stop offset="0.33" stop-color="#2500ff"/><stop offset="0.38" stop-color="#3100ff"/><stop offset="0.43" stop-color="#3d00ff"/><stop offset="0.48" stop-color="#4900ff"/><stop offset="0.52" stop-color="#5600ff"/><stop offset="0.57" stop-color="#6200ff"/><stop offset="0.62" stop-color="#6e00ff"/><stop offset="0.67" stop-color="#7b00ff"/><stop offset="0.71" stop-color="#8800ff"/><stop offset="0.76" stop-color="#9400ff"/><stop offset="0.81" stop-color="#a100ff"/><stop offset="0.86" stop-color="#ae00ff"/><stop offset="0.9" stop-color="#bb00ff"/><stop offset="0.95" stop-color="#c900ff"/><stop offset="1" stop-color="#d600ff"/></linearGradient>
<linearGradient id="r95" x1="690" y1="0" x2="850" y2="0" gradientUnits="userSpaceOnUse"><stop offset="0" stop-color="#000fff"/><stop offset="0.05" stop-color="#000cff"/><stop offset="0.1" stop-color="#0009ff"/><stop offset="0.15" stop-color="#0005ff"/><stop offset="0.2" stop-color="#0102ff"/><stop offset="0.25" stop-color="#0d00ff"/><stop offset="0.3" stop-color="#1800ff"/><stop offset="0.35" stop-color="#2400ff"/><stop offset="0.4" stop-color="#3000ff"/><stop offset="0.45" stop-color="#3c00ff"/><stop offset="0.5" stop-color="#4800ff"/><stop offset="0.55" stop-color="#5400ff"/><stop offset="0.6" stop-color="#6000ff"/><stop offset="0.65" stop-color="#6d00ff"/><stop offset="0.7" stop-color="#7900ff"/><stop offset="0.75" stop-color="#8600ff"/><stop offset="0.8" stop-color="#9200ff"/><stop offset="0.85" stop-color="#9f00ff"/><stop offset="0.9" stop-color="#ac00ff"/><stop offset="0.95" stop-color="#b900ff"/><stop offset="1" stop-color="#c600ff"/></linearGradient>
<linearGradient id="r96" x1="690" y1="0" x2="850" y2="0" gradientUnits="userSpaceOnUse"><stop offset="0" stop-color="#000eff"/><stop offset="0.05" stop-color="#000bff"/><stop offset="0.1" stop-color="#0008ff"/><stop offset="0.15" stop-color="#0004ff"/><stop offset="0.2" stop-color="#0101ff"/><stop offset="0.25" stop-color="#0c00ff"/><stop offset="0.3" stop-color="#1800ff"/><stop offset="0.35" stop-color="#2300ff"/><stop offset="0.4" stop-color="#2f00ff"/><stop offset="0.45" stop-color="#3b00ff"/><stop offset="0.5" stop-color="#4700ff"/><stop offset="0.55" stop-color="#5300ff"/><stop offset="0.6" stop-color="#5f00ff"/><stop offset="0.65" stop-color="#6b00ff"/><stop offset="0.7" stop-color="#7700ff"/><stop offset="0.75" stop-color="#8300ff"/><stop offset="0.8" stop-color="#9000ff"/><stop offset="0.85" stop-color="#9c00ff"/><stop offset="0.9" stop-color="#a900ff"/><stop offset="0.95" stop-color="#b600ff"/><stop offset="1" stop-color="#c300ff"/></linearGradient>
<linearGradient id="r97" x1="690" y1="0" x2="850" y2="0" gradientUnits="userSpaceOnUse"><stop offset="0" stop-color="#000dff"/><stop offset="0.05" stop-color="#000aff"/><stop offset="0.1" stop-color="#0007ff"/><stop offset="0.15" stop-color="#0003ff"/><stop offset="0.2" stop-color="#0000ff"/><stop offset="0.25" stop-color="#0c00ff"/><stop offset="0.3" stop-color="#1700ff"/><stop offset="0.35" stop-color="#2200ff"/><stop offset="0.4" stop-color="#2e00ff"/><stop offset="0.45" stop-color="#3a00ff"/><stop offset="0.5" stop-color="#4500ff"/><stop offset="0.55" stop-color="#5100ff"/><stop offset="0.6" stop-color="#5d00ff"/><stop offset="0.65" stop-color="#6900ff"/><stop offset="0.7" stop-color="#7500ff"/><stop offset="0.75" stop-color="#8100ff"/><stop offset="0.8" stop-color="#8e00ff"/><stop offset="0.85" stop-color="#9a00ff"/><stop offset="0.9" stop-color="#a700ff"/><stop offset="0.95" stop-color="#b300ff"/><stop offset="1" stop-color="#c000ff"/></linearGradient>
<linearGradient id="r98" x1="698" y1="0" x2="850" y2="0" gradientUnits="userSpaceOnUse"><stop offset="0" stop-color="#0009ff"/><stop offset="0.05" stop-color="#0006ff"/><stop offset="0.11" stop-color="#0003ff"/><stop offset="0.16" stop-color="#0000ff"/><stop offset="0.21" stop-color="#0b00ff"/><stop offset="0.26" stop-color="#1600ff"/><stop offset="0.32" stop-color="#2200ff"/><stop offset="0.37" stop-color="#2d00ff"/><stop offset="0.42" stop-color="#3800ff"/><stop offset="0.47" stop-color="#4400ff"/><stop offset="0.53" stop-color="#5000ff"/><stop offset="0.58" stop-color="#5c00ff"/><stop offset="0.63" stop-color="#6700ff"/><stop offset="0.68" stop-color="#7300ff"/><stop offset="0.74" stop-color="#7f00ff"/><stop offset="0.79" stop-color="#8c00ff"/><stop offset="0.84" stop-color="#9800ff"/><stop offset="0.89" stop-color="#a400ff"/><stop offset="0.95" stop-color="#b100ff"/><stop offset="1" stop-color="#bd00ff"/></linearGradient>
<linearGradient id="r99" x1="698" y1="0" x2="842" y2="0" gradientUnits="userSpaceOnUse"><stop offset="0" stop-color="#0008ff"/><stop offset="0.06" stop-color="#0005ff"/><stop offset="0.11" stop-color="#0002ff"/><stop offset="0.17" stop-color="#0000ff"/><stop offset="0.22" stop-color="#0a00ff"/><stop offset="0.28" stop-color="#1500ff"/><stop offset="0.33" stop-color="#2100ff"/><stop offset="0.39" stop-color="#2c00ff"/><stop offset="0.44" stop-color="#3700ff"/><stop offset="0.5" stop-color="#4300ff"/><stop offset="0.56" stop-color="#4e00ff"/><stop offset="0.61" stop-color="#5a00ff"/><stop offset="0.67" stop-color="#6600ff"/><stop offset="0.72" stop-color="#7200ff"/><stop offset="0.78" stop-color="#7d00ff"/><stop offset="0.83" stop-color="#8a00ff"/><stop offset="0.89" stop-color="#9600ff"/><stop offset="0.94" stop-color="#a200ff"/><stop offset="1" stop-color="#ae00ff"/></linearGradient>
<linearGradient id="r100" x1="698" y1="0" x2="842" y2="0" gradientUnits="userSpaceOnUse"><stop offset="0" stop-color="#0007ff"/><stop offset="0.06" stop-color="#0004ff"/><stop offset="0.11" stop-color="#0001ff"/><stop offset="0.17" stop-color="#0000ff"/><stop offset="0.22" stop-color="#0a00ff"/><stop offset="0.28" stop-color="#1500ff"/><stop offset="0.33" stop-color="#2000ff"/><stop offset="0.39" stop-color="#2b00ff"/><stop offset="0.44" stop-color="#3600ff"/><stop offset="0.5" stop-color="#4200ff"/><stop offset="0.56" stop-color="#4d00ff"/><stop offset="0.61" stop-color="#5900ff"/><stop offset="0.67" stop-color="#6400ff"/><stop offset="0.72" stop-color="#7000ff"/><stop offset="0.78" stop-color="#7c00ff"/><stop offset="0.83" stop-color="#8700ff"/><stop offset="0.89" stop-color="#9300ff"/><stop offset="0.94" stop-color="#9f00ff"/><stop offset="1" stop-color="#ac00ff"/></linearGradient>
<linearGradient id="r101" x1="698" y1="0" x2="842" y2="0" gradientUnits="userSpaceOnUse"><stop offset="0" stop-color="#0006ff"/><stop offset="0.06" stop-color="#0003ff"/><stop offset="0.11" stop-color="#0000ff"/><stop offset="0.17" stop-color="#0000ff"/><stop offset="0.22" stop-color="#0900ff"/><stop offset="0.28" stop-color="#1400ff"/><stop offset="0.33" stop-color="#1f00ff"/><stop offset="0.39" stop-color="#2a00ff"/><stop offset="0.44" stop-color="#3500ff"/><stop offset="0.5" stop-color="#4000ff"/><stop offset="0.56" stop-color="#4c00ff"/><stop offset="0.61" stop-color="#5700ff"/><stop offset="0.67" stop-color="#6300ff"/><stop offset="0.72" stop-color="#6e00ff"/><stop offset="0.78" stop-color="#7a00ff"/><stop offset="0.83" stop-color="#8500ff"/><stop offset="0.89" stop-color="#9100ff"/><stop offset="0.94" stop-color="#9d00ff"/><stop offset="1" stop-color="#a900ff"/></linearGradient>
<linearGradient id="r102" x1="698" y1="0" x2="842" y2="0" gradientUnits="userSpaceOnUse"><stop offset="0" stop-color="#0005ff"/><stop offset="0.06" stop-color="#0002ff"/><stop offset="0.11" stop-color="#0000ff"/><stop offset="0.17" stop-color="#0000ff"/><stop offset="0.22" stop-color="#0900ff"/><stop offset="0.28" stop-color="#1300ff"/><stop offset="0.33" stop-color="#1e00ff"/><stop offset="0.39" stop-color="#2900ff"/><stop offset="0.44" stop-color="#3400ff"/><stop offset="0.5" stop-color="#3f00ff"/><stop offset="0.56" stop-color="#4a00ff"/><stop offset="0.61" stop-color="#5600ff"/><stop offset="0.67" stop-color="#6100ff"/><stop offset="0.72" stop-color="#6c00ff"/><stop offset="0.78" stop-color="#7800ff"/><stop offset="0.83" stop-color="#8400ff"/><stop offset="0.89" stop-color="#8f00ff"/><stop offset="0.94" stop-color="#9b00ff"/><stop offset="1" stop-color="#a700ff"/></linearGradient>
<linearGradient id="r103" x1="706" y1="0" x2="834" y2="0" gradientUnits="userSpaceOnUse"><stop offset="0" stop-color="#0001ff"/><stop offset="0.06" stop-color="#0000ff"/><stop offset="0.12" stop-color="#0000ff"/><stop offset="0.19" stop-color="#0800ff"/><stop offset="0.25" stop-color="#1300ff"/><stop offset="0.31" stop-color="#1d00ff"/><stop offset="0.38" stop-color="#2800ff"/><stop offset="0.44" stop-color="#3300ff"/><stop offset="0.5" stop-color="#3e00ff"/><stop offset="0.56" stop-color="#4900ff"/><stop offset="0.62" stop-color="#5400ff"/><stop offset="0.69" stop-color="#5f00ff"/><stop offset="0.75" stop-color="#6b00ff"/><stop offset="0.81" stop-color="#7600ff"/><stop offset="0.88" stop-color="#8200ff"/><stop offset="0.94" stop-color="#8d00ff"/><stop offset="1" stop-color="#9900ff"/></linearGradient>
<linearGradient id="r104" x1="706" y1="0" x2="834" y2="0" gradientUnits="userSpaceOnUse"><stop offset="0" stop-color="#0001ff"/><stop offset="0.06" stop-color="#0000ff"/><stop offset="0.12" stop-color="#0000ff"/><stop offset="0.19" stop-color="#0800ff"/><stop offset="0.25" stop-color="#1200ff"/><stop offset="0.31" stop-color="#1d00ff"/><stop offset="0.38" stop-color="#2700ff"/><stop offset="0.44" stop-color="#3200ff"/><stop offset="0.5" stop-color="#3d00ff"/><stop offset="0.56" stop-color="#4800ff"/><stop offset="0.62" stop-color="#5300ff"/><stop offset="0.69" stop-color="#5e00ff"/><stop offset="0.75" stop-color="#6900ff"/><stop offset="0.81" stop-color="#7400ff"/><stop offset="0.88" stop-color="#8000ff"/><stop offset="0.94" stop-color="#8b00ff"/><stop offset="1" stop-color="#9700ff"/></linearGradient>
<linearGradient id="r105" x1="706" y1="0" x2="834" y2="0" gradientUnits="userSpaceOnUse"><stop offset="0" stop-color="#0000ff"/><stop offset="0.06" stop-color="#0000ff"/><stop offset="0.12" stop-color="#0000ff"/><stop offset="0.19" stop-color="#0700ff"/><stop offset="0.25" stop-color="#1100ff"/><stop offset="0.31" stop-color="#1c00ff"/><stop offset="0.38" stop-color="#2600ff"/><stop offset="0.44" stop-color="#3100ff"/><stop offset="0.5" stop-color="#3c00ff"/><stop offset="0.56" stop-color="#4700ff"/><stop offset="0.62" stop-color="#5200ff"/><stop offset="0.69" stop-color="#5d00ff"/><stop offset="0.75" stop-color="#6800ff"/><stop offset="0.81" stop-color="#7300ff"/><stop offset="0.88" stop-color="#7e00ff"/><stop offset="0.94" stop-color="#8900ff"/><stop offset="1" stop-color="#9500ff"/></linearGradient>
<linearGradient id="r106" x1="706" y1="0" x2="826" y2="0" gradientUnits="userSpaceOnUse"><stop offset="0" stop-color="#0000ff"/><stop offset="0.07" stop-color="#0000ff"/><stop offset="0.13" stop-color="#0000ff"/><stop offset="0.2" stop-color="#0600ff"/><stop offset="0.27" stop-color="#1100ff"/><stop offset="0.33" stop-color="#1b00ff"/><stop offset="0.4" stop-color="#2600ff"/><stop offset="0.47" stop-color="#3000ff"/><stop offset="0.53" stop-color="#3b00ff"/><stop offset="0.6" stop-color="#4500ff"/><stop offset="0.67" stop-color="#5000ff"/><stop offset="0.73" stop-color="#5b00ff"/><stop offset="0.8" stop-color="#6600ff"/><stop offset="0.87" stop-color="#7100ff"/><stop offset="0.93" stop-color="#7c00ff"/><stop offset="1" stop-color="#8700ff"/></linearGradient>
<linearGradient id="r107" x1="706" y1="0" x2="826" y2="0" gradientUnits="userSpaceOnUse"><stop offset="0" stop-color="#0000ff"/><stop offset="0.07" stop-color="#0000ff"/><stop offset="0.13" stop-color="#0000ff"/><stop offset="0.2" stop-color="#0600ff"/><stop offset="0.27" stop-color="#1000ff"/><stop offset="0.33" stop-color="#1a00ff"/><stop offset="0.4" stop-color="#2500ff"/><stop offset="0.47" stop-color="#2f00ff"/><stop offset="0.53" stop-color="#3a00ff"/><stop offset="0.6" stop-color="#4400ff"/><stop offset="0.67" stop-color="#4f00ff"/><stop offset="0.73" stop-color="#5a00ff"/><stop offset="0.8" stop-color="#6500ff"/><stop offset="0.87" stop-color="#6f00ff"/><stop offset="0.93" stop-color="#7a00ff"/><stop offset="1" stop-color="#8500ff"/></linearGradient>
<linearGradient id="r108" x1="714" y1="0" x2="826" y2="0" gradientUnits="userSpaceOnUse"><stop offset="0" stop-color="#0000ff"/><stop offset="0.07" stop-color="#0000ff"/><stop offset="0.14" stop-color="#0500ff"/><stop offset="0.21" stop-color="#1000ff"/><stop offset="0.29" stop-color="#1a00ff"/><stop offset="0.36" stop-color="#2400ff"/><stop offset="0.43" stop-color="#2e00ff"/><stop offset="0.5" stop-color="#3900ff"/><stop offset="0.57" stop-color="#4300ff"/><stop offset="0.64" stop-color="#4e00ff"/><stop offset="0.71" stop-color="#5800ff"/><stop offset="0.79" stop-color="#6300ff"/><stop offset="0.86" stop-color="#6e00ff"/><stop offset="0.93" stop-color="#7900ff"/><stop offset="1" stop-color="#8400ff"/></linearGradient>
<linearGradient id="r109" x1="714" y1="0" x2="826" y2="0" gradientUnits="userSpaceOnUse"><stop offset="0" stop-color="#0000ff"/><stop offset="0.07" stop-color="#0000ff"/><stop offset="0.14" stop-color="#0500ff"/><stop offset="0.21" stop-color="#0f00ff"/><stop offset="0.29" stop-color="#1900ff"/><stop offset="0.36" stop-color="#2300ff"/><stop offset="0.43" stop-color="#2d00ff"/><stop offset="0.5" stop-color="#3800ff"/><stop offset="0.57" stop-color="#4200ff"/><stop offset="0.64" stop-color="#4d00ff"/><stop offset="0.71" stop-color="#5700ff"/><stop offset="0.79" stop-color="#6200ff"/><stop offset="0.86" stop-color="#6c00ff"/><stop offset="0.93" stop-color="#7700ff"/><stop offset="1" stop-color="#8200ff"/></linearGradient>
<linearGradient id="r110" x1="714" y1="0" x2="818" y2="0" gradientUnits="userSpaceOnUse"><stop offset="0" stop-color="#0000ff"/><stop offset="0.08" stop-color="#0000ff"/><stop offset="0.15" stop-color="#0400ff"/><stop offset="0.23" stop-color="#0e00ff"/><stop offset="0.31" stop-color="#1800ff"/><stop offset="0.38" stop-color="#2200ff"/><stop offset="0.46" stop-color="#2d00ff"/><stop offset="0.54" stop-color="#3700ff"/><stop offset="0.62" stop-color="#4100ff"/><stop offset="0.69" stop-color="#4b00ff"/><stop offset="0.77" stop-color="#5600ff"/><stop offset="0.85" stop-color="#6000ff"/><stop offset="0.92" stop-color="#6b00ff"/><stop offset="1" stop-color="#7500ff"/></linearGradient>
<linearGradient id="r111" x1="714" y1="0" x2="818" y2="0" gradientUnits="userSpaceOnUse"><stop offset="0" stop-color="#0000ff"/><stop offset="0.08" stop-color="#0000ff"/><stop offset="0.15" stop-color="#0400ff"/><stop offset="0.23" stop-color="#0e00ff"/><stop offset="0.31" stop-color="#1800ff"/><stop offset="0.38" stop-color="#2200ff"/><stop offset="0.46" stop-color="#2c00ff"/><stop offset="0.54" stop-color="#3600ff"/><stop offset="0.62" stop-color="#4000ff"/><stop offset="0.69" stop-color="#4a00ff"/><stop offset="0.77" stop-color="#5400ff"/><stop offset="0.85" stop-color="#5f00ff"/><stop offset="0.92" stop-color="#6900ff"/><stop offset="1" stop-color="#7400ff"/></linearGradient>
<linearGradient id="r112" x1="722" y1="0" x2="818" y2="0" gradientUnits="userSpaceOnUse"><stop offset="0" stop-color="#0000ff"/><stop offset="0.08" stop-color="#0400ff"/><stop offset="0.17" stop-color="#0d00ff"/><stop offset="0.25" stop-color="#1700ff"/><stop offset="0.33" stop-color="#2100ff"/><stop offset="0.42" stop-color="#2b00ff"/><stop offset="0.5" stop-color="#3500ff"/><stop offset="0.58" stop-color="#3f00ff"/><stop offset="0.67" stop-color="#4900ff"/><stop offset="0.75" stop-color="#5300ff"/><stop offset="0.83" stop-color="#5d00ff"/><stop offset="0.92" stop-color="#6800ff"/><stop offset="1" stop-color="#7200ff"/></linearGradient>
<linearGradient id="r113" x1="722" y1="0" x2="818" y2="0" gradientUnits="userSpaceOnUse"><stop offset="0" stop-color="#0000ff"/><stop offset="0.08" stop-color="#0300ff"/><stop offset="0.17" stop-color="#0d00ff"/><stop offset="0.25" stop-color="#1600ff"/><stop offset="0.33" stop-color="#2000ff"/><stop offset="0.42" stop-color="#2a00ff"/><stop offset="0.5" stop-color="#3400ff"/><stop offset="0.58" stop-color="#3e00ff"/><stop offset="0.67" stop-color="#4800ff"/><stop offset="0.75" stop-color="#5200ff"/><stop offset="0.83" stop-color="#5c00ff"/><stop offset="0.92" stop-color="#6600ff"/><stop offset="1" stop-color="#7100ff"/></linearGradient>
<linearGradient id="r114" x1="722" y1="0" x2="810" y2="0" gradientUnits="userSpaceOnUse"><stop offset="0" stop-color="#0000ff"/><stop offset="0.09" stop-color="#0300ff"/><stop offset="0.18" stop-color="#0c00ff"/><stop offset="0.27" stop-color="#1600ff"/><stop offset="0.36" stop-color="#1f00ff"/><stop offset="0.45" stop-color="#2900ff"/><stop offset="0.55" stop-color="#3300ff"/><stop offset="0.64" stop-color="#3d00ff"/><stop offset="0.73" stop-color="#4700ff"/><stop offset="0.82" stop-color="#5100ff"/><stop offset="0.91" stop-color="#5b00ff"/><stop offset="1" stop-color="#6500ff"/></linearGradient>
<linearGradient id="r115" x1="730" y1="0" x2="810" y2="0" gradientUnits="userSpaceOnUse"><stop offset="0" stop-color="#0200ff"/><stop offset="0.1" stop-color="#0c00ff"/><stop offset="0.2" stop-color="#1500ff"/><stop offset="0.3" stop-color="#1f00ff"/><stop offset="0.4" stop-color="#2800ff"/><stop offset="0.5" stop-color="#3200ff"/><stop offset="0.6" stop-color="#3c00ff"/><stop offset="0.7" stop-color="#4600ff"/><stop offset="0.8" stop-color="#5000ff"/><stop offset="0.9" stop-color="#5900ff"/><stop offset="1" stop-color="#6300ff"/></linearGradient>
<linearGradient id="r116" x1="730" y1="0" x2="810" y2="0" gradientUnits="userSpaceOnUse"><stop offset="0" stop-color="#0200ff"/><stop offset="0.1" stop-color="#0b00ff"/><stop offset="0.2" stop-color="#1500ff"/><stop offset="0.3" stop-color="#1e00ff"/><stop offset="0.4" stop-color="#2800ff"/><stop offset="0.5" stop-color="#3100ff"/><stop offset="0.6" stop-color="#3b00ff"/><stop offset="0.7" stop-color="#4500ff"/><stop offset="0.8" stop-color="#4e00ff"/><stop offset="0.9" stop-color="#5800ff"/><stop offset="1" stop-color="#6200ff"/></linearGradient>
<linearGradient id="r117" x1="730" y1="0" x2="810" y2="0" gradientUnits="userSpaceOnUse"><stop offset="0" stop-color="#0100ff"/><stop offset="0.1" stop-color="#0b00ff"/><stop offset="0.2" stop-color="#1400ff"/><stop offset="0.3" stop-color="#1d00ff"/><stop offset="0.4" stop-color="#2700ff"/><stop offset="0.5" stop-color="#3000ff"/><stop offset="0.6" stop-color="#3a00ff"/><stop offset="0.7" stop-color="#4400ff"/><stop offset="0.8" stop-color="#4d00ff"/><stop offset="0.9" stop-color="#5700ff"/><stop offset="1" stop-color="#6100ff"/></linearGradient>
<linearGradient id="r118" x1="738" y1="0" x2="802" y2="0" gradientUnits="userSpaceOnUse"><stop offset="0" stop-color="#0a00ff"/><stop offset="0.12" stop-color="#1300ff"/><stop offset="0.25" stop-color="#1d00ff"/><stop offset="0.38" stop-color="#2600ff"/><stop offset="0.5" stop-color="#2f00ff"/><stop offset="0.62" stop-color="#3900ff"/><stop offset="0.75" stop-color="#4200ff"/><stop offset="0.88" stop-color="#4c00ff"/><stop offset="1" stop-color="#5600ff"/></linearGradient>
<linearGradient id="r119" x1="738" y1="0" x2="802" y2="0" gradientUnits="userSpaceOnUse"><stop offset="0" stop-color="#0a00ff"/><stop offset="0.12" stop-color="#1300ff"/><stop offset="0.25" stop-color="#1c00ff"/><stop offset="0.38" stop-color="#2500ff"/><stop offset="0.5" stop-color="#2f00ff"/><stop offset="0.62" stop-color="#3800ff"/><stop offset="0.75" stop-color="#4100ff"/><stop offset="0.88" stop-color="#4b00ff"/><stop offset="1" stop-color="#5500ff"/></linearGradient>
<linearGradient id="r120" x1="738" y1="0" x2="802" y2="0" gradientUnits="userSpaceOnUse"><stop offset="0" stop-color="#0900ff"/><stop offset="0.12" stop-color="#1200ff"/><stop offset="0.25" stop-color="#1b00ff"/><stop offset="0.38" stop-color="#2500ff"/><stop offset="0.5" stop-color="#2e00ff"/><stop offset="0.62" stop-color="#3700ff"/><stop offset="0.75" stop-color="#4000ff"/><stop offset="0.88" stop-color="#4a00ff"/><stop offset="1" stop-color="#5300ff"/></linearGradient>
<linearGradient id="r121" x1="738" y1="0" x2="802" y2="0" gradientUnits="userSpaceOnUse"><stop offset="0" stop-color="#0900ff"/><stop offset="0.12" stop-color="#1200ff"/><stop offset="0.25" stop-color="#1b00ff"/><stop offset="0.38" stop-color="#2400ff"/><stop offset="0.5" stop-color="#2d00ff"/><stop offset="0.62" stop-color="#3600ff"/><stop offset="0.75" stop-color="#3f00ff"/><stop offset="0.88" stop-color="#4900ff"/><stop offset="1" stop-color="#5200ff"/></linearGradient>
<linearGradient id="r122" x1="746" y1="0" x2="794" y2="0" gradientUnits="userSpaceOnUse"><stop offset="0" stop-color="#1100ff"/><stop offset="0.17" stop-color="#1a00ff"/><stop offset="0.33" stop-color="#2300ff"/><stop offset="0.5" stop-color="#2c00ff"/><stop offset="0.67" stop-color="#3500ff"/><stop offset="0.83" stop-color="#3f00ff"/><stop offset="1" stop-color="#4800ff"/></linearGradient>
<linearGradient id="r123" x1="746" y1="0" x2="794" y2="0" gradientUnits="userSpaceOnUse"><stop offset="0" stop-color="#1100ff"/><stop offset="0.17" stop-color="#1a00ff"/><stop offset="0.33" stop-color="#2200ff"/><stop offset="0.5" stop-color="#2b00ff"/><stop offset="0.67" stop-color="#3400ff"/><stop offset="0.83" stop-color="#3e00ff"/><stop offset="1" stop-color="#4700ff"/></linearGradient>
<linearGradient id="r124" x1="746" y1="0" x2="794" y2="0" gradientUnits="userSpaceOnUse"><stop offset="0" stop-color="#1000ff"/><stop offset="0.17" stop-color="#1900ff"/><stop offset="0.33" stop-color="#2200ff"/><stop offset="0.5" stop-color="#2b00ff"/><stop offset="0.67" stop-color="#3400ff"/><stop offset="0.83" stop-color="#3d00ff"/><stop offset="1" stop-color="#4600ff"/></linearGradient>
<linearGradient id="r125" x1="754" y1="0" x2="786" y2="0" gradientUnits="userSpaceOnUse"><stop offset="0" stop-color="#1800ff"/><stop offset="0.25" stop-color="#2100ff"/><stop offset="0.5" stop-color="#2a00ff"/><stop offset="0.75" stop-color="#3300ff"/><stop offset="1" stop-color="#3c00ff"/></linearGradient>
<linearGradient id="r126" x1="754" y1="0" x2="786" y2="0" gradientUnits="userSpaceOnUse"><stop offset="0" stop-color="#1800ff"/><stop offset="0.25" stop-color="#2000ff"/><stop offset="0.5" stop-color="#2900ff"/><stop offset="0.75" stop-color="#3200ff"/><stop offset="1" stop-color="#3b00ff"/></linearGradient>
<linearGradient id="r127" x1="754" y1="0" x2="786" y2="0" gradientUnits="userSpaceOnUse"><stop offset="0" stop-color="#1700ff"/><stop offset="0.25" stop-color="#2000ff"/><stop offset="0.5" stop-color="#2800ff"/><stop offset="0.75" stop-color="#3100ff"/><stop offset="1" stop-color="#3a00ff"/></linearGradient>
<linearGradient id="r128" x1="762" y1="0" x2="786" y2="0" gradientUnits="userSpaceOnUse"><stop offset="0" stop-color="#1f00ff"/><stop offset="0.33" stop-color="#2800ff"/><stop offset="0.67" stop-color="#3000ff"/><stop offset="1" stop-color="#3900ff"/></linearGradient>
<linearGradient id="r129" x1="762" y1="0" x2="778" y2="0" gradientUnits="userSpaceOnUse"><stop offset="0" stop-color="#1f00ff"/><stop offset="0.5" stop-color="#2700ff"/><stop offset="1" stop-color="#3000ff"/></linearGradient>
<linearGradient id="r130" x1="762" y1="0" x2="778" y2="0" gradientUnits="userSpaceOnUse"><stop offset="0" stop-color="#1e00ff"/><stop offset="0.5" stop-color="#2600ff"/><stop offset="1" stop-color="#2f00ff"/></linearGradient>
<linearGradient id="rbr" x1="0" y1="0" x2="0" y2="1"><stop offset="0" stop-color="#ff0808"/><stop offset="0.45" stop-color="#f00000"/><stop offset="1" stop-color="#900000"/></linearGradient>
<linearGradient id="rbg" x1="0" y1="0" x2="0" y2="1"><stop offset="0" stop-color="#20c020"/><stop offset="1" stop-color="#0a6a0a"/></linearGradient>
<linearGradient id="rbb" x1="0" y1="0" x2="0" y2="1"><stop offset="0" stop-color="#1010ff"/><stop offset="0.5" stop-color="#0000f0"/><stop offset="1" stop-color="#000090"/></linearGradient>
<linearGradient id="z0" x1="0" y1="0" x2="1" y2="0"><stop offset="0" stop-color="#86ffcf"/><stop offset="0.06" stop-color="#8effce"/><stop offset="0.12" stop-color="#97ffce"/><stop offset="0.18" stop-color="#9fffce"/><stop offset="0.23" stop-color="#a7ffcd"/><stop offset="0.29" stop-color="#b0ffcd"/><stop offset="0.35" stop-color="#b9ffcd"/><stop offset="0.41" stop-color="#c2ffcc"/><stop offset="0.47" stop-color="#cbffcc"/><stop offset="0.53" stop-color="#d4ffcb"/><stop offset="0.59" stop-color="#ddffcb"/><stop offset="0.65" stop-color="#e6ffcb"/><stop offset="0.7" stop-color="#f0ffca"/><stop offset="0.76" stop-color="#faffca"/><stop offset="0.82" stop-color="#fffbc6"/><stop offset="0.88" stop-color="#fff1be"/><stop offset="0.94" stop-color="#ffe8b7"/><stop offset="1" stop-color="#ffe0b0"/></linearGradient>
<linearGradient id="z1" x1="0" y1="0" x2="1" y2="0"><stop offset="0" stop-color="#88ffd1"/><stop offset="0.06" stop-color="#90ffd1"/><stop offset="0.12" stop-color="#99ffd1"/><stop offset="0.18" stop-color="#a1ffd0"/><stop offset="0.23" stop-color="#a9ffd0"/><stop offset="0.29" stop-color="#b2ffd0"/><stop offset="0.35" stop-color="#bbffcf"/><stop offset="0.41" stop-color="#c4ffcf"/><stop offset="0.47" stop-color="#cdffce"/><stop offset="0.53" stop-color="#d6ffce"/><stop offset="0.59" stop-color="#dfffce"/><stop offset="0.65" stop-color="#e9ffcd"/><stop offset="0.7" stop-color="#f3ffcd"/><stop offset="0.76" stop-color="#fcffcd"/><stop offset="0.82" stop-color="#fff8c6"/><stop offset="0.88" stop-color="#ffefbf"/><stop offset="0.94" stop-color="#ffe6b7"/><stop offset="1" stop-color="#ffddb0"/></linearGradient>
<linearGradient id="z2" x1="0" y1="0" x2="1" y2="0"><stop offset="0" stop-color="#8affd4"/><stop offset="0.06" stop-color="#92ffd3"/><stop offset="0.12" stop-color="#9affd3"/><stop offset="0.18" stop-color="#a3ffd3"/><stop offset="0.23" stop-color="#acffd2"/><stop offset="0.29" stop-color="#b4ffd2"/><stop offset="0.35" stop-color="#bdffd2"/><stop offset="0.41" stop-color="#c6ffd1"/><stop offset="0.47" stop-color="#cfffd1"/><stop offset="0.53" stop-color="#d9ffd1"/><stop offset="0.59" stop-color="#e2ffd0"/><stop offset="0.65" stop-color="#ecffd0"/><stop offset="0.7" stop-color="#f5ffd0"/><stop offset="0.76" stop-color="#ffffcf"/><stop offset="0.82" stop-color="#fff5c7"/><stop offset="0.88" stop-color="#ffecbf"/><stop offset="0.94" stop-color="#ffe3b8"/><stop offset="1" stop-color="#ffdbb0"/></linearGradient>
<linearGradient id="z3" x1="0" y1="0" x2="1" y2="0"><stop offset="0" stop-color="#8cffd6"/><stop offset="0.06" stop-color="#94ffd6"/><stop offset="0.12" stop-color="#9cffd6"/><stop offset="0.18" stop-color="#a5ffd5"/><stop offset="0.23" stop-color="#aeffd5"/><stop offset="0.29" stop-color="#b6ffd5"/><stop offset="0.35" stop-color="#bfffd4"/><stop offset="0.41" stop-color="#c8ffd4"/><stop offset="0.47" stop-color="#d2ffd4"/><stop offset="0.53" stop-color="#dbffd3"/><stop offset="0.59" stop-color="#e5ffd3"/><stop offset="0.65" stop-color="#eeffd3"/><stop offset="0.7" stop-color="#f8ffd2"/><stop offset="0.76" stop-color="#fffccf"/><stop offset="0.82" stop-color="#fff2c7"/><stop offset="0.88" stop-color="#ffe9bf"/><stop offset="0.94" stop-color="#ffe1b8"/><stop offset="1" stop-color="#ffd8b1"/></linearGradient>
<linearGradient id="z4" x1="0" y1="0" x2="1" y2="0"><stop offset="0" stop-color="#8effd9"/><stop offset="0.06" stop-color="#96ffd8"/><stop offset="0.12" stop-color="#9effd8"/><stop offset="0.18" stop-color="#a7ffd8"/><stop offset="0.23" stop-color="#b0ffd8"/><stop offset="0.29" stop-color="#b9ffd7"/><stop offset="0.35" stop-color="#c2ffd7"/><stop offset="0.41" stop-color="#cbffd7"/><stop offset="0.47" stop-color="#d4ffd6"/><stop offset="0.53" stop-color="#deffd6"/><stop offset="0.59" stop-color="#e7ffd6"/><stop offset="0.65" stop-color="#f1ffd5"/><stop offset="0.7" stop-color="#fbffd5"/><stop offset="0.76" stop-color="#fff9d0"/><stop offset="0.82" stop-color="#fff0c8"/><stop offset="0.88" stop-color="#ffe7c0"/><stop offset="0.94" stop-color="#ffdeb9"/><stop offset="1" stop-color="#ffd6b1"/></linearGradient>
<linearGradient id="z5" x1="0" y1="0" x2="1" y2="0"><stop offset="0" stop-color="#8fffdb"/><stop offset="0.06" stop-color="#98ffdb"/><stop offset="0.12" stop-color="#a0ffdb"/><stop offset="0.18" stop-color="#a9ffda"/><stop offset="0.23" stop-color="#b2ffda"/><stop offset="0.29" stop-color="#bbffda"/><stop offset="0.35" stop-color="#c4ffda"/><stop offset="0.41" stop-color="#cdffd9"/><stop offset="0.47" stop-color="#d7ffd9"/><stop offset="0.53" stop-color="#e0ffd9"/><stop offset="0.59" stop-color="#eaffd8"/><stop offset="0.65" stop-color="#f4ffd8"/><stop offset="0.7" stop-color="#feffd8"/><stop offset="0.76" stop-color="#fff6d0"/><stop offset="0.82" stop-color="#ffedc8"/><stop offset="0.88" stop-color="#ffe4c0"/><stop offset="0.94" stop-color="#ffdcb9"/><stop offset="1" stop-color="#ffd4b2"/></linearGradient>
<linearGradient id="z6" x1="0" y1="0" x2="1" y2="0"><stop offset="0" stop-color="#91ffde"/><stop offset="0.06" stop-color="#9affde"/><stop offset="0.12" stop-color="#a2ffdd"/><stop offset="0.18" stop-color="#abffdd"/><stop offset="0.23" stop-color="#b4ffdd"/><stop offset="0.29" stop-color="#bdffdd"/><stop offset="0.35" stop-color="#c6ffdc"/><stop offset="0.41" stop-color="#d0ffdc"/><stop offset="0.47" stop-color="#d9ffdc"/><stop offset="0.53" stop-color="#e3ffdb"/><stop offset="0.59" stop-color="#ecffdb"/><stop offset="0.65" stop-color="#f6ffdb"/><stop offset="0.7" stop-color="#fffdd9"/><stop offset="0.76" stop-color="#fff4d1"/><stop offset="0.82" stop-color="#ffeac9"/><stop offset="0.88" stop-color="#ffe2c1"/><stop offset="0.94" stop-color="#ffdaba"/><stop offset="1" stop-color="#ffd1b2"/></linearGradient>
<linearGradient id="z7" x1="0" y1="0" x2="1" y2="0"><stop offset="0" stop-color="#93ffe0"/><stop offset="0.06" stop-color="#9cffe0"/><stop offset="0.12" stop-color="#a4ffe0"/><stop offset="0.18" stop-color="#adffe0"/><stop offset="0.23" stop-color="#b6ffe0"/><stop offset="0.29" stop-color="#bfffdf"/><stop offset="0.35" stop-color="#c9ffdf"/><stop offset="0.41" stop-color="#d2ffdf"/><stop offset="0.47" stop-color="#dcffdf"/><stop offset="0.53" stop-color="#e5ffde"/><stop offset="0.59" stop-color="#efffde"/><stop offset="0.65" stop-color="#f9ffde"/><stop offset="0.7" stop-color="#fffbda"/><stop offset="0.76" stop-color="#fff1d1"/><stop offset="0.82" stop-color="#ffe8c9"/><stop offset="0.88" stop-color="#ffdfc1"/><stop offset="0.94" stop-color="#ffd7ba"/><stop offset="1" stop-color="#ffcfb3"/></linearGradient>
<linearGradient id="z8" x1="0" y1="0" x2="1" y2="0"><stop offset="0" stop-color="#95ffe3"/><stop offset="0.06" stop-color="#9effe3"/><stop offset="0.12" stop-color="#a7ffe3"/><stop offset="0.18" stop-color="#afffe2"/><stop offset="0.23" stop-color="#b9ffe2"/><stop offset="0.29" stop-color="#c2ffe2"/><stop offset="0.35" stop-color="#cbffe2"/><stop offset="0.41" stop-color="#d5ffe2"/><stop offset="0.47" stop-color="#deffe1"/><stop offset="0.53" stop-color="#e8ffe1"/><stop offset="0.59" stop-color="#f2ffe1"/><stop offset="0.65" stop-color="#fcffe1"/><stop offset="0.7" stop-color="#fff8da"/><stop offset="0.76" stop-color="#ffeed1"/><stop offset="0.82" stop-color="#ffe5c9"/><stop offset="0.88" stop-color="#ffddc2"/><stop offset="0.94" stop-color="#ffd5ba"/><stop offset="1" stop-color="#ffcdb3"/></linearGradient>
<linearGradient id="z9" x1="0" y1="0" x2="1" y2="0"><stop offset="0" stop-color="#97ffe6"/><stop offset="0.06" stop-color="#a0ffe6"/><stop offset="0.12" stop-color="#a9ffe5"/><stop offset="0.18" stop-color="#b2ffe5"/><stop offset="0.23" stop-color="#bbffe5"/><stop offset="0.29" stop-color="#c4ffe5"/><stop offset="0.35" stop-color="#cdffe5"/><stop offset="0.41" stop-color="#d7ffe4"/><stop offset="0.47" stop-color="#e1ffe4"/><stop offset="0.53" stop-color="#ebffe4"/><stop offset="0.59" stop-color="#f5ffe4"/><stop offset="0.65" stop-color="#ffffe4"/><stop offset="0.7" stop-color="#fff5da"/><stop offset="0.76" stop-color="#ffecd2"/><stop offset="0.82" stop-color="#ffe3ca"/><stop offset="0.88" stop-color="#ffdac2"/><stop offset="0.94" stop-color="#ffd2bb"/><stop offset="1" stop-color="#ffcbb4"/></linearGradient>
<linearGradient id="z10" x1="0" y1="0" x2="1" y2="0"><stop offset="0" stop-color="#99ffe8"/><stop offset="0.06" stop-color="#a2ffe8"/><stop offset="0.12" stop-color="#abffe8"/><stop offset="0.18" stop-color="#b4ffe8"/><stop offset="0.23" stop-color="#bdffe8"/><stop offset="0.29" stop-color="#c6ffe8"/><stop offset="0.35" stop-color="#d0ffe7"/><stop offset="0.41" stop-color="#daffe7"/><stop offset="0.47" stop-color="#e3ffe7"/><stop offset="0.53" stop-color="#edffe7"/><stop offset="0.59" stop-color="#f8ffe7"/><stop offset="0.65" stop-color="#fffce4"/><stop offset="0.7" stop-color="#fff2db"/><stop offset="0.76" stop-color="#ffe9d2"/><stop offset="0.82" stop-color="#ffe0ca"/><stop offset="0.88" stop-color="#ffd8c3"/><stop offset="0.94" stop-color="#ffd0bb"/><stop offset="1" stop-color="#ffc8b4"/></linearGradient>
<linearGradient id="z11" x1="0" y1="0" x2="1" y2="0"><stop offset="0" stop-color="#9bffeb"/><stop offset="0.06" stop-color="#a4ffeb"/><stop offset="0.12" stop-color="#adffeb"/><stop offset="0.18" stop-color="#b6ffeb"/><stop offset="0.23" stop-color="#bfffeb"/><stop offset="0.29" stop-color="#c9ffeb"/><stop offset="0.35" stop-color="#d2ffea"/><stop offset="0.41" stop-color="#dcffea"/><stop offset="0.47" stop-color="#e6ffea"/><stop offset="0.53" stop-color="#f0ffea"/><stop offset="0.59" stop-color="#faffea"/><stop offset="0.65" stop-color="#fff9e4"/><stop offset="0.7" stop-color="#ffefdb"/><stop offset="0.76" stop-color="#ffe6d3"/><stop offset="0.82" stop-color="#ffdecb"/><stop offset="0.88" stop-color="#ffd5c3"/><stop offset="0.94" stop-color="#ffcebc"/><stop offset="1" stop-color="#ffc6b5"/></linearGradient>
<linearGradient id="z12" x1="0" y1="0" x2="1" y2="0"><stop offset="0" stop-color="#9dffee"/><stop offset="0.06" stop-color="#a6ffee"/><stop offset="0.12" stop-color="#afffee"/><stop offset="0.18" stop-color="#b8ffee"/><stop offset="0.23" stop-color="#c2ffee"/><stop offset="0.29" stop-color="#cbffed"/><stop offset="0.35" stop-color="#d5ffed"/><stop offset="0.41" stop-color="#dfffed"/><stop offset="0.47" stop-color="#e9ffed"/><stop offset="0.53" stop-color="#f3ffed"/><stop offset="0.59" stop-color="#fdffed"/><stop offset="0.65" stop-color="#fff6e5"/><stop offset="0.7" stop-color="#ffeddc"/><stop offset="0.76" stop-color="#ffe4d3"/><stop offset="0.82" stop-color="#ffdbcb"/><stop offset="0.88" stop-color="#ffd3c3"/><stop offset="0.94" stop-color="#ffcbbc"/><stop offset="1" stop-color="#ffc4b5"/></linearGradient>
<linearGradient id="z13" x1="0" y1="0" x2="1" y2="0"><stop offset="0" stop-color="#9ffff1"/><stop offset="0.06" stop-color="#a8fff1"/><stop offset="0.12" stop-color="#b1fff1"/><stop offset="0.18" stop-color="#bbfff1"/><stop offset="0.23" stop-color="#c4fff1"/><stop offset="0.29" stop-color="#cefff0"/><stop offset="0.35" stop-color="#d8fff0"/><stop offset="0.41" stop-color="#e2fff0"/><stop offset="0.47" stop-color="#ecfff0"/><stop offset="0.53" stop-color="#f6fff0"/><stop offset="0.59" stop-color="#fffeef"/><stop offset="0.65" stop-color="#fff3e5"/><stop offset="0.7" stop-color="#ffeadc"/><stop offset="0.76" stop-color="#ffe1d3"/><stop offset="0.82" stop-color="#ffd9cb"/><stop offset="0.88" stop-color="#ffd1c4"/><stop offset="0.94" stop-color="#ffc9bd"/><stop offset="1" stop-color="#ffc2b5"/></linearGradient>
<linearGradient id="z14" x1="0" y1="0" x2="1" y2="0"><stop offset="0" stop-color="#a1fff4"/><stop offset="0.06" stop-color="#aafff4"/><stop offset="0.12" stop-color="#b4fff4"/><stop offset="0.18" stop-color="#bdfff4"/><stop offset="0.23" stop-color="#c7fff3"/><stop offset="0.29" stop-color="#d0fff3"/><stop offset="0.35" stop-color="#dafff3"/><stop offset="0.41" stop-color="#e4fff3"/><stop offset="0.47" stop-color="#eefff3"/><stop offset="0.53" stop-color="#f9fff3"/><stop offset="0.59" stop-color="#fffbef"/><stop offset="0.65" stop-color="#fff1e5"/><stop offset="0.7" stop-color="#ffe7dc"/><stop offset="0.76" stop-color="#ffded4"/><stop offset="0.82" stop-color="#ffd6cc"/><stop offset="0.88" stop-color="#ffcec4"/><stop offset="0.94" stop-color="#ffc7bd"/><stop offset="1" stop-color="#ffbfb6"/></linearGradient>
<linearGradient id="z15" x1="0" y1="0" x2="1" y2="0"><stop offset="0" stop-color="#a4fff7"/><stop offset="0.06" stop-color="#adfff7"/><stop offset="0.12" stop-color="#b6fff7"/><stop offset="0.18" stop-color="#bffff7"/><stop offset="0.23" stop-color="#c9fff6"/><stop offset="0.29" stop-color="#d3fff6"/><stop offset="0.35" stop-color="#ddfff6"/><stop offset="0.41" stop-color="#e7fff6"/><stop offset="0.47" stop-color="#f1fff6"/><stop offset="0.53" stop-color="#fcfff6"/><stop offset="0.59" stop-color="#fff8ef"/><stop offset="0.65" stop-color="#ffeee6"/><stop offset="0.7" stop-color="#ffe5dd"/><stop offset="0.76" stop-color="#ffdcd4"/><stop offset="0.82" stop-color="#ffd4cc"/><stop offset="0.88" stop-color="#ffccc5"/><stop offset="0.94" stop-color="#ffc5bd"/><stop offset="1" stop-color="#ffbdb6"/></linearGradient>
<linearGradient id="z16" x1="0" y1="0" x2="1" y2="0"><stop offset="0" stop-color="#a6fffa"/><stop offset="0.06" stop-color="#affffa"/><stop offset="0.12" stop-color="#b8fffa"/><stop offset="0.18" stop-color="#c2fffa"/><stop offset="0.23" stop-color="#ccfffa"/><stop offset="0.29" stop-color="#d5fffa"/><stop offset="0.35" stop-color="#e0fff9"/><stop offset="0.41" stop-color="#eafff9"/><stop offset="0.47" stop-color="#f4fff9"/><stop offset="0.53" stop-color="#fffff9"/><stop offset="0.59" stop-color="#fff5ef"/><stop offset="0.65" stop-color="#ffebe6"/><stop offset="0.7" stop-color="#ffe2dd"/><stop offset="0.76" stop-color="#ffd9d4"/><stop offset="0.82" stop-color="#ffd1cd"/><stop offset="0.88" stop-color="#ffcac5"/><stop offset="0.94" stop-color="#ffc2be"/><stop offset="1" stop-color="#ffbbb7"/></linearGradient>
<linearGradient id="z17" x1="0" y1="0" x2="1" y2="0"><stop offset="0" stop-color="#a8fffd"/><stop offset="0.06" stop-color="#b1fffd"/><stop offset="0.12" stop-color="#bbfffd"/><stop offset="0.18" stop-color="#c4fffd"/><stop offset="0.23" stop-color="#cefffd"/><stop offset="0.29" stop-color="#d8fffd"/><stop offset="0.35" stop-color="#e2fffd"/><stop offset="0.41" stop-color="#edfffd"/><stop offset="0.47" stop-color="#f7fffd"/><stop offset="0.53" stop-color="#fffcfa"/><stop offset="0.59" stop-color="#fff2f0"/><stop offset="0.65" stop-color="#ffe8e6"/><stop offset="0.7" stop-color="#ffdfdd"/><stop offset="0.76" stop-color="#ffd7d5"/><stop offset="0.82" stop-color="#ffcfcd"/><stop offset="0.88" stop-color="#ffc7c5"/><stop offset="0.94" stop-color="#ffc0be"/><stop offset="1" stop-color="#ffb9b7"/></linearGradient>
<linearGradient id="z18" x1="0" y1="0" x2="1" y2="0"><stop offset="0" stop-color="#aafeff"/><stop offset="0.06" stop-color="#b3feff"/><stop offset="0.12" stop-color="#bdfeff"/><stop offset="0.18" stop-color="#c6feff"/><stop offset="0.23" stop-color="#d0feff"/><stop offset="0.29" stop-color="#dafeff"/><stop offset="0.35" stop-color="#e4feff"/><stop offset="0.41" stop-color="#effeff"/><stop offset="0.47" stop-color="#f9feff"/><stop offset="0.53" stop-color="#fff9fa"/><stop offset="0.59" stop-color="#ffeff0"/><stop offset="0.65" stop-color="#ffe6e7"/><stop offset="0.7" stop-color="#ffddde"/><stop offset="0.76" stop-color="#ffd4d5"/><stop offset="0.82" stop-color="#ffcccd"/><stop offset="0.88" stop-color="#ffc5c6"/><stop offset="0.94" stop-color="#ffbebf"/><stop offset="1" stop-color="#ffb7b8"/></linearGradient>
<linearGradient id="z19" x1="0" y1="0" x2="1" y2="0"><stop offset="0" stop-color="#aafbff"/><stop offset="0.06" stop-color="#b3fbff"/><stop offset="0.12" stop-color="#bdfbff"/><stop offset="0.18" stop-color="#c6fbff"/><stop offset="0.23" stop-color="#d0fbff"/><stop offset="0.29" stop-color="#dafbff"/><stop offset="0.35" stop-color="#e4fbff"/><stop offset="0.41" stop-color="#effbff"/><stop offset="0.47" stop-color="#f9fbff"/><stop offset="0.53" stop-color="#fff6fa"/><stop offset="0.59" stop-color="#ffecf0"/><stop offset="0.65" stop-color="#ffe3e7"/><stop offset="0.7" stop-color="#ffdade"/><stop offset="0.76" stop-color="#ffd2d6"/><stop offset="0.82" stop-color="#ffcace"/><stop offset="0.88" stop-color="#ffc3c6"/><stop offset="0.94" stop-color="#ffbcbf"/><stop offset="1" stop-color="#ffb5b8"/></linearGradient>
<linearGradient id="z20" x1="0" y1="0" x2="1" y2="0"><stop offset="0" stop-color="#aaf8ff"/><stop offset="0.06" stop-color="#b3f8ff"/><stop offset="0.12" stop-color="#bdf8ff"/><stop offset="0.18" stop-color="#c6f8ff"/><stop offset="0.23" stop-color="#d0f8ff"/><stop offset="0.29" stop-color="#daf8ff"/><stop offset="0.35" stop-color="#e4f8ff"/><stop offset="0.41" stop-color="#eef8ff"/><stop offset="0.47" stop-color="#f9f8ff"/><stop offset="0.53" stop-color="#fff3fb"/><stop offset="0.59" stop-color="#ffe9f1"/><stop offset="0.65" stop-color="#ffe0e7"/><stop offset="0.7" stop-color="#ffd8de"/><stop offset="0.76" stop-color="#ffcfd6"/><stop offset="0.82" stop-color="#ffc8ce"/><stop offset="0.88" stop-color="#ffc0c7"/><stop offset="0.94" stop-color="#ffb9c0"/><stop offset="1" stop-color="#ffb3b8"/></linearGradient>
<linearGradient id="z21" x1="0" y1="0" x2="1" y2="0"><stop offset="0" stop-color="#aaf5ff"/><stop offset="0.06" stop-color="#b3f5ff"/><stop offset="0.12" stop-color="#bdf5ff"/><stop offset="0.18" stop-color="#c6f5ff"/><stop offset="0.23" stop-color="#d0f5ff"/><stop offset="0.29" stop-color="#daf5ff"/><stop offset="0.35" stop-color="#e4f5ff"/><stop offset="0.41" stop-color="#eef5ff"/><stop offset="0.47" stop-color="#f9f4ff"/><stop offset="0.53" stop-color="#fff0fb"/><stop offset="0.59" stop-color="#ffe7f1"/><stop offset="0.65" stop-color="#ffdee7"/><stop offset="0.7" stop-color="#ffd5df"/><stop offset="0.76" stop-color="#ffcdd6"/><stop offset="0.82" stop-color="#ffc5ce"/><stop offset="0.88" stop-color="#ffbec7"/><stop offset="0.94" stop-color="#ffb7c0"/><stop offset="1" stop-color="#ffb0b9"/></linearGradient>
<linearGradient id="z22" x1="0" y1="0" x2="1" y2="0"><stop offset="0" stop-color="#aaf2ff"/><stop offset="0.06" stop-color="#b4f2ff"/><stop offset="0.12" stop-color="#bdf2ff"/><stop offset="0.18" stop-color="#c6f2ff"/><stop offset="0.23" stop-color="#d0f2ff"/><stop offset="0.29" stop-color="#daf2ff"/><stop offset="0.35" stop-color="#e4f2ff"/><stop offset="0.41" stop-color="#eef1ff"/><stop offset="0.47" stop-color="#f8f1ff"/><stop offset="0.53" stop-color="#ffedfb"/><stop offset="0.59" stop-color="#ffe4f1"/><stop offset="0.65" stop-color="#ffdbe8"/><stop offset="0.7" stop-color="#ffd2df"/><stop offset="0.76" stop-color="#ffcad7"/><stop offset="0.82" stop-color="#ffc3cf"/><stop offset="0.88" stop-color="#ffbcc7"/><stop offset="0.94" stop-color="#ffb5c0"/><stop offset="1" stop-color="#ffaeb9"/></linearGradient>
<linearGradient id="z23" x1="0" y1="0" x2="1" y2="0"><stop offset="0" stop-color="#abefff"/><stop offset="0.06" stop-color="#b4efff"/><stop offset="0.12" stop-color="#bdefff"/><stop offset="0.18" stop-color="#c6efff"/><stop offset="0.23" stop-color="#d0efff"/><stop offset="0.29" stop-color="#daefff"/><stop offset="0.35" stop-color="#e4efff"/><stop offset="0.41" stop-color="#eeeeff"/><stop offset="0.47" stop-color="#f8eeff"/><stop offset="0.53" stop-color="#ffebfb"/><stop offset="0.59" stop-color="#ffe1f1"/><stop offset="0.65" stop-color="#ffd8e8"/><stop offset="0.7" stop-color="#ffd0df"/><stop offset="0.76" stop-color="#ffc8d7"/><stop offset="0.82" stop-color="#ffc1cf"/><stop offset="0.88" stop-color="#ffbac8"/><stop offset="0.94" stop-color="#ffb3c1"/><stop offset="1" stop-color="#ffacba"/></linearGradient>
<linearGradient id="z24" x1="0" y1="0" x2="1" y2="0"><stop offset="0" stop-color="#abedff"/><stop offset="0.06" stop-color="#b4ecff"/><stop offset="0.12" stop-color="#bdecff"/><stop offset="0.18" stop-color="#c7ecff"/><stop offset="0.23" stop-color="#d0ecff"/><stop offset="0.29" stop-color="#daecff"/><stop offset="0.35" stop-color="#e4ebff"/><stop offset="0.41" stop-color="#eeebff"/><stop offset="0.47" stop-color="#f8ebff"/><stop offset="0.53" stop-color="#ffe8fc"/><stop offset="0.59" stop-color="#ffdef2"/><stop offset="0.65" stop-color="#ffd6e8"/><stop offset="0.7" stop-color="#ffcde0"/><stop offset="0.76" stop-color="#ffc6d7"/><stop offset="0.82" stop-color="#ffbed0"/><stop offset="0.88" stop-color="#ffb7c8"/><stop offset="0.94" stop-color="#ffb1c1"/><stop offset="1" stop-color="#ffaaba"/></linearGradient>
<linearGradient id="z25" x1="0" y1="0" x2="1" y2="0"><stop offset="0" stop-color="#abeaff"/><stop offset="0.06" stop-color="#b4e9ff"/><stop offset="0.12" stop-color="#bde9ff"/><stop offset="0.18" stop-color="#c7e9ff"/><stop offset="0.23" stop-color="#d0e9ff"/><stop offset="0.29" stop-color="#dae9ff"/><stop offset="0.35" stop-color="#e4e8ff"/><stop offset="0.41" stop-color="#eee8ff"/><stop offset="0.47" stop-color="#f8e8ff"/><stop offset="0.53" stop-color="#ffe5fc"/><stop offset="0.59" stop-color="#ffdcf2"/><stop offset="0.65" stop-color="#ffd3e9"/><stop offset="0.7" stop-color="#ffcbe0"/><stop offset="0.76" stop-color="#ffc3d8"/><stop offset="0.82" stop-color="#ffbcd0"/><stop offset="0.88" stop-color="#ffb5c9"/><stop offset="0.94" stop-color="#ffafc2"/><stop offset="1" stop-color="#ffa8bb"/></linearGradient>
<linearGradient id="z26" x1="0" y1="0" x2="1" y2="0"><stop offset="0" stop-color="#abe7ff"/><stop offset="0.06" stop-color="#b4e7ff"/><stop offset="0.12" stop-color="#bde6ff"/><stop offset="0.18" stop-color="#c7e6ff"/><stop offset="0.23" stop-color="#d0e6ff"/><stop offset="0.29" stop-color="#dae6ff"/><stop offset="0.35" stop-color="#e4e5ff"/><stop offset="0.41" stop-color="#eee5ff"/><stop offset="0.47" stop-color="#f8e5ff"/><stop offset="0.53" stop-color="#ffe2fc"/><stop offset="0.59" stop-color="#ffd9f2"/><stop offset="0.65" stop-color="#ffd1e9"/><stop offset="0.7" stop-color="#ffc9e0"/><stop offset="0.76" stop-color="#ffc1d8"/><stop offset="0.82" stop-color="#ffbad0"/><stop offset="0.88" stop-color="#ffb3c9"/><stop offset="0.94" stop-color="#ffadc2"/><stop offset="1" stop-color="#ffa6bb"/></linearGradient>
<linearGradient id="z27" x1="0" y1="0" x2="1" y2="0"><stop offset="0" stop-color="#abe4ff"/><stop offset="0.06" stop-color="#b4e4ff"/><stop offset="0.12" stop-color="#bde4ff"/><stop offset="0.18" stop-color="#c7e3ff"/><stop offset="0.23" stop-color="#d0e3ff"/><stop offset="0.29" stop-color="#dae3ff"/><stop offset="0.35" stop-color="#e3e3ff"/><stop offset="0.41" stop-color="#ede2ff"/><stop offset="0.47" stop-color="#f7e2ff"/><stop offset="0.53" stop-color="#ffdffc"/><stop offset="0.59" stop-color="#ffd6f3"/><stop offset="0.65" stop-color="#ffcee9"/><stop offset="0.7" stop-color="#ffc6e1"/><stop offset="0.76" stop-color="#ffbfd8"/><stop offset="0.82" stop-color="#ffb8d1"/><stop offset="0.88" stop-color="#ffb1c9"/><stop offset="0.94" stop-color="#ffaac2"/><stop offset="1" stop-color="#ffa4bb"/></linearGradient>
<linearGradient id="z28" x1="0" y1="0" x2="1" y2="0"><stop offset="0" stop-color="#abe1ff"/><stop offset="0.06" stop-color="#b4e1ff"/><stop offset="0.12" stop-color="#bee1ff"/><stop offset="0.18" stop-color="#c7e0ff"/><stop offset="0.23" stop-color="#d0e0ff"/><stop offset="0.29" stop-color="#dae0ff"/><stop offset="0.35" stop-color="#e3e0ff"/><stop offset="0.41" stop-color="#eddfff"/><stop offset="0.47" stop-color="#f7dfff"/><stop offset="0.53" stop-color="#ffddfd"/><stop offset="0.59" stop-color="#ffd4f3"/><stop offset="0.65" stop-color="#ffccea"/><stop offset="0.7" stop-color="#ffc4e1"/><stop offset="0.76" stop-color="#ffbcd9"/><stop offset="0.82" stop-color="#ffb5d1"/><stop offset="0.88" stop-color="#ffafca"/><stop offset="0.94" stop-color="#ffa8c3"/><stop offset="1" stop-color="#ffa2bc"/></linearGradient>
<linearGradient id="z29" x1="0" y1="0" x2="1" y2="0"><stop offset="0" stop-color="#acdeff"/><stop offset="0.06" stop-color="#b5deff"/><stop offset="0.12" stop-color="#bedeff"/><stop offset="0.18" stop-color="#c7deff"/><stop offset="0.23" stop-color="#d0ddff"/><stop offset="0.29" stop-color="#daddff"/><stop offset="0.35" stop-color="#e3ddff"/><stop offset="0.41" stop-color="#eddcff"/><stop offset="0.47" stop-color="#f7dcff"/><stop offset="0.53" stop-color="#ffdafd"/><stop offset="0.59" stop-color="#ffd1f3"/><stop offset="0.65" stop-color="#ffc9ea"/><stop offset="0.7" stop-color="#ffc1e1"/><stop offset="0.76" stop-color="#ffbad9"/><stop offset="0.82" stop-color="#ffb3d1"/><stop offset="0.88" stop-color="#ffadca"/><stop offset="0.94" stop-color="#ffa6c3"/><stop offset="1" stop-color="#ffa0bc"/></linearGradient>
<linearGradient id="z30" x1="0" y1="0" x2="1" y2="0"><stop offset="0" stop-color="#acdcff"/><stop offset="0.06" stop-color="#b5dbff"/><stop offset="0.12" stop-color="#bedbff"/><stop offset="0.18" stop-color="#c7dbff"/><stop offset="0.23" stop-color="#d0dbff"/><stop offset="0.29" stop-color="#dadaff"/><stop offset="0.35" stop-color="#e3daff"/><stop offset="0.41" stop-color="#eddaff"/><stop offset="0.47" stop-color="#f7d9ff"/><stop offset="0.53" stop-color="#ffd7fd"/><stop offset="0.59" stop-color="#ffcff3"/><stop offset="0.65" stop-color="#ffc7ea"/><stop offset="0.7" stop-color="#ffbfe2"/><stop offset="0.76" stop-color="#ffb8d9"/><stop offset="0.82" stop-color="#ffb1d2"/><stop offset="0.88" stop-color="#ffaaca"/><stop offset="0.94" stop-color="#ffa4c3"/><stop offset="1" stop-color="#ff9ebd"/></linearGradient>
<linearGradient id="z31" x1="0" y1="0" x2="1" y2="0"><stop offset="0" stop-color="#acd9ff"/><stop offset="0.06" stop-color="#b5d9ff"/><stop offset="0.12" stop-color="#bed8ff"/><stop offset="0.18" stop-color="#c7d8ff"/><stop offset="0.23" stop-color="#d0d8ff"/><stop offset="0.29" stop-color="#dad7ff"/><stop offset="0.35" stop-color="#e3d7ff"/><stop offset="0.41" stop-color="#edd7ff"/><stop offset="0.47" stop-color="#f7d6ff"/><stop offset="0.53" stop-color="#ffd5fd"/><stop offset="0.59" stop-color="#ffccf4"/><stop offset="0.65" stop-color="#ffc4ea"/><stop offset="0.7" stop-color="#ffbde2"/><stop offset="0.76" stop-color="#ffb5da"/><stop offset="0.82" stop-color="#ffafd2"/><stop offset="0.88" stop-color="#ffa8cb"/><stop offset="0.94" stop-color="#ffa2c4"/><stop offset="1" stop-color="#ff9cbd"/></linearGradient>
<linearGradient id="z32" x1="0" y1="0" x2="1" y2="0"><stop offset="0" stop-color="#acd6ff"/><stop offset="0.06" stop-color="#b5d6ff"/><stop offset="0.12" stop-color="#bed6ff"/><stop offset="0.18" stop-color="#c7d5ff"/><stop offset="0.23" stop-color="#d0d5ff"/><stop offset="0.29" stop-color="#dad5ff"/><stop offset="0.35" stop-color="#e3d4ff"/><stop offset="0.41" stop-color="#edd4ff"/><stop offset="0.47" stop-color="#f7d3ff"/><stop offset="0.53" stop-color="#ffd2fd"/><stop offset="0.59" stop-color="#ffc9f4"/><stop offset="0.65" stop-color="#ffc2eb"/><stop offset="0.7" stop-color="#ffbae2"/><stop offset="0.76" stop-color="#ffb3da"/><stop offset="0.82" stop-color="#ffadd2"/><stop offset="0.88" stop-color="#ffa6cb"/><stop offset="0.94" stop-color="#ffa0c4"/><stop offset="1" stop-color="#ff9abd"/></linearGradient>
<linearGradient id="z33" x1="0" y1="0" x2="1" y2="0"><stop offset="0" stop-color="#acd4ff"/><stop offset="0.06" stop-color="#b5d3ff"/><stop offset="0.12" stop-color="#bed3ff"/><stop offset="0.18" stop-color="#c7d3ff"/><stop offset="0.23" stop-color="#d0d2ff"/><stop offset="0.29" stop-color="#dad2ff"/><stop offset="0.35" stop-color="#e3d1ff"/><stop offset="0.41" stop-color="#edd1ff"/><stop offset="0.47" stop-color="#f6d1ff"/><stop offset="0.53" stop-color="#ffcffe"/><stop offset="0.59" stop-color="#ffc7f4"/><stop offset="0.65" stop-color="#ffbfeb"/><stop offset="0.7" stop-color="#ffb8e2"/><stop offset="0.76" stop-color="#ffb1da"/><stop offset="0.82" stop-color="#ffaad3"/><stop offset="0.88" stop-color="#ffa4cb"/><stop offset="0.94" stop-color="#ff9ec5"/><stop offset="1" stop-color="#ff98be"/></linearGradient>
<linearGradient id="z34" x1="0" y1="0" x2="1" y2="0"><stop offset="0" stop-color="#add1ff"/><stop offset="0.06" stop-color="#b5d1ff"/><stop offset="0.12" stop-color="#bed0ff"/><stop offset="0.18" stop-color="#c7d0ff"/><stop offset="0.23" stop-color="#d0d0ff"/><stop offset="0.29" stop-color="#d9cfff"/><stop offset="0.35" stop-color="#e3cfff"/><stop offset="0.41" stop-color="#ecceff"/><stop offset="0.47" stop-color="#f6ceff"/><stop offset="0.53" stop-color="#ffcdfe"/><stop offset="0.59" stop-color="#ffc4f4"/><stop offset="0.65" stop-color="#ffbdeb"/><stop offset="0.7" stop-color="#ffb6e3"/><stop offset="0.76" stop-color="#ffafdb"/><stop offset="0.82" stop-color="#ffa8d3"/><stop offset="0.88" stop-color="#ffa2cc"/><stop offset="0.94" stop-color="#ff9cc5"/><stop offset="1" stop-color="#ff96be"/></linearGradient>
<linearGradient id="z35" x1="0" y1="0" x2="1" y2="0"><stop offset="0" stop-color="#adceff"/><stop offset="0.06" stop-color="#b5ceff"/><stop offset="0.12" stop-color="#beceff"/><stop offset="0.18" stop-color="#c7cdff"/><stop offset="0.23" stop-color="#d0cdff"/><stop offset="0.29" stop-color="#d9ccff"/><stop offset="0.35" stop-color="#e3ccff"/><stop offset="0.41" stop-color="#ecccff"/><stop offset="0.47" stop-color="#f6cbff"/><stop offset="0.53" stop-color="#ffcafe"/><stop offset="0.59" stop-color="#ffc2f5"/><stop offset="0.65" stop-color="#ffbaec"/><stop offset="0.7" stop-color="#ffb3e3"/><stop offset="0.76" stop-color="#ffacdb"/><stop offset="0.82" stop-color="#ffa6d3"/><stop offset="0.88" stop-color="#ffa0cc"/><stop offset="0.94" stop-color="#ff9ac5"/><stop offset="1" stop-color="#ff94be"/></linearGradient>
<linearGradient id="z36" x1="0" y1="0" x2="1" y2="0"><stop offset="0" stop-color="#adcdff"/><stop offset="0.06" stop-color="#b5ccff"/><stop offset="0.12" stop-color="#beccff"/><stop offset="0.18" stop-color="#c7cbff"/><stop offset="0.23" stop-color="#d0cbff"/><stop offset="0.29" stop-color="#d9caff"/><stop offset="0.35" stop-color="#e3caff"/><stop offset="0.41" stop-color="#eccaff"/><stop offset="0.47" stop-color="#f6c9ff"/><stop offset="0.53" stop-color="#ffc8fe"/><stop offset="0.59" stop-color="#ffc0f5"/><stop offset="0.65" stop-color="#ffb9ec"/><stop offset="0.7" stop-color="#ffb2e3"/><stop offset="0.76" stop-color="#ffabdb"/><stop offset="0.82" stop-color="#ffa5d4"/><stop offset="0.88" stop-color="#ff9fcc"/><stop offset="0.94" stop-color="#ff99c6"/><stop offset="1" stop-color="#ff93bf"/></linearGradient>
<linearGradient id="bs" x1="0" y1="0" x2="0" y2="1"><stop offset="0" stop-color="#202020"/><stop offset="0.16" stop-color="#2a2a2a"/><stop offset="1" stop-color="#1e1e1e"/></linearGradient>
<linearGradient id="pb" x1="0" y1="0" x2="0" y2="1"><stop offset="0" stop-color="#848484"/><stop offset="0.55" stop-color="#6c6c6c"/><stop offset="1" stop-color="#5e5e5e"/></linearGradient>
<linearGradient id="nb" x1="0" y1="0" x2="0" y2="1"><stop offset="0" stop-color="#a4a4a4"/><stop offset="1" stop-color="#6c6c6c"/></linearGradient>
<linearGradient id="nb2" x1="0" y1="0" x2="0" y2="1"><stop offset="0" stop-color="#9c9c9c"/><stop offset="1" stop-color="#626262"/></linearGradient>
<linearGradient id="th" x1="0" y1="0" x2="0" y2="1"><stop offset="0" stop-color="#303030"/><stop offset="0.46" stop-color="#2b2b2b"/><stop offset="0.54" stop-color="#171717"/><stop offset="1" stop-color="#1a1a1a"/></linearGradient>
<clipPath id="tbc"><rect x="596" y="349.2" width="379.70000000000005" height="112.30000000000001"/></clipPath>
<linearGradient id="arw" x1="0" y1="0" x2="0" y2="1"><stop offset="0" stop-color="#c0c0c0"/><stop offset="1" stop-color="#8e8e8e"/></linearGradient>
</defs>
<rect x="0" y="0" width="1000" height="500" fill="#303030" />
<rect x="0" y="0" width="1000" height="23.8" fill="#222" />
<rect x="66" y="3.9" width="934" height="2.4" fill="url(#rb)" />
<rect x="0" y="0" width="66.5" height="10.6" fill="url(#logo)" />
<text x="4.8" y="8.7" font-size="9.8" fill="#fff" textLength="47" lengthAdjust="spacingAndGlyphs" font-weight="bold" >CalMAN</text>
<circle cx="60.5" cy="5.2" r="3.3" fill="#b80c0c"/>
<path d="M58.9 4.3h3.2l-1.6 2z" fill="#fff"/>
<rect x="0" y="12.5" width="10" height="11.3" fill="url(#gbtn)" rx="1.5"/>
<circle cx="4.6" cy="17.9" r="3.2" fill="#777" stroke="#bbb" stroke-width="0.6"/>
<path d="M3.6 16.2v3.4l2.8-1.7z" fill="#eee"/>
<rect x="10.6" y="12.5" width="20.3" height="11.3" fill="#474747" rx="1.5"/>
<text x="12.8" y="19.7" font-size="4.3" fill="#f4f4f4" textLength="16.4" lengthAdjust="spacingAndGlyphs" font-weight="bold" >History 1</text>
<rect x="31.2" y="12.5" width="12.8" height="11.3" fill="#454545" rx="1.5"/>
<circle cx="37.3" cy="18.6" r="2" fill="#3a3a3a" stroke="#555" stroke-width="0.5"/>
<rect x="791.2" y="12.4" width="52.2" height="11.4" fill="url(#dd)" rx="1"/>
<rect x="791.2" y="12.4" width="1.8" height="11.4" fill="#22cc22" />
<text x="794.8" y="16.9" font-size="4.1" fill="#fff" textLength="38.2" lengthAdjust="spacingAndGlyphs" font-weight="bold" >X-Rite i1Display Retail</text>
<text x="794.8" y="22.2" font-size="4.1" fill="#fff" textLength="17.3" lengthAdjust="spacingAndGlyphs" font-weight="bold" >LCD (LED)</text>
<path d="M837 17.6h3.4l-1.7 2.2z" fill="#fff"/>
<rect x="845.6" y="12.4" width="75.7" height="11.4" fill="url(#dd)" rx="1"/>
<rect x="845.6" y="12.4" width="1.8" height="11.4" fill="#22cc22" />
<text x="849.2" y="16.9" font-size="4.1" fill="#fff" textLength="62" lengthAdjust="spacingAndGlyphs" font-weight="bold" >CalMAN Client 3 Pattern Generator</text>
<path d="M914.9 17.6h3.4l-1.7 2.2z" fill="#fff"/>
<rect x="924" y="12.4" width="51.4" height="11.4" fill="url(#dd)" rx="1"/>
<rect x="924" y="12.4" width="1.8" height="11.4" fill="#d8d820" />
<text x="927.6" y="16.9" font-size="4.1" fill="#fff" textLength="38.5" lengthAdjust="spacingAndGlyphs" font-weight="bold" >Direct Display Control</text>
<path d="M969 17.6h3.4l-1.7 2.2z" fill="#fff"/>
<rect x="977.6" y="12.4" width="11.4" height="11.4" fill="url(#sb)" rx="1.5"/>
<circle cx="983.3" cy="18.1" r="2.3" fill="#999" stroke="#d8d8d8" stroke-width="0.5"/><circle cx="983.3" cy="18.1" r="0.8" fill="#555"/>
<rect x="989.8" y="12.4" width="10.2" height="11.4" fill="url(#sb)" rx="1.5"/>
<circle cx="995.6" cy="18.1" r="2.3" fill="#999" stroke="#d8d8d8" stroke-width="0.5"/><path d="M996.4 16.8v2.6l-1.9-1.3z" fill="#444"/>
<text x="4.6" y="50.9" font-size="23.3" fill="#f4f4f4" textLength="136.5" lengthAdjust="spacingAndGlyphs" >Color Gamut</text>
<text x="74.4" y="88.5" font-size="11.8" fill="#f0f0f0" textLength="64" lengthAdjust="spacingAndGlyphs"  stroke="#f0f0f0" stroke-width="0.4">dE Formula:</text>
<rect x="143.8" y="77.5" width="79.5" height="13.8" fill="url(#sel)" />
<text x="146.5" y="88.6" font-size="10.3" fill="#f4f4f4" textLength="21.2" lengthAdjust="spacingAndGlyphs"  stroke="#f4f4f4" stroke-width="0.22">2000</text>
<path d="M215.8 82.9h4.6l-2.3 2.7z" fill="#111"/>
<text x="112.5" y="106.7" font-size="9.6" fill="#e4e4e4" text-anchor="middle" textLength="47.5" lengthAdjust="spacingAndGlyphs"  stroke="#e4e4e4" stroke-width="0.22">DeltaE 2000</text>
<rect x="12" y="109.5" width="201" height="206.3" fill="#262626" />
<line x1="38.62" y1="109.5" x2="38.62" y2="315.8" stroke="#8c8c8c" stroke-width="1" />
<line x1="65.24" y1="109.5" x2="65.24" y2="315.8" stroke="#8c8c8c" stroke-width="1" />
<line x1="91.86" y1="109.5" x2="91.86" y2="315.8" stroke="#8c8c8c" stroke-width="1" />
<line x1="118.48" y1="109.5" x2="118.48" y2="315.8" stroke="#8c8c8c" stroke-width="1" />
<line x1="145.1" y1="109.5" x2="145.1" y2="315.8" stroke="#8c8c8c" stroke-width="1" />
<line x1="171.72" y1="109.5" x2="171.72" y2="315.8" stroke="#8c8c8c" stroke-width="1" />
<line x1="198.34" y1="109.5" x2="198.34" y2="315.8" stroke="#8c8c8c" stroke-width="1" />
<rect x="12" y="109.5" width="201" height="206.3" fill="none" stroke="#8c8c8c" stroke-width="1"/>
<line x1="12" y1="315.8" x2="12" y2="319" stroke="#8c8c8c" stroke-width="1" />
<text x="12" y="327.7" font-size="9.2" fill="#e4e4e4" text-anchor="middle" textLength="4.89" lengthAdjust="spacingAndGlyphs"  stroke="#e4e4e4" stroke-width="0.22">0</text>
<line x1="38.62" y1="315.8" x2="38.62" y2="319" stroke="#8c8c8c" stroke-width="1" />
<text x="38.62" y="327.7" font-size="9.2" fill="#e4e4e4" text-anchor="middle" textLength="4.89" lengthAdjust="spacingAndGlyphs"  stroke="#e4e4e4" stroke-width="0.22">2</text>
<line x1="65.24" y1="315.8" x2="65.24" y2="319" stroke="#8c8c8c" stroke-width="1" />
<text x="65.24" y="327.7" font-size="9.2" fill="#e4e4e4" text-anchor="middle" textLength="4.89" lengthAdjust="spacingAndGlyphs"  stroke="#e4e4e4" stroke-width="0.22">4</text>
<line x1="91.86" y1="315.8" x2="91.86" y2="319" stroke="#8c8c8c" stroke-width="1" />
<text x="91.86" y="327.7" font-size="9.2" fill="#e4e4e4" text-anchor="middle" textLength="4.89" lengthAdjust="spacingAndGlyphs"  stroke="#e4e4e4" stroke-width="0.22">6</text>
<line x1="118.48" y1="315.8" x2="118.48" y2="319" stroke="#8c8c8c" stroke-width="1" />
<text x="118.48" y="327.7" font-size="9.2" fill="#e4e4e4" text-anchor="middle" textLength="4.89" lengthAdjust="spacingAndGlyphs"  stroke="#e4e4e4" stroke-width="0.22">8</text>
<line x1="145.1" y1="315.8" x2="145.1" y2="319" stroke="#8c8c8c" stroke-width="1" />
<text x="145.1" y="327.7" font-size="9.2" fill="#e4e4e4" text-anchor="middle" textLength="9.77" lengthAdjust="spacingAndGlyphs"  stroke="#e4e4e4" stroke-width="0.22">10</text>
<line x1="171.72" y1="315.8" x2="171.72" y2="319" stroke="#8c8c8c" stroke-width="1" />
<text x="171.72" y="327.7" font-size="9.2" fill="#e4e4e4" text-anchor="middle" textLength="9.77" lengthAdjust="spacingAndGlyphs"  stroke="#e4e4e4" stroke-width="0.22">12</text>
<line x1="198.34" y1="315.8" x2="198.34" y2="319" stroke="#8c8c8c" stroke-width="1" />
<text x="198.34" y="327.7" font-size="9.2" fill="#e4e4e4" text-anchor="middle" textLength="9.77" lengthAdjust="spacingAndGlyphs"  stroke="#e4e4e4" stroke-width="0.22">14</text>
<rect x="11.7" y="111" width="27.52" height="20.4" fill="#0c0c0c" />
<rect x="12.1" y="111.7" width="26.32" height="19" fill="url(#b0)" />
<rect x="11.7" y="137.3" width="28.21" height="20.4" fill="#0c0c0c" />
<rect x="12.1" y="138" width="27.01" height="19" fill="url(#b1)" />
<rect x="11.7" y="163.3" width="31.39" height="20.4" fill="#0c0c0c" />
<rect x="12.1" y="164" width="30.19" height="19" fill="url(#b2)" />
<rect x="11.7" y="189" width="30.71" height="20.4" fill="#0c0c0c" />
<rect x="12.1" y="189.7" width="29.51" height="19" fill="url(#b3)" />
<rect x="11.7" y="214.6" width="37.83" height="20.4" fill="#0c0c0c" />
<rect x="12.1" y="215.3" width="36.63" height="19" fill="url(#b4)" />
<rect x="11.7" y="240.1" width="28.02" height="20.4" fill="#0c0c0c" />
<rect x="12.1" y="240.8" width="26.82" height="19" fill="url(#b5)" />
<rect x="11.7" y="266.3" width="45.08" height="20.4" fill="#0c0c0c" />
<rect x="12.1" y="267" width="43.88" height="19" fill="url(#b6)" />
<rect x="11.7" y="292.3" width="35.11" height="20.4" fill="#0c0c0c" />
<rect x="12.1" y="293" width="33.91" height="19" fill="url(#b7)" />
<text x="279.5" y="45.8" font-size="9.6" fill="#e4e4e4" text-anchor="middle" textLength="25.5" lengthAdjust="spacingAndGlyphs"  stroke="#e4e4e4" stroke-width="0.22">DeltaL</text>
<rect x="244" y="49" width="87" height="175.5" fill="#262626" />
<line x1="241.5" y1="49.25" x2="331" y2="49.25" stroke="#8c8c8c" stroke-width="1" />
<text x="240.6" y="52.55" font-size="9.2" fill="#e4e4e4" text-anchor="end" textLength="9.77" lengthAdjust="spacingAndGlyphs"  stroke="#e4e4e4" stroke-width="0.22">15</text>
<line x1="241.5" y1="78.5" x2="331" y2="78.5" stroke="#8c8c8c" stroke-width="1" />
<text x="240.6" y="81.8" font-size="9.2" fill="#e4e4e4" text-anchor="end" textLength="9.77" lengthAdjust="spacingAndGlyphs"  stroke="#e4e4e4" stroke-width="0.22">10</text>
<line x1="241.5" y1="107.75" x2="331" y2="107.75" stroke="#8c8c8c" stroke-width="1" />
<text x="240.6" y="111.05" font-size="9.2" fill="#e4e4e4" text-anchor="end" textLength="4.89" lengthAdjust="spacingAndGlyphs"  stroke="#e4e4e4" stroke-width="0.22">5</text>
<line x1="241.5" y1="137" x2="331" y2="137" stroke="#8c8c8c" stroke-width="1" />
<text x="240.6" y="140.3" font-size="9.2" fill="#e4e4e4" text-anchor="end" textLength="4.89" lengthAdjust="spacingAndGlyphs"  stroke="#e4e4e4" stroke-width="0.22">0</text>
<line x1="241.5" y1="166.25" x2="331" y2="166.25" stroke="#8c8c8c" stroke-width="1" />
<text x="240.6" y="169.55" font-size="9.2" fill="#e4e4e4" text-anchor="end" textLength="7.81" lengthAdjust="spacingAndGlyphs"  stroke="#e4e4e4" stroke-width="0.22">-5</text>
<line x1="241.5" y1="195.5" x2="331" y2="195.5" stroke="#8c8c8c" stroke-width="1" />
<text x="240.6" y="198.8" font-size="9.2" fill="#e4e4e4" text-anchor="end" textLength="12.7" lengthAdjust="spacingAndGlyphs"  stroke="#e4e4e4" stroke-width="0.22">-10</text>
<line x1="241.5" y1="224.75" x2="331" y2="224.75" stroke="#8c8c8c" stroke-width="1" />
<text x="240.6" y="228.05" font-size="9.2" fill="#e4e4e4" text-anchor="end" textLength="12.7" lengthAdjust="spacingAndGlyphs"  stroke="#e4e4e4" stroke-width="0.22">-15</text>
<line x1="244" y1="49" x2="244" y2="226.5" stroke="#8c8c8c" stroke-width="1" />
<line x1="331" y1="49" x2="331" y2="226.5" stroke="#8c8c8c" stroke-width="1" />
<text x="287.5" y="233.6" font-size="9.6" fill="#e4e4e4" text-anchor="middle" textLength="24.5" lengthAdjust="spacingAndGlyphs"  stroke="#e4e4e4" stroke-width="0.22">100W</text>
<rect x="252.5" y="136.1" width="69.5" height="1.6" fill="#161616" />
<text x="397.9" y="45.8" font-size="9.6" fill="#e4e4e4" text-anchor="middle" textLength="26.8" lengthAdjust="spacingAndGlyphs"  stroke="#e4e4e4" stroke-width="0.22">DeltaC</text>
<rect x="362.4" y="49" width="87" height="175.5" fill="#262626" />
<line x1="359.9" y1="49.25" x2="449.4" y2="49.25" stroke="#8c8c8c" stroke-width="1" />
<text x="359" y="52.55" font-size="9.2" fill="#e4e4e4" text-anchor="end" textLength="9.77" lengthAdjust="spacingAndGlyphs"  stroke="#e4e4e4" stroke-width="0.22">15</text>
<line x1="359.9" y1="78.5" x2="449.4" y2="78.5" stroke="#8c8c8c" stroke-width="1" />
<text x="359" y="81.8" font-size="9.2" fill="#e4e4e4" text-anchor="end" textLength="9.77" lengthAdjust="spacingAndGlyphs"  stroke="#e4e4e4" stroke-width="0.22">10</text>
<line x1="359.9" y1="107.75" x2="449.4" y2="107.75" stroke="#8c8c8c" stroke-width="1" />
<text x="359" y="111.05" font-size="9.2" fill="#e4e4e4" text-anchor="end" textLength="4.89" lengthAdjust="spacingAndGlyphs"  stroke="#e4e4e4" stroke-width="0.22">5</text>
<line x1="359.9" y1="137" x2="449.4" y2="137" stroke="#8c8c8c" stroke-width="1" />
<text x="359" y="140.3" font-size="9.2" fill="#e4e4e4" text-anchor="end" textLength="4.89" lengthAdjust="spacingAndGlyphs"  stroke="#e4e4e4" stroke-width="0.22">0</text>
<line x1="359.9" y1="166.25" x2="449.4" y2="166.25" stroke="#8c8c8c" stroke-width="1" />
<text x="359" y="169.55" font-size="9.2" fill="#e4e4e4" text-anchor="end" textLength="7.81" lengthAdjust="spacingAndGlyphs"  stroke="#e4e4e4" stroke-width="0.22">-5</text>
<line x1="359.9" y1="195.5" x2="449.4" y2="195.5" stroke="#8c8c8c" stroke-width="1" />
<text x="359" y="198.8" font-size="9.2" fill="#e4e4e4" text-anchor="end" textLength="12.7" lengthAdjust="spacingAndGlyphs"  stroke="#e4e4e4" stroke-width="0.22">-10</text>
<line x1="359.9" y1="224.75" x2="449.4" y2="224.75" stroke="#8c8c8c" stroke-width="1" />
<text x="359" y="228.05" font-size="9.2" fill="#e4e4e4" text-anchor="end" textLength="12.7" lengthAdjust="spacingAndGlyphs"  stroke="#e4e4e4" stroke-width="0.22">-15</text>
<line x1="362.4" y1="49" x2="362.4" y2="226.5" stroke="#8c8c8c" stroke-width="1" />
<line x1="449.4" y1="49" x2="449.4" y2="226.5" stroke="#8c8c8c" stroke-width="1" />
<text x="405.9" y="233.6" font-size="9.6" fill="#e4e4e4" text-anchor="middle" textLength="24.5" lengthAdjust="spacingAndGlyphs"  stroke="#e4e4e4" stroke-width="0.22">100W</text>
<rect x="371" y="123.72" width="70" height="14.18" fill="#0a0a0a" rx="1"/>
<rect x="371.7" y="124.42" width="68.4" height="12.58" fill="url(#dcb)" rx="0.8"/>
<text x="516" y="45.8" font-size="9.6" fill="#e4e4e4" text-anchor="middle" textLength="27.2" lengthAdjust="spacingAndGlyphs"  stroke="#e4e4e4" stroke-width="0.22">DeltaH</text>
<rect x="480.5" y="49" width="87" height="175.5" fill="#262626" />
<line x1="478" y1="49.25" x2="567.5" y2="49.25" stroke="#8c8c8c" stroke-width="1" />
<text x="477.1" y="52.55" font-size="9.2" fill="#e4e4e4" text-anchor="end" textLength="9.77" lengthAdjust="spacingAndGlyphs"  stroke="#e4e4e4" stroke-width="0.22">15</text>
<line x1="478" y1="78.5" x2="567.5" y2="78.5" stroke="#8c8c8c" stroke-width="1" />
<text x="477.1" y="81.8" font-size="9.2" fill="#e4e4e4" text-anchor="end" textLength="9.77" lengthAdjust="spacingAndGlyphs"  stroke="#e4e4e4" stroke-width="0.22">10</text>
<line x1="478" y1="107.75" x2="567.5" y2="107.75" stroke="#8c8c8c" stroke-width="1" />
<text x="477.1" y="111.05" font-size="9.2" fill="#e4e4e4" text-anchor="end" textLength="4.89" lengthAdjust="spacingAndGlyphs"  stroke="#e4e4e4" stroke-width="0.22">5</text>
<line x1="478" y1="137" x2="567.5" y2="137" stroke="#8c8c8c" stroke-width="1" />
<text x="477.1" y="140.3" font-size="9.2" fill="#e4e4e4" text-anchor="end" textLength="4.89" lengthAdjust="spacingAndGlyphs"  stroke="#e4e4e4" stroke-width="0.22">0</text>
<line x1="478" y1="166.25" x2="567.5" y2="166.25" stroke="#8c8c8c" stroke-width="1" />
<text x="477.1" y="169.55" font-size="9.2" fill="#e4e4e4" text-anchor="end" textLength="7.81" lengthAdjust="spacingAndGlyphs"  stroke="#e4e4e4" stroke-width="0.22">-5</text>
<line x1="478" y1="195.5" x2="567.5" y2="195.5" stroke="#8c8c8c" stroke-width="1" />
<text x="477.1" y="198.8" font-size="9.2" fill="#e4e4e4" text-anchor="end" textLength="12.7" lengthAdjust="spacingAndGlyphs"  stroke="#e4e4e4" stroke-width="0.22">-10</text>
<line x1="478" y1="224.75" x2="567.5" y2="224.75" stroke="#8c8c8c" stroke-width="1" />
<text x="477.1" y="228.05" font-size="9.2" fill="#e4e4e4" text-anchor="end" textLength="12.7" lengthAdjust="spacingAndGlyphs"  stroke="#e4e4e4" stroke-width="0.22">-15</text>
<line x1="480.5" y1="49" x2="480.5" y2="226.5" stroke="#8c8c8c" stroke-width="1" />
<line x1="567.5" y1="49" x2="567.5" y2="226.5" stroke="#8c8c8c" stroke-width="1" />
<text x="524" y="233.6" font-size="9.6" fill="#e4e4e4" text-anchor="middle" textLength="24.5" lengthAdjust="spacingAndGlyphs"  stroke="#e4e4e4" stroke-width="0.22">100W</text>
<rect x="489" y="136.1" width="69.5" height="1.6" fill="#161616" />
<rect x="224.5" y="242.5" width="354.5" height="90" fill="#000" />
<rect x="234.5" y="246.5" width="37.6" height="74" fill="#f4f4f4" opacity="0.8"/>
<rect x="235.1" y="247.1" width="36.4" height="36.6" fill="#c3c5c6" />
<rect x="235.1" y="283.3" width="36.4" height="36.6" fill="#bebebe" />
<text x="253.3" y="328.8" font-size="7.9" fill="#fff" text-anchor="middle" textLength="19.8" lengthAdjust="spacingAndGlyphs" font-weight="bold" >White</text>
<rect x="278" y="246.5" width="37.6" height="74" fill="#f4f4f4" opacity="0.8"/>
<rect x="278.6" y="247.1" width="36.4" height="36.6" fill="#c4141a" />
<rect x="278.6" y="283.3" width="36.4" height="36.6" fill="#c00000" />
<text x="296.8" y="328.8" font-size="7.9" fill="#fff" text-anchor="middle" textLength="12.6" lengthAdjust="spacingAndGlyphs" font-weight="bold" >Red</text>
<rect x="321.6" y="246.5" width="37.6" height="74" fill="#f4f4f4" opacity="0.8"/>
<rect x="322.2" y="247.1" width="36.4" height="36.6" fill="#18c020" />
<rect x="322.2" y="283.3" width="36.4" height="36.6" fill="#00c000" />
<text x="340.4" y="328.8" font-size="7.9" fill="#fff" text-anchor="middle" textLength="20.2" lengthAdjust="spacingAndGlyphs" font-weight="bold" >Green</text>
<rect x="365" y="246.5" width="37.6" height="74" fill="#f4f4f4" opacity="0.8"/>
<rect x="365.6" y="247.1" width="36.4" height="36.6" fill="#1c18c4" />
<rect x="365.6" y="283.3" width="36.4" height="36.6" fill="#0000c0" />
<text x="383.8" y="328.8" font-size="7.9" fill="#fff" text-anchor="middle" textLength="14.2" lengthAdjust="spacingAndGlyphs" font-weight="bold" >Blue</text>
<rect x="408.4" y="246.5" width="37.6" height="74" fill="#f4f4f4" opacity="0.8"/>
<rect x="409" y="247.1" width="36.4" height="36.6" fill="#18c4c4" />
<rect x="409" y="283.3" width="36.4" height="36.6" fill="#00c0c0" />
<text x="427.2" y="328.8" font-size="7.9" fill="#fff" text-anchor="middle" textLength="16.4" lengthAdjust="spacingAndGlyphs" font-weight="bold" >Cyan</text>
<rect x="451.5" y="246.5" width="37.6" height="74" fill="#f4f4f4" opacity="0.8"/>
<rect x="452.1" y="247.1" width="36.4" height="36.6" fill="#c418c4" />
<rect x="452.1" y="283.3" width="36.4" height="36.6" fill="#c000c0" />
<text x="470.3" y="328.8" font-size="7.9" fill="#fff" text-anchor="middle" textLength="29.6" lengthAdjust="spacingAndGlyphs" font-weight="bold" >Magenta</text>
<rect x="495" y="246.5" width="37.6" height="74" fill="#f4f4f4" opacity="0.8"/>
<rect x="495.6" y="247.1" width="36.4" height="36.6" fill="#c4c41c" />
<rect x="495.6" y="283.3" width="36.4" height="36.6" fill="#c0c000" />
<text x="513.8" y="328.8" font-size="7.9" fill="#fff" text-anchor="middle" textLength="20.8" lengthAdjust="spacingAndGlyphs" font-weight="bold" >Yellow</text>
<rect x="538.4" y="246.5" width="37.6" height="74" fill="#f4f4f4" opacity="0.8"/>
<rect x="539" y="247.1" width="36.4" height="36.6" fill="#f8fafc" />
<rect x="539" y="283.3" width="36.4" height="36.6" fill="#ffffff" />
<text x="557.2" y="328.8" font-size="7.9" fill="#fff" text-anchor="middle" textLength="18.8" lengthAdjust="spacingAndGlyphs" font-weight="bold" >100W</text>
<text transform="translate(232.2 272.6) rotate(-90)" font-size="6.7" fill="#fff" font-weight="bold">Actual</text>
<text transform="translate(232.2 313.9) rotate(-90)" font-size="6.7" fill="#fff" font-weight="bold">Target</text>
<rect x="583.6" y="30.6" width="416" height="310.8" fill="#1c1c1c"/>
<rect x="586.3" y="33.3" width="410.4" height="305.4" fill="#303030" stroke="#c9c912" stroke-width="4.4"/>
<rect x="588.9" y="35.9" width="405.2" height="300.2" fill="none" stroke="#202020" stroke-width="0.8"/>
<text x="791.5" y="45.6" font-size="9.8" fill="#e4e4e4" text-anchor="middle" textLength="51" lengthAdjust="spacingAndGlyphs"  stroke="#e4e4e4" stroke-width="0.22">CIE 1976 u'v'</text>
<rect x="610" y="48" width="383" height="273.5" fill="#262626" />
<g clip-path="url(#plotc)"><g clip-path="url(#loc)">
<rect x="623.03" y="54" width="52.66" height="2.6" fill="url(#r0)" />
<rect x="617.92" y="56" width="79.71" height="2.6" fill="url(#r1)" />
<rect x="615.09" y="58" width="102.33" height="2.6" fill="url(#r2)" />
<rect x="613.27" y="60" width="123.3" height="2.6" fill="url(#r3)" />
<rect x="612.02" y="62" width="143.41" height="2.6" fill="url(#r4)" />
<rect x="611.08" y="64" width="163.1" height="2.6" fill="url(#r5)" />
<rect x="610.36" y="66" width="182.58" height="2.6" fill="url(#r6)" />
<rect x="610" y="68" width="201.74" height="2.6" fill="url(#r7)" />
<rect x="610" y="70" width="220.51" height="2.6" fill="url(#r8)" />
<rect x="610" y="72" width="239.21" height="2.6" fill="url(#r9)" />
<rect x="610" y="74" width="257.98" height="2.6" fill="url(#r10)" />
<rect x="610" y="76" width="276.76" height="2.6" fill="url(#r11)" />
<rect x="610" y="78" width="295.61" height="2.6" fill="url(#r12)" />
<rect x="610" y="80" width="314.41" height="2.6" fill="url(#r13)" />
<rect x="610" y="82" width="333.13" height="2.6" fill="url(#r14)" />
<rect x="610.07" y="84" width="351.88" height="2.6" fill="url(#r15)" />
<rect x="610.38" y="86" width="370.31" height="2.6" fill="url(#r16)" />
<rect x="610.7" y="88" width="382.3" height="2.6" fill="url(#r17)" />
<rect x="611.15" y="90" width="381.85" height="2.6" fill="url(#r18)" />
<rect x="611.6" y="92" width="381.4" height="2.6" fill="url(#r19)" />
<rect x="612.05" y="94" width="380.95" height="2.6" fill="url(#r20)" />
<rect x="612.55" y="96" width="380.45" height="2.6" fill="url(#r21)" />
<rect x="613.12" y="98" width="379.88" height="2.6" fill="url(#r22)" />
<rect x="613.69" y="100" width="379.31" height="2.6" fill="url(#r23)" />
<rect x="614.26" y="102" width="378.74" height="2.6" fill="url(#r24)" />
<rect x="614.87" y="104" width="378.13" height="2.6" fill="url(#r25)" />
<rect x="615.55" y="106" width="377.45" height="2.6" fill="url(#r26)" />
<rect x="616.22" y="108" width="375.2" height="2.6" fill="url(#r27)" />
<rect x="616.9" y="110" width="372.43" height="2.6" fill="url(#r28)" />
<rect x="617.57" y="112" width="369.66" height="2.6" fill="url(#r29)" />
<rect x="618.31" y="114" width="366.82" height="2.6" fill="url(#r30)" />
<rect x="619.07" y="116" width="363.96" height="2.6" fill="url(#r31)" />
<rect x="619.84" y="118" width="361.1" height="2.6" fill="url(#r32)" />
<rect x="620.6" y="120" width="358.24" height="2.6" fill="url(#r33)" />
<rect x="621.36" y="122" width="355.38" height="2.6" fill="url(#r34)" />
<rect x="622.17" y="124" width="352.47" height="2.6" fill="url(#r35)" />
<rect x="623.01" y="126" width="349.53" height="2.6" fill="url(#r36)" />
<rect x="623.86" y="128" width="346.6" height="2.6" fill="url(#r37)" />
<rect x="624.7" y="130" width="343.66" height="2.6" fill="url(#r38)" />
<rect x="625.54" y="132" width="340.72" height="2.6" fill="url(#r39)" />
<rect x="626.38" y="134" width="337.78" height="2.6" fill="url(#r40)" />
<rect x="627.29" y="136" width="334.78" height="2.6" fill="url(#r41)" />
<rect x="628.2" y="138" width="331.77" height="2.6" fill="url(#r42)" />
<rect x="629.11" y="140" width="328.76" height="2.6" fill="url(#r43)" />
<rect x="630.02" y="142" width="325.75" height="2.6" fill="url(#r44)" />
<rect x="630.93" y="144" width="322.74" height="2.6" fill="url(#r45)" />
<rect x="631.84" y="146" width="319.73" height="2.6" fill="url(#r46)" />
<rect x="632.82" y="148" width="316.66" height="2.6" fill="url(#r47)" />
<rect x="633.81" y="150" width="313.57" height="2.6" fill="url(#r48)" />
<rect x="634.8" y="152" width="310.48" height="2.6" fill="url(#r49)" />
<rect x="635.79" y="154" width="307.39" height="2.6" fill="url(#r50)" />
<rect x="636.78" y="156" width="304.3" height="2.6" fill="url(#r51)" />
<rect x="637.78" y="158" width="301.21" height="2.6" fill="url(#r52)" />
<rect x="638.81" y="160" width="298.08" height="2.6" fill="url(#r53)" />
<rect x="639.9" y="162" width="294.89" height="2.6" fill="url(#r54)" />
<rect x="640.99" y="164" width="291.7" height="2.6" fill="url(#r55)" />
<rect x="642.08" y="166" width="288.51" height="2.6" fill="url(#r56)" />
<rect x="643.17" y="168" width="285.33" height="2.6" fill="url(#r57)" />
<rect x="644.26" y="170" width="282.14" height="2.6" fill="url(#r58)" />
<rect x="645.36" y="172" width="278.95" height="2.6" fill="url(#r59)" />
<rect x="646.53" y="174" width="275.68" height="2.6" fill="url(#r60)" />
<rect x="647.72" y="176" width="272.4" height="2.6" fill="url(#r61)" />
<rect x="648.9" y="178" width="269.11" height="2.6" fill="url(#r62)" />
<rect x="650.08" y="180" width="265.83" height="2.6" fill="url(#r63)" />
<rect x="651.27" y="182" width="262.55" height="2.6" fill="url(#r64)" />
<rect x="652.45" y="184" width="259.27" height="2.6" fill="url(#r65)" />
<rect x="653.66" y="186" width="255.97" height="2.6" fill="url(#r66)" />
<rect x="654.91" y="188" width="252.62" height="2.6" fill="url(#r67)" />
<rect x="656.16" y="190" width="249.27" height="2.6" fill="url(#r68)" />
<rect x="657.41" y="192" width="245.92" height="2.6" fill="url(#r69)" />
<rect x="658.66" y="194" width="242.57" height="2.6" fill="url(#r70)" />
<rect x="659.91" y="196" width="239.22" height="2.6" fill="url(#r71)" />
<rect x="661.16" y="198" width="235.88" height="2.6" fill="url(#r72)" />
<rect x="662.46" y="200" width="232.49" height="2.6" fill="url(#r73)" />
<rect x="663.76" y="202" width="229.09" height="2.6" fill="url(#r74)" />
<rect x="665.06" y="204" width="225.69" height="2.6" fill="url(#r75)" />
<rect x="666.36" y="206" width="222.29" height="2.6" fill="url(#r76)" />
<rect x="667.66" y="208" width="218.9" height="2.6" fill="url(#r77)" />
<rect x="668.96" y="210" width="215.5" height="2.6" fill="url(#r78)" />
<rect x="670.29" y="212" width="212.07" height="2.6" fill="url(#r79)" />
<rect x="671.65" y="214" width="208.61" height="2.6" fill="url(#r80)" />
<rect x="673.01" y="216" width="205.15" height="2.6" fill="url(#r81)" />
<rect x="674.37" y="218" width="201.69" height="2.6" fill="url(#r82)" />
<rect x="675.73" y="220" width="198.23" height="2.6" fill="url(#r83)" />
<rect x="677.09" y="222" width="194.78" height="2.6" fill="url(#r84)" />
<rect x="678.5" y="224" width="191.27" height="2.6" fill="url(#r85)" />
<rect x="679.94" y="226" width="187.74" height="2.6" fill="url(#r86)" />
<rect x="681.38" y="228" width="184.2" height="2.6" fill="url(#r87)" />
<rect x="682.81" y="230" width="180.66" height="2.6" fill="url(#r88)" />
<rect x="684.25" y="232" width="177.13" height="2.6" fill="url(#r89)" />
<rect x="685.7" y="234" width="173.58" height="2.6" fill="url(#r90)" />
<rect x="687.22" y="236" width="169.96" height="2.6" fill="url(#r91)" />
<rect x="688.75" y="238" width="166.34" height="2.6" fill="url(#r92)" />
<rect x="690.27" y="240" width="162.72" height="2.6" fill="url(#r93)" />
<rect x="691.8" y="242" width="159.1" height="2.6" fill="url(#r94)" />
<rect x="693.33" y="244" width="155.47" height="2.6" fill="url(#r95)" />
<rect x="694.94" y="246" width="151.75" height="2.6" fill="url(#r96)" />
<rect x="696.56" y="248" width="148.04" height="2.6" fill="url(#r97)" />
<rect x="698.17" y="250" width="144.33" height="2.6" fill="url(#r98)" />
<rect x="699.79" y="252" width="140.62" height="2.6" fill="url(#r99)" />
<rect x="701.46" y="254" width="136.85" height="2.6" fill="url(#r100)" />
<rect x="703.17" y="256" width="133.04" height="2.6" fill="url(#r101)" />
<rect x="704.89" y="258" width="129.23" height="2.6" fill="url(#r102)" />
<rect x="706.6" y="260" width="125.42" height="2.6" fill="url(#r103)" />
<rect x="708.38" y="262" width="121.54" height="2.6" fill="url(#r104)" />
<rect x="710.19" y="264" width="117.63" height="2.6" fill="url(#r105)" />
<rect x="712.01" y="266" width="113.72" height="2.6" fill="url(#r106)" />
<rect x="713.85" y="268" width="109.78" height="2.6" fill="url(#r107)" />
<rect x="715.79" y="270" width="105.74" height="2.6" fill="url(#r108)" />
<rect x="717.73" y="272" width="101.7" height="2.6" fill="url(#r109)" />
<rect x="719.73" y="274" width="97.6" height="2.6" fill="url(#r110)" />
<rect x="721.82" y="276" width="93.41" height="2.6" fill="url(#r111)" />
<rect x="723.93" y="278" width="89.21" height="2.6" fill="url(#r112)" />
<rect x="726.15" y="280" width="84.89" height="2.6" fill="url(#r113)" />
<rect x="728.39" y="282" width="80.55" height="2.6" fill="url(#r114)" />
<rect x="730.73" y="284" width="76.12" height="2.6" fill="url(#r115)" />
<rect x="733.09" y="286" width="71.66" height="2.6" fill="url(#r116)" />
<rect x="735.52" y="288" width="67.13" height="2.6" fill="url(#r117)" />
<rect x="738.01" y="290" width="62.54" height="2.6" fill="url(#r118)" />
<rect x="740.55" y="292" width="57.91" height="2.6" fill="url(#r119)" />
<rect x="743.13" y="294" width="53.23" height="2.6" fill="url(#r120)" />
<rect x="745.74" y="296" width="48.52" height="2.6" fill="url(#r121)" />
<rect x="748.35" y="298" width="43.81" height="2.6" fill="url(#r122)" />
<rect x="750.97" y="300" width="39.1" height="2.6" fill="url(#r123)" />
<rect x="753.58" y="302" width="34.39" height="2.6" fill="url(#r124)" />
<rect x="756.18" y="304" width="29.69" height="2.6" fill="url(#r125)" />
<rect x="758.74" y="306" width="25.04" height="2.6" fill="url(#r126)" />
<rect x="761.25" y="308" width="20.43" height="2.6" fill="url(#r127)" />
<rect x="763.85" y="310" width="15.73" height="2.6" fill="url(#r128)" />
<rect x="766.6" y="312" width="10.88" height="2.6" fill="url(#r129)" />
<rect x="769.78" y="314" width="5.6" height="2.6" fill="url(#r130)" />
<path fill-rule="evenodd" fill="#000" opacity="0.43" d="M605 43H998V326.5H605Z M887.51 85.76L690.51 66.7L723.03 240.88Z"/>
</g></g>
<rect x="610" y="48" width="383" height="273.5" fill="none" stroke="#7e7e7e" stroke-width="1"/>
<line x1="606" y1="321.5" x2="610" y2="321.5" stroke="#aaa" stroke-width="1" />
<text x="605.8" y="324.8" font-size="9.2" fill="#e4e4e4" text-anchor="end" textLength="4.89" lengthAdjust="spacingAndGlyphs"  stroke="#e4e4e4" stroke-width="0.22">0</text>
<line x1="610" y1="321.5" x2="610" y2="325" stroke="#aaa" stroke-width="1" />
<text x="610" y="332.7" font-size="9.2" fill="#e4e4e4" text-anchor="middle" textLength="4.89" lengthAdjust="spacingAndGlyphs"  stroke="#e4e4e4" stroke-width="0.22">0</text>
<line x1="606" y1="298.75" x2="610" y2="298.75" stroke="#aaa" stroke-width="1" />
<text x="605.8" y="302.05" font-size="9.2" fill="#e4e4e4" text-anchor="end" textLength="17.1" lengthAdjust="spacingAndGlyphs"  stroke="#e4e4e4" stroke-width="0.22">0,05</text>
<line x1="641.9" y1="321.5" x2="641.9" y2="325" stroke="#aaa" stroke-width="1" />
<text x="641.9" y="332.7" font-size="9.2" fill="#e4e4e4" text-anchor="middle" textLength="17.1" lengthAdjust="spacingAndGlyphs"  stroke="#e4e4e4" stroke-width="0.22">0,05</text>
<line x1="606" y1="276" x2="610" y2="276" stroke="#aaa" stroke-width="1" />
<text x="605.8" y="279.3" font-size="9.2" fill="#e4e4e4" text-anchor="end" textLength="12.21" lengthAdjust="spacingAndGlyphs"  stroke="#e4e4e4" stroke-width="0.22">0,1</text>
<line x1="673.8" y1="321.5" x2="673.8" y2="325" stroke="#aaa" stroke-width="1" />
<text x="673.8" y="332.7" font-size="9.2" fill="#e4e4e4" text-anchor="middle" textLength="12.21" lengthAdjust="spacingAndGlyphs"  stroke="#e4e4e4" stroke-width="0.22">0,1</text>
<line x1="606" y1="253.25" x2="610" y2="253.25" stroke="#aaa" stroke-width="1" />
<text x="605.8" y="256.55" font-size="9.2" fill="#e4e4e4" text-anchor="end" textLength="17.1" lengthAdjust="spacingAndGlyphs"  stroke="#e4e4e4" stroke-width="0.22">0,15</text>
<line x1="705.7" y1="321.5" x2="705.7" y2="325" stroke="#aaa" stroke-width="1" />
<text x="705.7" y="332.7" font-size="9.2" fill="#e4e4e4" text-anchor="middle" textLength="17.1" lengthAdjust="spacingAndGlyphs"  stroke="#e4e4e4" stroke-width="0.22">0,15</text>
<line x1="606" y1="230.5" x2="610" y2="230.5" stroke="#aaa" stroke-width="1" />
<text x="605.8" y="233.8" font-size="9.2" fill="#e4e4e4" text-anchor="end" textLength="12.21" lengthAdjust="spacingAndGlyphs"  stroke="#e4e4e4" stroke-width="0.22">0,2</text>
<line x1="737.6" y1="321.5" x2="737.6" y2="325" stroke="#aaa" stroke-width="1" />
<text x="737.6" y="332.7" font-size="9.2" fill="#e4e4e4" text-anchor="middle" textLength="12.21" lengthAdjust="spacingAndGlyphs"  stroke="#e4e4e4" stroke-width="0.22">0,2</text>
<line x1="606" y1="207.75" x2="610" y2="207.75" stroke="#aaa" stroke-width="1" />
<text x="605.8" y="211.05" font-size="9.2" fill="#e4e4e4" text-anchor="end" textLength="17.1" lengthAdjust="spacingAndGlyphs"  stroke="#e4e4e4" stroke-width="0.22">0,25</text>
<line x1="769.5" y1="321.5" x2="769.5" y2="325" stroke="#aaa" stroke-width="1" />
<text x="769.5" y="332.7" font-size="9.2" fill="#e4e4e4" text-anchor="middle" textLength="17.1" lengthAdjust="spacingAndGlyphs"  stroke="#e4e4e4" stroke-width="0.22">0,25</text>
<line x1="606" y1="185" x2="610" y2="185" stroke="#aaa" stroke-width="1" />
<text x="605.8" y="188.3" font-size="9.2" fill="#e4e4e4" text-anchor="end" textLength="12.21" lengthAdjust="spacingAndGlyphs"  stroke="#e4e4e4" stroke-width="0.22">0,3</text>
<line x1="801.4" y1="321.5" x2="801.4" y2="325" stroke="#aaa" stroke-width="1" />
<text x="801.4" y="332.7" font-size="9.2" fill="#e4e4e4" text-anchor="middle" textLength="12.21" lengthAdjust="spacingAndGlyphs"  stroke="#e4e4e4" stroke-width="0.22">0,3</text>
<line x1="606" y1="162.25" x2="610" y2="162.25" stroke="#aaa" stroke-width="1" />
<text x="605.8" y="165.55" font-size="9.2" fill="#e4e4e4" text-anchor="end" textLength="17.1" lengthAdjust="spacingAndGlyphs"  stroke="#e4e4e4" stroke-width="0.22">0,35</text>
<line x1="833.3" y1="321.5" x2="833.3" y2="325" stroke="#aaa" stroke-width="1" />
<text x="833.3" y="332.7" font-size="9.2" fill="#e4e4e4" text-anchor="middle" textLength="17.1" lengthAdjust="spacingAndGlyphs"  stroke="#e4e4e4" stroke-width="0.22">0,35</text>
<line x1="606" y1="139.5" x2="610" y2="139.5" stroke="#aaa" stroke-width="1" />
<text x="605.8" y="142.8" font-size="9.2" fill="#e4e4e4" text-anchor="end" textLength="12.21" lengthAdjust="spacingAndGlyphs"  stroke="#e4e4e4" stroke-width="0.22">0,4</text>
<line x1="865.2" y1="321.5" x2="865.2" y2="325" stroke="#aaa" stroke-width="1" />
<text x="865.2" y="332.7" font-size="9.2" fill="#e4e4e4" text-anchor="middle" textLength="12.21" lengthAdjust="spacingAndGlyphs"  stroke="#e4e4e4" stroke-width="0.22">0,4</text>
<line x1="606" y1="116.75" x2="610" y2="116.75" stroke="#aaa" stroke-width="1" />
<text x="605.8" y="120.05" font-size="9.2" fill="#e4e4e4" text-anchor="end" textLength="17.1" lengthAdjust="spacingAndGlyphs"  stroke="#e4e4e4" stroke-width="0.22">0,45</text>
<line x1="897.1" y1="321.5" x2="897.1" y2="325" stroke="#aaa" stroke-width="1" />
<text x="897.1" y="332.7" font-size="9.2" fill="#e4e4e4" text-anchor="middle" textLength="17.1" lengthAdjust="spacingAndGlyphs"  stroke="#e4e4e4" stroke-width="0.22">0,45</text>
<line x1="606" y1="94" x2="610" y2="94" stroke="#aaa" stroke-width="1" />
<text x="605.8" y="97.3" font-size="9.2" fill="#e4e4e4" text-anchor="end" textLength="12.21" lengthAdjust="spacingAndGlyphs"  stroke="#e4e4e4" stroke-width="0.22">0,5</text>
<line x1="929" y1="321.5" x2="929" y2="325" stroke="#aaa" stroke-width="1" />
<text x="929" y="332.7" font-size="9.2" fill="#e4e4e4" text-anchor="middle" textLength="12.21" lengthAdjust="spacingAndGlyphs"  stroke="#e4e4e4" stroke-width="0.22">0,5</text>
<line x1="606" y1="71.25" x2="610" y2="71.25" stroke="#aaa" stroke-width="1" />
<text x="605.8" y="74.55" font-size="9.2" fill="#e4e4e4" text-anchor="end" textLength="17.1" lengthAdjust="spacingAndGlyphs"  stroke="#e4e4e4" stroke-width="0.22">0,55</text>
<line x1="960.9" y1="321.5" x2="960.9" y2="325" stroke="#aaa" stroke-width="1" />
<text x="960.9" y="332.7" font-size="9.2" fill="#e4e4e4" text-anchor="middle" textLength="17.1" lengthAdjust="spacingAndGlyphs"  stroke="#e4e4e4" stroke-width="0.22">0,55</text>
<rect x="840.2" y="303" width="151.6" height="15.9" fill="#3b3b3b" />
<text x="840.8" y="315" font-size="11.9" fill="#f2f2f2" textLength="93" lengthAdjust="spacingAndGlyphs"  stroke="#f2f2f2" stroke-width="0.22">Gamut Coverage:</text>
<text x="940.6" y="315" font-size="11.9" fill="#f2f2f2" textLength="32.8" lengthAdjust="spacingAndGlyphs"  stroke="#f2f2f2" stroke-width="0.22">93,1%</text>
<rect x="893.05" y="79.19" width="8" height="7.4" fill="none" stroke="#f0f0f0" stroke-width="1.1"/>
<rect x="685.25" y="61.16" width="8" height="7.4" fill="none" stroke="#f0f0f0" stroke-width="1.1"/>
<rect x="717.43" y="245.26" width="8" height="7.4" fill="none" stroke="#f0f0f0" stroke-width="1.1"/>
<rect x="693.75" y="109.87" width="8" height="7.4" fill="none" stroke="#f0f0f0" stroke-width="1.1"/>
<rect x="800.09" y="167.06" width="8" height="7.4" fill="none" stroke="#f0f0f0" stroke-width="1.1"/>
<rect x="735.6" y="65.53" width="8" height="7.4" fill="none" stroke="#f0f0f0" stroke-width="1.1"/>
<circle cx="887.01" cy="85.06" r="2.6" fill="none" stroke="#1c1c1c" stroke-width="0.9" opacity="0.85"/>
<circle cx="690.01" cy="66" r="2.6" fill="none" stroke="#1c1c1c" stroke-width="0.9" opacity="0.85"/>
<circle cx="722.53" cy="240.18" r="2.6" fill="none" stroke="#1c1c1c" stroke-width="0.9" opacity="0.85"/>
<circle cx="698.5" cy="114.58" r="2.6" fill="none" stroke="#1c1c1c" stroke-width="0.9" opacity="0.85"/>
<circle cx="799.9" cy="170.95" r="2.6" fill="none" stroke="#1c1c1c" stroke-width="0.9" opacity="0.85"/>
<circle cx="738.21" cy="69.94" r="2.6" fill="none" stroke="#1c1c1c" stroke-width="0.9" opacity="0.85"/>
<rect x="731.82" y="104.11" width="7.8" height="7.2" fill="none" stroke="#0c0c0c" stroke-width="1.4"/>
<circle cx="734.64" cy="109.41" r="2.4" fill="#fff" stroke="#0c0c0c" stroke-width="1"/>
<text x="8.6" y="377.8" font-size="18.6" fill="#f2f2f2" textLength="131" lengthAdjust="spacingAndGlyphs"  stroke="#f2f2f2" stroke-width="0.22">Current Reading</text>
<text x="8.6" y="416.8" font-size="15.4" fill="#f2f2f2" textLength="60" lengthAdjust="spacingAndGlyphs"  stroke="#f2f2f2" stroke-width="0.22">x: 0,3087</text>
<text x="102.4" y="416.8" font-size="15.4" fill="#f2f2f2" textLength="61.5" lengthAdjust="spacingAndGlyphs"  stroke="#f2f2f2" stroke-width="0.22">y: 0,3253</text>
<text x="8.6" y="439.3" font-size="15.4" fill="#f2f2f2" textLength="57.7" lengthAdjust="spacingAndGlyphs"  stroke="#f2f2f2" stroke-width="0.22">fL: 96,78</text>
<text x="8.6" y="462.3" font-size="15.4" fill="#f2f2f2" textLength="86.8" lengthAdjust="spacingAndGlyphs"  stroke="#f2f2f2" stroke-width="0.22">cd/m²: 331,6</text>
<text x="279.6" y="359.3" font-size="9.8" fill="#e4e4e4" text-anchor="middle" textLength="49.5" lengthAdjust="spacingAndGlyphs"  stroke="#e4e4e4" stroke-width="0.22">RGB Balance</text>
<rect x="206.6" y="361.8" width="156.6" height="99.8" fill="#262626" />
<line x1="203.6" y1="371.2" x2="363.2" y2="371.2" stroke="#8c8c8c" stroke-width="1" />
<text x="202.6" y="374.5" font-size="9.2" fill="#e4e4e4" text-anchor="end" textLength="4.89" lengthAdjust="spacingAndGlyphs"  stroke="#e4e4e4" stroke-width="0.22">5</text>
<line x1="203.6" y1="412.7" x2="363.2" y2="412.7" stroke="#8c8c8c" stroke-width="1" />
<text x="202.6" y="416" font-size="9.2" fill="#e4e4e4" text-anchor="end" textLength="4.89" lengthAdjust="spacingAndGlyphs"  stroke="#e4e4e4" stroke-width="0.22">0</text>
<line x1="203.6" y1="454.2" x2="363.2" y2="454.2" stroke="#8c8c8c" stroke-width="1" />
<text x="202.6" y="457.5" font-size="9.2" fill="#e4e4e4" text-anchor="end" textLength="7.81" lengthAdjust="spacingAndGlyphs"  stroke="#e4e4e4" stroke-width="0.22">-5</text>
<path d="M206.6 464.6V361.8H363.2V464.6M206.6 461.6H363.2" fill="none" stroke="#8c8c8c" stroke-width="1"/>
<text x="285" y="471.9" font-size="9.6" fill="#e4e4e4" text-anchor="middle" textLength="24.5" lengthAdjust="spacingAndGlyphs"  stroke="#e4e4e4" stroke-width="0.22">100W</text>
<rect x="222.2" y="412.3" width="42" height="23.2" fill="#0a0a0a" />
<rect x="222.9" y="413" width="40.6" height="21.8" fill="url(#rbr)" />
<rect x="263.6" y="409.4" width="41.4" height="3.6" fill="#0a0a0a" />
<rect x="264.2" y="410" width="40.2" height="2.4" fill="url(#rbg)" />
<rect x="304.8" y="375.8" width="42" height="37.4" fill="#0a0a0a" />
<rect x="305.5" y="376.5" width="40.6" height="36" fill="url(#rbb)" />
<text x="483.4" y="355.4" font-size="9.8" fill="#e4e4e4" text-anchor="middle" textLength="45.5" lengthAdjust="spacingAndGlyphs"  stroke="#e4e4e4" stroke-width="0.22">CIE 1931 xy</text>
<rect x="381.2" y="357.6" width="204.6" height="3.5" fill="url(#z0)" />
<rect x="381.2" y="360.6" width="204.6" height="3.5" fill="url(#z1)" />
<rect x="381.2" y="363.6" width="204.6" height="3.5" fill="url(#z2)" />
<rect x="381.2" y="366.6" width="204.6" height="3.5" fill="url(#z3)" />
<rect x="381.2" y="369.6" width="204.6" height="3.5" fill="url(#z4)" />
<rect x="381.2" y="372.6" width="204.6" height="3.5" fill="url(#z5)" />
<rect x="381.2" y="375.6" width="204.6" height="3.5" fill="url(#z6)" />
<rect x="381.2" y="378.6" width="204.6" height="3.5" fill="url(#z7)" />
<rect x="381.2" y="381.6" width="204.6" height="3.5" fill="url(#z8)" />
<rect x="381.2" y="384.6" width="204.6" height="3.5" fill="url(#z9)" />
<rect x="381.2" y="387.6" width="204.6" height="3.5" fill="url(#z10)" />
<rect x="381.2" y="390.6" width="204.6" height="3.5" fill="url(#z11)" />
<rect x="381.2" y="393.6" width="204.6" height="3.5" fill="url(#z12)" />
<rect x="381.2" y="396.6" width="204.6" height="3.5" fill="url(#z13)" />
<rect x="381.2" y="399.6" width="204.6" height="3.5" fill="url(#z14)" />
<rect x="381.2" y="402.6" width="204.6" height="3.5" fill="url(#z15)" />
<rect x="381.2" y="405.6" width="204.6" height="3.5" fill="url(#z16)" />
<rect x="381.2" y="408.6" width="204.6" height="3.5" fill="url(#z17)" />
<rect x="381.2" y="411.6" width="204.6" height="3.5" fill="url(#z18)" />
<rect x="381.2" y="414.6" width="204.6" height="3.5" fill="url(#z19)" />
<rect x="381.2" y="417.6" width="204.6" height="3.5" fill="url(#z20)" />
<rect x="381.2" y="420.6" width="204.6" height="3.5" fill="url(#z21)" />
<rect x="381.2" y="423.6" width="204.6" height="3.5" fill="url(#z22)" />
<rect x="381.2" y="426.6" width="204.6" height="3.5" fill="url(#z23)" />
<rect x="381.2" y="429.6" width="204.6" height="3.5" fill="url(#z24)" />
<rect x="381.2" y="432.6" width="204.6" height="3.5" fill="url(#z25)" />
<rect x="381.2" y="435.6" width="204.6" height="3.5" fill="url(#z26)" />
<rect x="381.2" y="438.6" width="204.6" height="3.5" fill="url(#z27)" />
<rect x="381.2" y="441.6" width="204.6" height="3.5" fill="url(#z28)" />
<rect x="381.2" y="444.6" width="204.6" height="3.5" fill="url(#z29)" />
<rect x="381.2" y="447.6" width="204.6" height="3.5" fill="url(#z30)" />
<rect x="381.2" y="450.6" width="204.6" height="3.5" fill="url(#z31)" />
<rect x="381.2" y="453.6" width="204.6" height="3.5" fill="url(#z32)" />
<rect x="381.2" y="456.6" width="204.6" height="3.5" fill="url(#z33)" />
<rect x="381.2" y="459.6" width="204.6" height="3.5" fill="url(#z34)" />
<rect x="381.2" y="462.6" width="204.6" height="3.5" fill="url(#z35)" />
<rect x="381.2" y="465.6" width="204.6" height="1.4" fill="url(#z36)" />
<rect x="479.4" y="408.4" width="7.6" height="7.4" fill="none" stroke="#050505" stroke-width="1.6"/>
<circle cx="466" cy="420.1" r="2.4" fill="#fff" stroke="#050505" stroke-width="1.2"/>
<rect x="0" y="474.5" width="1000" height="25.5" fill="url(#bs)" />
<rect x="0" y="476.3" width="55" height="23.7" fill="url(#pb)" rx="2"/>
<rect x="2.4" y="478.7" width="50.4" height="13.2" rx="1.6" fill="#c8c8c8" stroke="#2a2a2a" stroke-width="0.6"/>
<text x="27.6" y="497.8" font-size="4.2" fill="#2c2c2c" text-anchor="middle" >White</text>
<rect x="55.45" y="476.3" width="55" height="23.7" fill="url(#pb)" rx="2"/>
<rect x="57.85" y="478.7" width="50.4" height="13.2" rx="1.6" fill="#c80000" stroke="#2a2a2a" stroke-width="0.6"/>
<text x="83.05" y="497.8" font-size="4.2" fill="#2c2c2c" text-anchor="middle" >Red</text>
<rect x="110.9" y="476.3" width="55" height="23.7" fill="url(#pb)" rx="2"/>
<rect x="113.3" y="478.7" width="50.4" height="13.2" rx="1.6" fill="#00c800" stroke="#2a2a2a" stroke-width="0.6"/>
<text x="138.5" y="497.8" font-size="4.2" fill="#2c2c2c" text-anchor="middle" >Green</text>
<rect x="166.35" y="476.3" width="55" height="23.7" fill="url(#pb)" rx="2"/>
<rect x="168.75" y="478.7" width="50.4" height="13.2" rx="1.6" fill="#0000c0" stroke="#2a2a2a" stroke-width="0.6"/>
<text x="193.95" y="497.8" font-size="4.2" fill="#2c2c2c" text-anchor="middle" >Blue</text>
<rect x="221.8" y="476.3" width="55" height="23.7" fill="url(#pb)" rx="2"/>
<rect x="224.2" y="478.7" width="50.4" height="13.2" rx="1.6" fill="#00c8c8" stroke="#2a2a2a" stroke-width="0.6"/>
<text x="249.4" y="497.8" font-size="4.2" fill="#2c2c2c" text-anchor="middle" >Cyan</text>
<rect x="277.25" y="476.3" width="55" height="23.7" fill="url(#pb)" rx="2"/>
<rect x="279.65" y="478.7" width="50.4" height="13.2" rx="1.6" fill="#c800c8" stroke="#2a2a2a" stroke-width="0.6"/>
<text x="304.85" y="497.8" font-size="4.2" fill="#2c2c2c" text-anchor="middle" >Magenta</text>
<rect x="332.7" y="476.3" width="55" height="23.7" fill="url(#pb)" rx="2"/>
<rect x="335.1" y="478.7" width="50.4" height="13.2" rx="1.6" fill="#c8c800" stroke="#2a2a2a" stroke-width="0.6"/>
<text x="360.3" y="497.8" font-size="4.2" fill="#2c2c2c" text-anchor="middle" >Yellow</text>
<rect x="388.15" y="476.3" width="55" height="23.7" fill="#2c2c2c" rx="2"/>
<rect x="390.05" y="478" width="51.6" height="14.4" rx="2.2" fill="#ffffff" stroke="#0a0a0a" stroke-width="1.5"/>
<text x="415.75" y="497.8" font-size="4.2" fill="#fff" text-anchor="middle" font-weight="bold" >100W</text>
<rect x="882" y="476.6" width="118" height="23.4" fill="#3c3c3c" />
<rect x="882" y="476.6" width="17.3" height="6.6" fill="url(#nb)" />
<circle cx="890.6" cy="479.4" r="1.3" fill="#444"/>
<rect x="882" y="483.7" width="17.3" height="16.3" fill="url(#nb2)" />
<rect x="885.3" y="486.2" width="10.8" height="11.2" rx="1.4" fill="#d8d8d8" stroke="#2a2a2a" stroke-width="0.8"/><rect x="887.2" y="488.2" width="7" height="7.2" fill="#0a0a0a"/>
<rect x="900" y="476.6" width="16" height="10.8" fill="url(#nb)" />
<circle cx="908" cy="482" r="2.9" fill="#5a5a5a" stroke="#bdbdbd" stroke-width="0.5"/>
<rect x="916.45" y="476.6" width="16" height="10.8" fill="url(#nb)" />
<circle cx="924.45" cy="482" r="2.9" fill="#5a5a5a" stroke="#bdbdbd" stroke-width="0.5"/>
<rect x="932.9" y="476.6" width="16" height="10.8" fill="url(#nb)" />
<circle cx="940.9" cy="482" r="2.9" fill="#5a5a5a" stroke="#bdbdbd" stroke-width="0.5"/>
<rect x="949.35" y="476.6" width="16" height="10.8" fill="url(#nb)" />
<circle cx="957.35" cy="482" r="2.9" fill="#5a5a5a" stroke="#bdbdbd" stroke-width="0.5"/>
<rect x="965.8" y="476.6" width="16" height="10.8" fill="url(#nb)" />
<circle cx="973.8" cy="482" r="2.9" fill="#5a5a5a" stroke="#bdbdbd" stroke-width="0.5"/>
<rect x="906.8" y="480.8" width="2.4" height="2.4" fill="#111"/>
<path d="M923.6 480.5v3l2.6-1.5z" fill="#111"/>
<text x="941" y="484.2" font-size="5.6" fill="#e8e8e8" text-anchor="middle" font-weight="bold" >R</text>
<path d="M955.6 482.4a1.9 1.5 0 0 1 3.6 0" fill="none" stroke="#ddd" stroke-width="0.8"/>
<path d="M972.6 480.9h3.2v2.6h-3.2z" fill="none" stroke="#ddd" stroke-width="0.7"/>
<rect x="982.2" y="476.6" width="17.8" height="10.8" fill="#303030" />
<g stroke="#f01010" stroke-width="2.3" stroke-linecap="butt"><path d="M990.6 477v9.6M986.4 479.4l8.4 4.8M986.4 484.2l8.4-4.8"/></g>
<rect x="900" y="488" width="49.2" height="12" fill="url(#nb)" />
<rect x="949.8" y="488" width="50.2" height="12" fill="url(#nb)" />
<circle cx="911.6" cy="493.6" r="2.9" fill="#7c7c7c" stroke="#c4c4c4" stroke-width="0.5"/><path d="M912.6 492.2l-2 1.4 2 1.4" fill="none" stroke="#555" stroke-width="0.8"/>
<circle cx="989" cy="493.6" r="2.9" fill="#7c7c7c" stroke="#c4c4c4" stroke-width="0.5"/><path d="M988 492.2l2 1.4-2 1.4" fill="none" stroke="#555" stroke-width="0.8"/>
<text x="920.6" y="496.5" font-size="9.6" fill="#262626" textLength="18.4" lengthAdjust="spacingAndGlyphs"  stroke="#262626" stroke-width="0.22">Back</text>
<text x="959.6" y="496.5" font-size="9.6" fill="#262626" textLength="18.4" lengthAdjust="spacingAndGlyphs"  stroke="#262626" stroke-width="0.22">Next</text>
<rect x="596" y="349.2" width="379.7" height="18.6" fill="url(#th)" />
<rect x="596" y="349.2" width="8.8" height="18.6" fill="#060606" />
<g clip-path="url(#tbc)">
<text x="651" y="363.1" font-size="10.6" fill="#f0f0f0" textLength="25.2" lengthAdjust="spacingAndGlyphs"  stroke="#f0f0f0" stroke-width="0.22">White</text>
<text x="698.6" y="363.1" font-size="10.6" fill="#f0f0f0" textLength="17.9" lengthAdjust="spacingAndGlyphs"  stroke="#f0f0f0" stroke-width="0.22">Red</text>
<text x="740.4" y="363.1" font-size="10.6" fill="#f0f0f0" textLength="25.5" lengthAdjust="spacingAndGlyphs"  stroke="#f0f0f0" stroke-width="0.22">Green</text>
<text x="788" y="363.1" font-size="10.6" fill="#f0f0f0" textLength="16.8" lengthAdjust="spacingAndGlyphs"  stroke="#f0f0f0" stroke-width="0.22">Blue</text>
<text x="829.7" y="363.1" font-size="10.6" fill="#f0f0f0" textLength="20.2" lengthAdjust="spacingAndGlyphs"  stroke="#f0f0f0" stroke-width="0.22">Cyan</text>
<text x="877" y="363.1" font-size="10.6" fill="#f0f0f0" textLength="36.8" lengthAdjust="spacingAndGlyphs"  stroke="#f0f0f0" stroke-width="0.22">Magenta</text>
<text x="919.6" y="363.1" font-size="10.6" fill="#f0f0f0" textLength="26.9" lengthAdjust="spacingAndGlyphs"  stroke="#f0f0f0" stroke-width="0.22">Yellow</text>
<text x="967.7" y="363.1" font-size="10.6" fill="#f0f0f0" textLength="26.5" lengthAdjust="spacingAndGlyphs"  stroke="#f0f0f0" stroke-width="0.22">100W</text>
<rect x="596" y="367.8" width="379.7" height="17.3" fill="#3b3b3b" />
<rect x="596" y="367.8" width="8.8" height="17.3" fill="#1c1c1c" />
<text x="607.6" y="380.6" font-size="10.6" fill="#f0f0f0" textLength="36.24" lengthAdjust="spacingAndGlyphs"  stroke="#f0f0f0" stroke-width="0.22">x: CIE31</text>
<text x="651" y="380.6" font-size="10.6" fill="#f0f0f0" textLength="30.87" lengthAdjust="spacingAndGlyphs"  stroke="#f0f0f0" stroke-width="0.22">0,3085</text>
<text x="698.6" y="380.6" font-size="10.6" fill="#f0f0f0" textLength="30.87" lengthAdjust="spacingAndGlyphs"  stroke="#f0f0f0" stroke-width="0.22">0,6194</text>
<text x="740.4" y="380.6" font-size="10.6" fill="#f0f0f0" textLength="30.87" lengthAdjust="spacingAndGlyphs"  stroke="#f0f0f0" stroke-width="0.22">0,2991</text>
<text x="788" y="380.6" font-size="10.6" fill="#f0f0f0" textLength="30.87" lengthAdjust="spacingAndGlyphs"  stroke="#f0f0f0" stroke-width="0.22">0,1559</text>
<text x="829.7" y="380.6" font-size="10.6" fill="#f0f0f0" textLength="30.87" lengthAdjust="spacingAndGlyphs"  stroke="#f0f0f0" stroke-width="0.22">0,2248</text>
<text x="877" y="380.6" font-size="10.6" fill="#f0f0f0" textLength="30.87" lengthAdjust="spacingAndGlyphs"  stroke="#f0f0f0" stroke-width="0.22">0,3152</text>
<text x="919.6" y="380.6" font-size="10.6" fill="#f0f0f0" textLength="30.87" lengthAdjust="spacingAndGlyphs"  stroke="#f0f0f0" stroke-width="0.22">0,4137</text>
<text x="967.7" y="380.6" font-size="10.6" fill="#f0f0f0" textLength="30.87" lengthAdjust="spacingAndGlyphs"  stroke="#f0f0f0" stroke-width="0.22">0,3127</text>
<rect x="596" y="385" width="379.7" height="17.3" fill="#6c6c6c" />
<rect x="596" y="385" width="8.8" height="17.3" fill="#383838" />
<text x="607.6" y="397.8" font-size="10.6" fill="#f0f0f0" textLength="36.44" lengthAdjust="spacingAndGlyphs"  stroke="#f0f0f0" stroke-width="0.22">y: CIE31</text>
<text x="651" y="397.8" font-size="10.6" fill="#f0f0f0" textLength="30.87" lengthAdjust="spacingAndGlyphs"  stroke="#f0f0f0" stroke-width="0.22">0,3257</text>
<text x="698.6" y="397.8" font-size="10.6" fill="#f0f0f0" textLength="30.87" lengthAdjust="spacingAndGlyphs"  stroke="#f0f0f0" stroke-width="0.22">0,3279</text>
<text x="740.4" y="397.8" font-size="10.6" fill="#f0f0f0" textLength="30.87" lengthAdjust="spacingAndGlyphs"  stroke="#f0f0f0" stroke-width="0.22">0,5899</text>
<text x="788" y="397.8" font-size="10.6" fill="#f0f0f0" textLength="30.87" lengthAdjust="spacingAndGlyphs"  stroke="#f0f0f0" stroke-width="0.22">0,0693</text>
<text x="829.7" y="397.8" font-size="10.6" fill="#f0f0f0" textLength="30.87" lengthAdjust="spacingAndGlyphs"  stroke="#f0f0f0" stroke-width="0.22">0,3246</text>
<text x="877" y="397.8" font-size="10.6" fill="#f0f0f0" textLength="30.87" lengthAdjust="spacingAndGlyphs"  stroke="#f0f0f0" stroke-width="0.22">0,1546</text>
<text x="919.6" y="397.8" font-size="10.6" fill="#f0f0f0" textLength="30.87" lengthAdjust="spacingAndGlyphs"  stroke="#f0f0f0" stroke-width="0.22">0,5025</text>
<text x="967.7" y="397.8" font-size="10.6" fill="#f0f0f0" textLength="30.87" lengthAdjust="spacingAndGlyphs"  stroke="#f0f0f0" stroke-width="0.22">0,3253</text>
<rect x="596" y="402.2" width="379.7" height="17.3" fill="#3b3b3b" />
<rect x="596" y="402.2" width="8.8" height="17.3" fill="#1c1c1c" />
<text x="607.6" y="415" font-size="10.6" fill="#f0f0f0" textLength="5.83" lengthAdjust="spacingAndGlyphs"  stroke="#f0f0f0" stroke-width="0.22">Y</text>
<text x="651" y="415" font-size="10.6" fill="#f0f0f0" textLength="42.29" lengthAdjust="spacingAndGlyphs"  stroke="#f0f0f0" stroke-width="0.22">181,2250</text>
<text x="698.6" y="415" font-size="10.6" fill="#f0f0f0" textLength="36.58" lengthAdjust="spacingAndGlyphs"  stroke="#f0f0f0" stroke-width="0.22">38,8162</text>
<text x="740.4" y="415" font-size="10.6" fill="#f0f0f0" textLength="42.29" lengthAdjust="spacingAndGlyphs"  stroke="#f0f0f0" stroke-width="0.22">129,9523</text>
<text x="788" y="415" font-size="10.6" fill="#f0f0f0" textLength="36.58" lengthAdjust="spacingAndGlyphs"  stroke="#f0f0f0" stroke-width="0.22">15,8157</text>
<text x="829.7" y="415" font-size="10.6" fill="#f0f0f0" textLength="42.29" lengthAdjust="spacingAndGlyphs"  stroke="#f0f0f0" stroke-width="0.22">143,3689</text>
<text x="877" y="415" font-size="10.6" fill="#f0f0f0" textLength="36.58" lengthAdjust="spacingAndGlyphs"  stroke="#f0f0f0" stroke-width="0.22">52,9242</text>
<text x="919.6" y="415" font-size="10.6" fill="#f0f0f0" textLength="42.29" lengthAdjust="spacingAndGlyphs"  stroke="#f0f0f0" stroke-width="0.22">167,6102</text>
<text x="967.7" y="415" font-size="10.6" fill="#f0f0f0" textLength="42.29" lengthAdjust="spacingAndGlyphs"  stroke="#f0f0f0" stroke-width="0.22">331,6045</text>
<rect x="596" y="419.4" width="379.7" height="17.3" fill="#6c6c6c" />
<rect x="596" y="419.4" width="8.8" height="17.3" fill="#383838" />
<text x="607.6" y="432.2" font-size="10.6" fill="#f0f0f0" textLength="38.7" lengthAdjust="spacingAndGlyphs"  stroke="#f0f0f0" stroke-width="0.22">Target Y</text>
<text x="651" y="432.2" font-size="10.6" fill="#f0f0f0" textLength="42.29" lengthAdjust="spacingAndGlyphs"  stroke="#f0f0f0" stroke-width="0.22">165,6425</text>
<text x="698.6" y="432.2" font-size="10.6" fill="#f0f0f0" textLength="36.58" lengthAdjust="spacingAndGlyphs"  stroke="#f0f0f0" stroke-width="0.22">35,2249</text>
<text x="740.4" y="432.2" font-size="10.6" fill="#f0f0f0" textLength="42.29" lengthAdjust="spacingAndGlyphs"  stroke="#f0f0f0" stroke-width="0.22">118,4606</text>
<text x="788" y="432.2" font-size="10.6" fill="#f0f0f0" textLength="36.58" lengthAdjust="spacingAndGlyphs"  stroke="#f0f0f0" stroke-width="0.22">11,9570</text>
<text x="829.7" y="432.2" font-size="10.6" fill="#f0f0f0" textLength="42.29" lengthAdjust="spacingAndGlyphs"  stroke="#f0f0f0" stroke-width="0.22">130,4176</text>
<text x="877" y="432.2" font-size="10.6" fill="#f0f0f0" textLength="36.58" lengthAdjust="spacingAndGlyphs"  stroke="#f0f0f0" stroke-width="0.22">47,1819</text>
<text x="919.6" y="432.2" font-size="10.6" fill="#f0f0f0" textLength="42.29" lengthAdjust="spacingAndGlyphs"  stroke="#f0f0f0" stroke-width="0.22">153,6855</text>
<text x="967.7" y="432.2" font-size="10.6" fill="#f0f0f0" textLength="42.29" lengthAdjust="spacingAndGlyphs"  stroke="#f0f0f0" stroke-width="0.22">331,6045</text>
<rect x="596" y="436.6" width="379.7" height="17.3" fill="#3b3b3b" />
<rect x="596" y="436.6" width="8.8" height="17.3" fill="#1c1c1c" />
<text x="607.6" y="449.4" font-size="10.6" fill="#f0f0f0" textLength="37.95" lengthAdjust="spacingAndGlyphs"  stroke="#f0f0f0" stroke-width="0.22">ΔE 2000</text>
<text x="651" y="449.4" font-size="10.6" fill="#f0f0f0" textLength="30.87" lengthAdjust="spacingAndGlyphs"  stroke="#f0f0f0" stroke-width="0.22">2,6474</text>
<text x="698.6" y="449.4" font-size="10.6" fill="#f0f0f0" textLength="30.87" lengthAdjust="spacingAndGlyphs"  stroke="#f0f0f0" stroke-width="0.22">3,4052</text>
<text x="740.4" y="449.4" font-size="10.6" fill="#f0f0f0" textLength="30.87" lengthAdjust="spacingAndGlyphs"  stroke="#f0f0f0" stroke-width="0.22">2,1081</text>
<text x="788" y="449.4" font-size="10.6" fill="#f0f0f0" textLength="30.87" lengthAdjust="spacingAndGlyphs"  stroke="#f0f0f0" stroke-width="0.22">2,8540</text>
<text x="829.7" y="449.4" font-size="10.6" fill="#f0f0f0" textLength="30.87" lengthAdjust="spacingAndGlyphs"  stroke="#f0f0f0" stroke-width="0.22">2,3129</text>
<text x="877" y="449.4" font-size="10.6" fill="#f0f0f0" textLength="30.87" lengthAdjust="spacingAndGlyphs"  stroke="#f0f0f0" stroke-width="0.22">2,3640</text>
<text x="919.6" y="449.4" font-size="10.6" fill="#f0f0f0" textLength="30.87" lengthAdjust="spacingAndGlyphs"  stroke="#f0f0f0" stroke-width="0.22">2,1225</text>
<text x="967.7" y="449.4" font-size="10.6" fill="#f0f0f0" textLength="30.87" lengthAdjust="spacingAndGlyphs"  stroke="#f0f0f0" stroke-width="0.22">2,0512</text>
<rect x="596" y="453.8" width="379.7" height="17.3" fill="#6c6c6c" />
<rect x="596" y="453.8" width="8.8" height="17.3" fill="#383838" />
<text x="607.6" y="466.6" font-size="10.6" fill="#f0f0f0" textLength="25.84" lengthAdjust="spacingAndGlyphs"  stroke="#f0f0f0" stroke-width="0.22">dEITP</text>
<text x="651" y="466.6" font-size="10.6" fill="#f0f0f0" textLength="30.87" lengthAdjust="spacingAndGlyphs"  stroke="#f0f0f0" stroke-width="0.22">7,1647</text>
<text x="698.6" y="466.6" font-size="10.6" fill="#f0f0f0" textLength="36.58" lengthAdjust="spacingAndGlyphs"  stroke="#f0f0f0" stroke-width="0.22">16,0987</text>
<text x="740.4" y="466.6" font-size="10.6" fill="#f0f0f0" textLength="30.87" lengthAdjust="spacingAndGlyphs"  stroke="#f0f0f0" stroke-width="0.22">7,8975</text>
<text x="788" y="466.6" font-size="10.6" fill="#f0f0f0" textLength="36.58" lengthAdjust="spacingAndGlyphs"  stroke="#f0f0f0" stroke-width="0.22">10,4483</text>
<text x="829.7" y="466.6" font-size="10.6" fill="#f0f0f0" textLength="30.87" lengthAdjust="spacingAndGlyphs"  stroke="#f0f0f0" stroke-width="0.22">7,3181</text>
<text x="877" y="466.6" font-size="10.6" fill="#f0f0f0" textLength="30.87" lengthAdjust="spacingAndGlyphs"  stroke="#f0f0f0" stroke-width="0.22">9,0945</text>
<text x="919.6" y="466.6" font-size="10.6" fill="#f0f0f0" textLength="30.87" lengthAdjust="spacingAndGlyphs"  stroke="#f0f0f0" stroke-width="0.22">7,3897</text>
<text x="967.7" y="466.6" font-size="10.6" fill="#f0f0f0" textLength="30.87" lengthAdjust="spacingAndGlyphs"  stroke="#f0f0f0" stroke-width="0.22">6,1234</text>
</g>
<rect x="604.8" y="461.5" width="371.3" height="10" fill="#565656" />
<rect x="975.7" y="367.8" width="10.3" height="93" fill="#565656" />
<rect x="976.3" y="368.6" width="9.1" height="9.2" fill="url(#arw)" rx="1"/>
<path d="M978.6 375l2.3-3.4 2.3 3.4z" fill="#333"/>
<rect x="976.9" y="379" width="7.9" height="57" fill="#3e3e3e" rx="2.4" stroke="#4c4c4c" stroke-width="0.6"/>
<rect x="976.3" y="450.8" width="9.1" height="9.2" fill="url(#arw)" rx="1"/>
<path d="M978.6 453.8l2.3 3.4 2.3-3.4z" fill="#333"/>
<rect x="605.8" y="462" width="9" height="9" fill="url(#arw)" rx="1"/>
<path d="M612.2 464l-3.4 2.5 3.4 2.5z" fill="#333"/>
<rect x="616.4" y="462.6" width="317.6" height="7.8" fill="#3e3e3e" rx="2.4" stroke="#4c4c4c" stroke-width="0.6"/>
<rect x="967.4" y="462" width="9" height="9" fill="url(#arw)" rx="1"/>
<path d="M970.2 464l3.4 2.5-3.4 2.5z" fill="#333"/>
</svg>
</body></html>
